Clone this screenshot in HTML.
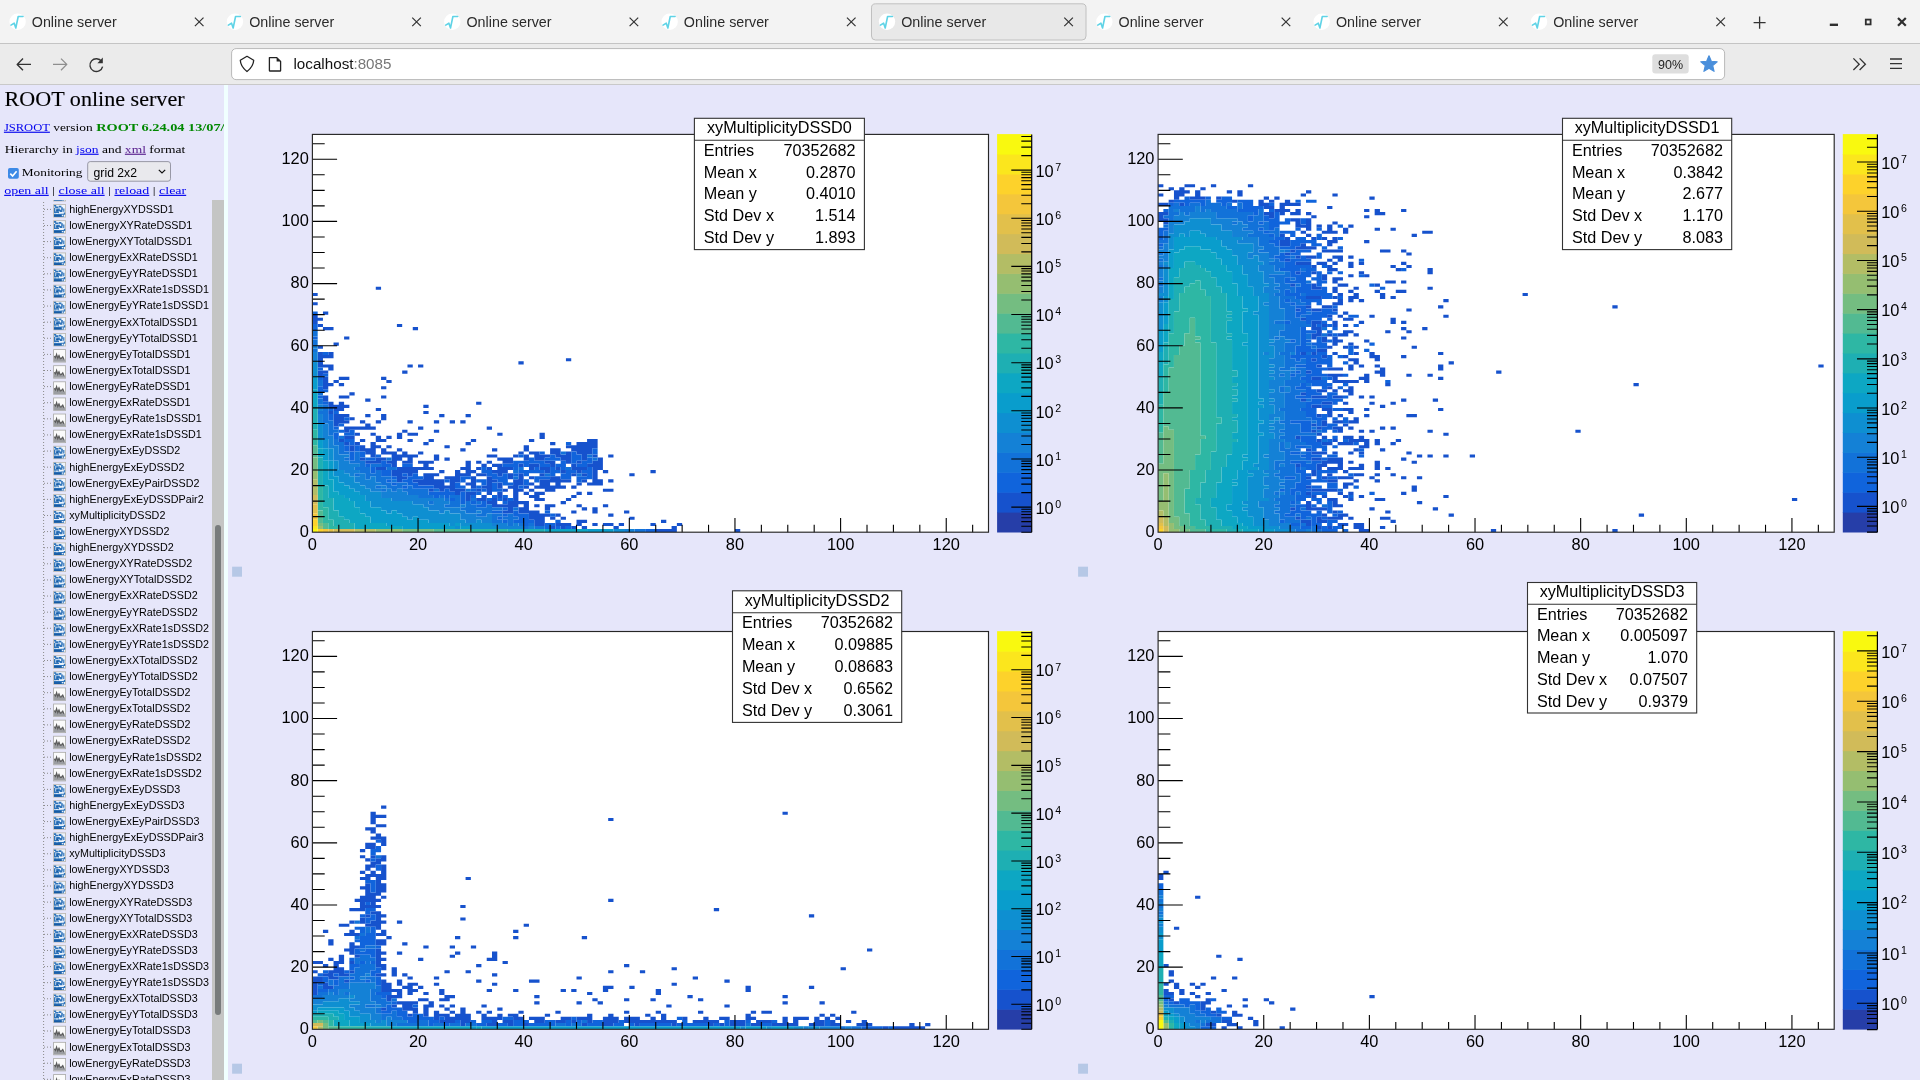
<!DOCTYPE html><html><head><meta charset="utf-8"><title>Online server</title><style>html,body{margin:0;padding:0;overflow:hidden;background:#e6e6fa}svg{display:block;will-change:transform}</style></head><body>
<svg width="1920" height="1080" viewBox="0 0 1920 1080">
<defs></defs>
<rect x="0" y="0" width="1920" height="1080" fill="#e6e6fa"/>
<rect x="0" y="0" width="1920" height="43" fill="#f3f3f3"/>
<rect x="0" y="43" width="1920" height="1" fill="#c4c4c4"/>
<rect x="0" y="44" width="1920" height="40.5" fill="#ebebeb"/>
<rect x="0" y="84" width="1920" height="1" fill="#c9c9c9"/>
<rect x="871.5" y="3.8" width="214.5" height="36.2" rx="4" fill="#e8e8e8" stroke="#c0c0c0" stroke-width="1"/>
<circle cx="17.6" cy="21.8" r="8.2" fill="#fff"/><path d="M11 25.1 L14.2 23.2 L15.8 28 L18.2 16.5 L23 16.5" fill="none" stroke="#5fd3e6" stroke-width="1.6" stroke-linejoin="round" stroke-linecap="round"/>
<text x="31.8" y="27" font-family='"Liberation Sans",sans-serif' font-size="14.3" fill="#2b2b2b">Online server</text>
<path d="M194.9 17.6 L203.5 26.2 M203.5 17.6 L194.9 26.2" stroke="#333" stroke-width="1.2" fill="none"/>
<circle cx="234.95" cy="21.8" r="8.2" fill="#fff"/><path d="M228.35 25.1 L231.55 23.2 L233.15 28 L235.55 16.5 L240.35 16.5" fill="none" stroke="#5fd3e6" stroke-width="1.6" stroke-linejoin="round" stroke-linecap="round"/>
<text x="249.15" y="27" font-family='"Liberation Sans",sans-serif' font-size="14.3" fill="#2b2b2b">Online server</text>
<path d="M412.25 17.6 L420.85 26.2 M420.85 17.6 L412.25 26.2" stroke="#333" stroke-width="1.2" fill="none"/>
<circle cx="452.3" cy="21.8" r="8.2" fill="#fff"/><path d="M445.7 25.1 L448.9 23.2 L450.5 28 L452.9 16.5 L457.7 16.5" fill="none" stroke="#5fd3e6" stroke-width="1.6" stroke-linejoin="round" stroke-linecap="round"/>
<text x="466.5" y="27" font-family='"Liberation Sans",sans-serif' font-size="14.3" fill="#2b2b2b">Online server</text>
<path d="M629.6 17.6 L638.2 26.2 M638.2 17.6 L629.6 26.2" stroke="#333" stroke-width="1.2" fill="none"/>
<circle cx="669.65" cy="21.8" r="8.2" fill="#fff"/><path d="M663.05 25.1 L666.25 23.2 L667.85 28 L670.25 16.5 L675.05 16.5" fill="none" stroke="#5fd3e6" stroke-width="1.6" stroke-linejoin="round" stroke-linecap="round"/>
<text x="683.85" y="27" font-family='"Liberation Sans",sans-serif' font-size="14.3" fill="#2b2b2b">Online server</text>
<path d="M846.95 17.6 L855.55 26.2 M855.55 17.6 L846.95 26.2" stroke="#333" stroke-width="1.2" fill="none"/>
<circle cx="887" cy="21.8" r="8.2" fill="#fff"/><path d="M880.4 25.1 L883.6 23.2 L885.2 28 L887.6 16.5 L892.4 16.5" fill="none" stroke="#5fd3e6" stroke-width="1.6" stroke-linejoin="round" stroke-linecap="round"/>
<text x="901.2" y="27" font-family='"Liberation Sans",sans-serif' font-size="14.3" fill="#2b2b2b">Online server</text>
<path d="M1064.3 17.6 L1072.9 26.2 M1072.9 17.6 L1064.3 26.2" stroke="#333" stroke-width="1.2" fill="none"/>
<circle cx="1104.35" cy="21.8" r="8.2" fill="#fff"/><path d="M1097.75 25.1 L1100.95 23.2 L1102.55 28 L1104.95 16.5 L1109.75 16.5" fill="none" stroke="#5fd3e6" stroke-width="1.6" stroke-linejoin="round" stroke-linecap="round"/>
<text x="1118.55" y="27" font-family='"Liberation Sans",sans-serif' font-size="14.3" fill="#2b2b2b">Online server</text>
<path d="M1281.65 17.6 L1290.25 26.2 M1290.25 17.6 L1281.65 26.2" stroke="#333" stroke-width="1.2" fill="none"/>
<circle cx="1321.7" cy="21.8" r="8.2" fill="#fff"/><path d="M1315.1 25.1 L1318.3 23.2 L1319.9 28 L1322.3 16.5 L1327.1 16.5" fill="none" stroke="#5fd3e6" stroke-width="1.6" stroke-linejoin="round" stroke-linecap="round"/>
<text x="1335.9" y="27" font-family='"Liberation Sans",sans-serif' font-size="14.3" fill="#2b2b2b">Online server</text>
<path d="M1499 17.6 L1507.6 26.2 M1507.6 17.6 L1499 26.2" stroke="#333" stroke-width="1.2" fill="none"/>
<circle cx="1539.05" cy="21.8" r="8.2" fill="#fff"/><path d="M1532.45 25.1 L1535.65 23.2 L1537.25 28 L1539.65 16.5 L1544.45 16.5" fill="none" stroke="#5fd3e6" stroke-width="1.6" stroke-linejoin="round" stroke-linecap="round"/>
<text x="1553.25" y="27" font-family='"Liberation Sans",sans-serif' font-size="14.3" fill="#2b2b2b">Online server</text>
<path d="M1716.35 17.6 L1724.95 26.2 M1724.95 17.6 L1716.35 26.2" stroke="#333" stroke-width="1.2" fill="none"/>
<path d="M1759.6 16.6 V28.8 M1753.6 22.6 H1765.6" stroke="#333" stroke-width="1.3" fill="none"/>
<rect x="1829.8" y="23.6" width="8.2" height="2.4" fill="#2e2e2e"/>
<rect x="1865.8" y="19.6" width="4.8" height="4.8" fill="none" stroke="#2e2e2e" stroke-width="1.8"/>
<path d="M1898 18 L1905.8 25.8 M1905.8 18 L1898 25.8" stroke="#2e2e2e" stroke-width="2.2" fill="none"/>
<path d="M17.2 64.4 H31 M23 58.6 L17.2 64.4 L23 70.2" stroke="#333" stroke-width="1.4" fill="none" stroke-linejoin="round"/>
<path d="M53 64.4 H66.8 M61 58.6 L66.8 64.4 L61 70.2" stroke="#8e8e8e" stroke-width="1.3" fill="none" stroke-linejoin="round"/>
<path d="M101.6 61.4 A6.4 6.4 0 1 0 102.6 66.6" stroke="#333" stroke-width="1.4" fill="none"/>
<path d="M102.8 57.6 L102.8 63.2 L97.4 63.2 Z" fill="#333"/>
<rect x="231.6" y="48.6" width="1493" height="31" rx="4.5" fill="#fff" stroke="#b9b9b9" stroke-width="1"/>
<path d="M247 56.3 L253.7 60.3 C253.5 65 250.8 68.6 247 71.6 C243.2 68.6 240.5 65 240.3 60.3 Z" fill="none" stroke="#222" stroke-width="1.3" stroke-linejoin="round"/>
<path d="M269.4 57.6 H276.8 L280.6 61.4 V70.4 Q280.6 71 280 71 H270 Q269.4 71 269.4 70.4 Z" fill="none" stroke="#222" stroke-width="1.3" stroke-linejoin="round"/>
<path d="M276.6 57.8 V61.6 H280.4 Z" fill="#222"/>
<text x="293.5" y="69" font-family='"Liberation Sans",sans-serif' font-size="15.2" fill="#111">localhost<tspan fill="#777">:8085</tspan></text>
<rect x="1652.3" y="54.3" width="36.4" height="19.2" rx="3" fill="#dedede"/>
<text x="1670.5" y="68.8" text-anchor="middle" font-family='"Liberation Sans",sans-serif' font-size="12.5" fill="#222">90%</text>
<polygon points="1709,55.8 1711.29,61.24 1717.18,61.74 1712.71,65.61 1714.05,71.36 1709,68.3 1703.95,71.36 1705.29,65.61 1700.82,61.74 1706.71,61.24" fill="#4a8fdb" stroke="#4a8fdb" stroke-width="1.2" stroke-linejoin="round"/>
<path d="M1853.4 58.4 L1859.2 64.2 L1853.4 70 M1859.6 58.4 L1865.4 64.2 L1859.6 70" stroke="#333" stroke-width="1.3" fill="none"/>
<path d="M1890 59 H1902 M1890 63.7 H1902 M1890 68.4 H1902" stroke="#333" stroke-width="1.3" fill="none"/>
<rect x="0" y="85" width="224" height="995" fill="#e6e6fa"/>
<rect x="224" y="85" width="4" height="995" fill="#f0ffff"/>
<text x="4.6" y="106.3" font-family='"Liberation Serif",serif' font-size="21.7" fill="#000" stroke="#000" stroke-width="0.12" textLength="180" lengthAdjust="spacingAndGlyphs">ROOT online server</text>
<clipPath id="lclip"><rect x="0" y="85" width="224" height="995"/></clipPath>
<g clip-path="url(#lclip)">
<text x="3.9" y="130.7" font-family='"Liberation Serif",serif' font-size="11.3" fill="#0000ee" text-decoration="underline" textLength="46" lengthAdjust="spacingAndGlyphs">JSROOT</text>
<text x="53.2" y="130.7" font-family='"Liberation Serif",serif' font-size="11.3" fill="#000" textLength="39.5" lengthAdjust="spacingAndGlyphs">version</text>
<text x="96.2" y="130.7" font-family='"Liberation Serif",serif' font-size="11.3" font-weight="bold" fill="#008800" textLength="157" lengthAdjust="spacingAndGlyphs">ROOT 6.24.04 13/07/2021</text>
</g>
<text x="4.8" y="152.7" font-family='"Liberation Serif",serif' font-size="11.3" fill="#000" textLength="180.5" lengthAdjust="spacingAndGlyphs">Hierarchy in <tspan fill="#0000ee" text-decoration="underline">json</tspan> and <tspan fill="#551a8b" text-decoration="underline">xml</tspan> format</text>
<rect x="8" y="168" width="10.8" height="10.8" rx="1.8" fill="#3d8ae6"/>
<path d="M10.3 173.6 L12.6 176 L16.6 171.2" stroke="#fff" stroke-width="1.6" fill="none"/>
<text x="21.8" y="175.8" font-family='"Liberation Serif",serif' font-size="11.3" fill="#000" textLength="60.6" lengthAdjust="spacingAndGlyphs">Monitoring</text>
<rect x="87.7" y="161.6" width="82.8" height="19.6" rx="2.5" fill="#e9e9ed" stroke="#8f8f9d" stroke-width="0.9"/>
<text x="93.6" y="177" font-family='"Liberation Sans",sans-serif' font-size="12.2" fill="#000">grid 2x2</text>
<path d="M158.8 169.8 L162 173 L165.2 169.8" stroke="#111" stroke-width="1.2" fill="none"/>
<text x="4.2" y="193.8" font-family='"Liberation Serif",serif' font-size="11.3" fill="#000" textLength="182" lengthAdjust="spacingAndGlyphs"><tspan fill="#0000ee" text-decoration="underline">open all</tspan> | <tspan fill="#0000ee" text-decoration="underline">close all</tspan> | <tspan fill="#0000ee" text-decoration="underline">reload</tspan> | <tspan fill="#0000ee" text-decoration="underline">clear</tspan></text>
<clipPath id="tclip"><rect x="0" y="200" width="212" height="880"/></clipPath>
<g clip-path="url(#tclip)">
<path d="M43.6 196 V1080" stroke="#8a8a8a" stroke-width="1" stroke-dasharray="1 2" fill="none"/>
<path d="M44 193.29 H53" stroke="#8a8a8a" stroke-width="1" stroke-dasharray="1 2" fill="none"/>
<g transform="translate(53.2 188.09)"><rect x="0" y="0" width="12.8" height="13.3" fill="#b8b5ad"/><rect x="0.8" y="0.8" width="11.2" height="11.7" fill="#eef4fb"/><path d="M0.8 0.8h2.2v1.6h-2.2z M2 2.2h3.2v1.6h-3.2z M5.6 1.6h2.6v1.8h-2.6z M8 3h1.6v3h-1.6z M0.8 3.6h1.4v4h-1.4z M3 4.4h3.6v2.6h-3.6z M6.6 5.6h2.6v2.2h-2.6z M10 4.2h1.2v3.4h-1.2z M0.8 7.4h5v1.4h-5z M0.8 9.6h10v2.9h-10z M10.6 8.4h1.4v2.2h-1.4z" fill="#2f74bb"/><path d="M0.8 10.8h7.8v1.7h-7.8z M3 6h2v1.4h-2z" fill="#175aa3"/><path d="M3 8.8h1.6v0.9h-1.6z M6 8.6h1.4v1h-1.4z M8.6 10.6h1.6v1.2h-1.6z" fill="#e9f1fa"/></g>
<text x="69.2" y="196.69" font-family='"Liberation Sans",sans-serif' font-size="10.75" fill="#000">lowEnergyXYDSSD1</text>
<path d="M44 209.4 H53" stroke="#8a8a8a" stroke-width="1" stroke-dasharray="1 2" fill="none"/>
<g transform="translate(53.2 204.2)"><rect x="0" y="0" width="12.8" height="13.3" fill="#b8b5ad"/><rect x="0.8" y="0.8" width="11.2" height="11.7" fill="#eef4fb"/><path d="M0.8 0.8h2.2v1.6h-2.2z M2 2.2h3.2v1.6h-3.2z M5.6 1.6h2.6v1.8h-2.6z M8 3h1.6v3h-1.6z M0.8 3.6h1.4v4h-1.4z M3 4.4h3.6v2.6h-3.6z M6.6 5.6h2.6v2.2h-2.6z M10 4.2h1.2v3.4h-1.2z M0.8 7.4h5v1.4h-5z M0.8 9.6h10v2.9h-10z M10.6 8.4h1.4v2.2h-1.4z" fill="#2f74bb"/><path d="M0.8 10.8h7.8v1.7h-7.8z M3 6h2v1.4h-2z" fill="#175aa3"/><path d="M3 8.8h1.6v0.9h-1.6z M6 8.6h1.4v1h-1.4z M8.6 10.6h1.6v1.2h-1.6z" fill="#e9f1fa"/></g>
<text x="69.2" y="212.8" font-family='"Liberation Sans",sans-serif' font-size="10.75" fill="#000">highEnergyXYDSSD1</text>
<path d="M44 225.51 H53" stroke="#8a8a8a" stroke-width="1" stroke-dasharray="1 2" fill="none"/>
<g transform="translate(53.2 220.31)"><rect x="0" y="0" width="12.8" height="13.3" fill="#b8b5ad"/><rect x="0.8" y="0.8" width="11.2" height="11.7" fill="#eef4fb"/><path d="M0.8 0.8h2.2v1.6h-2.2z M2 2.2h3.2v1.6h-3.2z M5.6 1.6h2.6v1.8h-2.6z M8 3h1.6v3h-1.6z M0.8 3.6h1.4v4h-1.4z M3 4.4h3.6v2.6h-3.6z M6.6 5.6h2.6v2.2h-2.6z M10 4.2h1.2v3.4h-1.2z M0.8 7.4h5v1.4h-5z M0.8 9.6h10v2.9h-10z M10.6 8.4h1.4v2.2h-1.4z" fill="#2f74bb"/><path d="M0.8 10.8h7.8v1.7h-7.8z M3 6h2v1.4h-2z" fill="#175aa3"/><path d="M3 8.8h1.6v0.9h-1.6z M6 8.6h1.4v1h-1.4z M8.6 10.6h1.6v1.2h-1.6z" fill="#e9f1fa"/></g>
<text x="69.2" y="228.91" font-family='"Liberation Sans",sans-serif' font-size="10.75" fill="#000">lowEnergyXYRateDSSD1</text>
<path d="M44 241.62 H53" stroke="#8a8a8a" stroke-width="1" stroke-dasharray="1 2" fill="none"/>
<g transform="translate(53.2 236.42)"><rect x="0" y="0" width="12.8" height="13.3" fill="#b8b5ad"/><rect x="0.8" y="0.8" width="11.2" height="11.7" fill="#eef4fb"/><path d="M0.8 0.8h2.2v1.6h-2.2z M2 2.2h3.2v1.6h-3.2z M5.6 1.6h2.6v1.8h-2.6z M8 3h1.6v3h-1.6z M0.8 3.6h1.4v4h-1.4z M3 4.4h3.6v2.6h-3.6z M6.6 5.6h2.6v2.2h-2.6z M10 4.2h1.2v3.4h-1.2z M0.8 7.4h5v1.4h-5z M0.8 9.6h10v2.9h-10z M10.6 8.4h1.4v2.2h-1.4z" fill="#2f74bb"/><path d="M0.8 10.8h7.8v1.7h-7.8z M3 6h2v1.4h-2z" fill="#175aa3"/><path d="M3 8.8h1.6v0.9h-1.6z M6 8.6h1.4v1h-1.4z M8.6 10.6h1.6v1.2h-1.6z" fill="#e9f1fa"/></g>
<text x="69.2" y="245.02" font-family='"Liberation Sans",sans-serif' font-size="10.75" fill="#000">lowEnergyXYTotalDSSD1</text>
<path d="M44 257.73 H53" stroke="#8a8a8a" stroke-width="1" stroke-dasharray="1 2" fill="none"/>
<g transform="translate(53.2 252.53)"><rect x="0" y="0" width="12.8" height="13.3" fill="#b8b5ad"/><rect x="0.8" y="0.8" width="11.2" height="11.7" fill="#eef4fb"/><path d="M0.8 0.8h2.2v1.6h-2.2z M2 2.2h3.2v1.6h-3.2z M5.6 1.6h2.6v1.8h-2.6z M8 3h1.6v3h-1.6z M0.8 3.6h1.4v4h-1.4z M3 4.4h3.6v2.6h-3.6z M6.6 5.6h2.6v2.2h-2.6z M10 4.2h1.2v3.4h-1.2z M0.8 7.4h5v1.4h-5z M0.8 9.6h10v2.9h-10z M10.6 8.4h1.4v2.2h-1.4z" fill="#2f74bb"/><path d="M0.8 10.8h7.8v1.7h-7.8z M3 6h2v1.4h-2z" fill="#175aa3"/><path d="M3 8.8h1.6v0.9h-1.6z M6 8.6h1.4v1h-1.4z M8.6 10.6h1.6v1.2h-1.6z" fill="#e9f1fa"/></g>
<text x="69.2" y="261.13" font-family='"Liberation Sans",sans-serif' font-size="10.75" fill="#000">lowEnergyExXRateDSSD1</text>
<path d="M44 273.84 H53" stroke="#8a8a8a" stroke-width="1" stroke-dasharray="1 2" fill="none"/>
<g transform="translate(53.2 268.64)"><rect x="0" y="0" width="12.8" height="13.3" fill="#b8b5ad"/><rect x="0.8" y="0.8" width="11.2" height="11.7" fill="#eef4fb"/><path d="M0.8 0.8h2.2v1.6h-2.2z M2 2.2h3.2v1.6h-3.2z M5.6 1.6h2.6v1.8h-2.6z M8 3h1.6v3h-1.6z M0.8 3.6h1.4v4h-1.4z M3 4.4h3.6v2.6h-3.6z M6.6 5.6h2.6v2.2h-2.6z M10 4.2h1.2v3.4h-1.2z M0.8 7.4h5v1.4h-5z M0.8 9.6h10v2.9h-10z M10.6 8.4h1.4v2.2h-1.4z" fill="#2f74bb"/><path d="M0.8 10.8h7.8v1.7h-7.8z M3 6h2v1.4h-2z" fill="#175aa3"/><path d="M3 8.8h1.6v0.9h-1.6z M6 8.6h1.4v1h-1.4z M8.6 10.6h1.6v1.2h-1.6z" fill="#e9f1fa"/></g>
<text x="69.2" y="277.24" font-family='"Liberation Sans",sans-serif' font-size="10.75" fill="#000">lowEnergyEyYRateDSSD1</text>
<path d="M44 289.95 H53" stroke="#8a8a8a" stroke-width="1" stroke-dasharray="1 2" fill="none"/>
<g transform="translate(53.2 284.75)"><rect x="0" y="0" width="12.8" height="13.3" fill="#b8b5ad"/><rect x="0.8" y="0.8" width="11.2" height="11.7" fill="#eef4fb"/><path d="M0.8 0.8h2.2v1.6h-2.2z M2 2.2h3.2v1.6h-3.2z M5.6 1.6h2.6v1.8h-2.6z M8 3h1.6v3h-1.6z M0.8 3.6h1.4v4h-1.4z M3 4.4h3.6v2.6h-3.6z M6.6 5.6h2.6v2.2h-2.6z M10 4.2h1.2v3.4h-1.2z M0.8 7.4h5v1.4h-5z M0.8 9.6h10v2.9h-10z M10.6 8.4h1.4v2.2h-1.4z" fill="#2f74bb"/><path d="M0.8 10.8h7.8v1.7h-7.8z M3 6h2v1.4h-2z" fill="#175aa3"/><path d="M3 8.8h1.6v0.9h-1.6z M6 8.6h1.4v1h-1.4z M8.6 10.6h1.6v1.2h-1.6z" fill="#e9f1fa"/></g>
<text x="69.2" y="293.35" font-family='"Liberation Sans",sans-serif' font-size="10.75" fill="#000">lowEnergyExXRate1sDSSD1</text>
<path d="M44 306.06 H53" stroke="#8a8a8a" stroke-width="1" stroke-dasharray="1 2" fill="none"/>
<g transform="translate(53.2 300.86)"><rect x="0" y="0" width="12.8" height="13.3" fill="#b8b5ad"/><rect x="0.8" y="0.8" width="11.2" height="11.7" fill="#eef4fb"/><path d="M0.8 0.8h2.2v1.6h-2.2z M2 2.2h3.2v1.6h-3.2z M5.6 1.6h2.6v1.8h-2.6z M8 3h1.6v3h-1.6z M0.8 3.6h1.4v4h-1.4z M3 4.4h3.6v2.6h-3.6z M6.6 5.6h2.6v2.2h-2.6z M10 4.2h1.2v3.4h-1.2z M0.8 7.4h5v1.4h-5z M0.8 9.6h10v2.9h-10z M10.6 8.4h1.4v2.2h-1.4z" fill="#2f74bb"/><path d="M0.8 10.8h7.8v1.7h-7.8z M3 6h2v1.4h-2z" fill="#175aa3"/><path d="M3 8.8h1.6v0.9h-1.6z M6 8.6h1.4v1h-1.4z M8.6 10.6h1.6v1.2h-1.6z" fill="#e9f1fa"/></g>
<text x="69.2" y="309.46" font-family='"Liberation Sans",sans-serif' font-size="10.75" fill="#000">lowEnergyEyYRate1sDSSD1</text>
<path d="M44 322.17 H53" stroke="#8a8a8a" stroke-width="1" stroke-dasharray="1 2" fill="none"/>
<g transform="translate(53.2 316.97)"><rect x="0" y="0" width="12.8" height="13.3" fill="#b8b5ad"/><rect x="0.8" y="0.8" width="11.2" height="11.7" fill="#eef4fb"/><path d="M0.8 0.8h2.2v1.6h-2.2z M2 2.2h3.2v1.6h-3.2z M5.6 1.6h2.6v1.8h-2.6z M8 3h1.6v3h-1.6z M0.8 3.6h1.4v4h-1.4z M3 4.4h3.6v2.6h-3.6z M6.6 5.6h2.6v2.2h-2.6z M10 4.2h1.2v3.4h-1.2z M0.8 7.4h5v1.4h-5z M0.8 9.6h10v2.9h-10z M10.6 8.4h1.4v2.2h-1.4z" fill="#2f74bb"/><path d="M0.8 10.8h7.8v1.7h-7.8z M3 6h2v1.4h-2z" fill="#175aa3"/><path d="M3 8.8h1.6v0.9h-1.6z M6 8.6h1.4v1h-1.4z M8.6 10.6h1.6v1.2h-1.6z" fill="#e9f1fa"/></g>
<text x="69.2" y="325.57" font-family='"Liberation Sans",sans-serif' font-size="10.75" fill="#000">lowEnergyExXTotalDSSD1</text>
<path d="M44 338.28 H53" stroke="#8a8a8a" stroke-width="1" stroke-dasharray="1 2" fill="none"/>
<g transform="translate(53.2 333.08)"><rect x="0" y="0" width="12.8" height="13.3" fill="#b8b5ad"/><rect x="0.8" y="0.8" width="11.2" height="11.7" fill="#eef4fb"/><path d="M0.8 0.8h2.2v1.6h-2.2z M2 2.2h3.2v1.6h-3.2z M5.6 1.6h2.6v1.8h-2.6z M8 3h1.6v3h-1.6z M0.8 3.6h1.4v4h-1.4z M3 4.4h3.6v2.6h-3.6z M6.6 5.6h2.6v2.2h-2.6z M10 4.2h1.2v3.4h-1.2z M0.8 7.4h5v1.4h-5z M0.8 9.6h10v2.9h-10z M10.6 8.4h1.4v2.2h-1.4z" fill="#2f74bb"/><path d="M0.8 10.8h7.8v1.7h-7.8z M3 6h2v1.4h-2z" fill="#175aa3"/><path d="M3 8.8h1.6v0.9h-1.6z M6 8.6h1.4v1h-1.4z M8.6 10.6h1.6v1.2h-1.6z" fill="#e9f1fa"/></g>
<text x="69.2" y="341.68" font-family='"Liberation Sans",sans-serif' font-size="10.75" fill="#000">lowEnergyEyYTotalDSSD1</text>
<path d="M44 354.39 H53" stroke="#8a8a8a" stroke-width="1" stroke-dasharray="1 2" fill="none"/>
<g transform="translate(53.2 349.19)"><rect x="0" y="0" width="12.8" height="13.3" fill="#a9a9a6"/><rect x="0.8" y="0.8" width="11.2" height="11.7" fill="#fbfbfb"/><path d="M0.8 12.5V6.6L2 7.4L3.2 4.4L4.6 7.8L5.8 5.6L7 8.4L8.2 8L9.4 6.8L10.6 9.6L12 10.8V12.5Z" fill="#9c9ea2"/><path d="M1.2 7L2.4 8.6L3.4 5L4.6 9.2L5.8 6.4L7 9.6L8.4 9.2L9.6 7.6L10.8 10.4" stroke="#5a5a5a" stroke-width="1.1" fill="none"/></g>
<text x="69.2" y="357.79" font-family='"Liberation Sans",sans-serif' font-size="10.75" fill="#000">lowEnergyEyTotalDSSD1</text>
<path d="M44 370.5 H53" stroke="#8a8a8a" stroke-width="1" stroke-dasharray="1 2" fill="none"/>
<g transform="translate(53.2 365.3)"><rect x="0" y="0" width="12.8" height="13.3" fill="#a9a9a6"/><rect x="0.8" y="0.8" width="11.2" height="11.7" fill="#fbfbfb"/><path d="M0.8 12.5V6.6L2 7.4L3.2 4.4L4.6 7.8L5.8 5.6L7 8.4L8.2 8L9.4 6.8L10.6 9.6L12 10.8V12.5Z" fill="#9c9ea2"/><path d="M1.2 7L2.4 8.6L3.4 5L4.6 9.2L5.8 6.4L7 9.6L8.4 9.2L9.6 7.6L10.8 10.4" stroke="#5a5a5a" stroke-width="1.1" fill="none"/></g>
<text x="69.2" y="373.9" font-family='"Liberation Sans",sans-serif' font-size="10.75" fill="#000">lowEnergyExTotalDSSD1</text>
<path d="M44 386.61 H53" stroke="#8a8a8a" stroke-width="1" stroke-dasharray="1 2" fill="none"/>
<g transform="translate(53.2 381.41)"><rect x="0" y="0" width="12.8" height="13.3" fill="#a9a9a6"/><rect x="0.8" y="0.8" width="11.2" height="11.7" fill="#fbfbfb"/><path d="M0.8 12.5V6.6L2 7.4L3.2 4.4L4.6 7.8L5.8 5.6L7 8.4L8.2 8L9.4 6.8L10.6 9.6L12 10.8V12.5Z" fill="#9c9ea2"/><path d="M1.2 7L2.4 8.6L3.4 5L4.6 9.2L5.8 6.4L7 9.6L8.4 9.2L9.6 7.6L10.8 10.4" stroke="#5a5a5a" stroke-width="1.1" fill="none"/></g>
<text x="69.2" y="390.01" font-family='"Liberation Sans",sans-serif' font-size="10.75" fill="#000">lowEnergyEyRateDSSD1</text>
<path d="M44 402.72 H53" stroke="#8a8a8a" stroke-width="1" stroke-dasharray="1 2" fill="none"/>
<g transform="translate(53.2 397.52)"><rect x="0" y="0" width="12.8" height="13.3" fill="#a9a9a6"/><rect x="0.8" y="0.8" width="11.2" height="11.7" fill="#fbfbfb"/><path d="M0.8 12.5V6.6L2 7.4L3.2 4.4L4.6 7.8L5.8 5.6L7 8.4L8.2 8L9.4 6.8L10.6 9.6L12 10.8V12.5Z" fill="#9c9ea2"/><path d="M1.2 7L2.4 8.6L3.4 5L4.6 9.2L5.8 6.4L7 9.6L8.4 9.2L9.6 7.6L10.8 10.4" stroke="#5a5a5a" stroke-width="1.1" fill="none"/></g>
<text x="69.2" y="406.12" font-family='"Liberation Sans",sans-serif' font-size="10.75" fill="#000">lowEnergyExRateDSSD1</text>
<path d="M44 418.83 H53" stroke="#8a8a8a" stroke-width="1" stroke-dasharray="1 2" fill="none"/>
<g transform="translate(53.2 413.63)"><rect x="0" y="0" width="12.8" height="13.3" fill="#a9a9a6"/><rect x="0.8" y="0.8" width="11.2" height="11.7" fill="#fbfbfb"/><path d="M0.8 12.5V6.6L2 7.4L3.2 4.4L4.6 7.8L5.8 5.6L7 8.4L8.2 8L9.4 6.8L10.6 9.6L12 10.8V12.5Z" fill="#9c9ea2"/><path d="M1.2 7L2.4 8.6L3.4 5L4.6 9.2L5.8 6.4L7 9.6L8.4 9.2L9.6 7.6L10.8 10.4" stroke="#5a5a5a" stroke-width="1.1" fill="none"/></g>
<text x="69.2" y="422.23" font-family='"Liberation Sans",sans-serif' font-size="10.75" fill="#000">lowEnergyEyRate1sDSSD1</text>
<path d="M44 434.94 H53" stroke="#8a8a8a" stroke-width="1" stroke-dasharray="1 2" fill="none"/>
<g transform="translate(53.2 429.74)"><rect x="0" y="0" width="12.8" height="13.3" fill="#a9a9a6"/><rect x="0.8" y="0.8" width="11.2" height="11.7" fill="#fbfbfb"/><path d="M0.8 12.5V6.6L2 7.4L3.2 4.4L4.6 7.8L5.8 5.6L7 8.4L8.2 8L9.4 6.8L10.6 9.6L12 10.8V12.5Z" fill="#9c9ea2"/><path d="M1.2 7L2.4 8.6L3.4 5L4.6 9.2L5.8 6.4L7 9.6L8.4 9.2L9.6 7.6L10.8 10.4" stroke="#5a5a5a" stroke-width="1.1" fill="none"/></g>
<text x="69.2" y="438.34" font-family='"Liberation Sans",sans-serif' font-size="10.75" fill="#000">lowEnergyExRate1sDSSD1</text>
<path d="M44 451.05 H53" stroke="#8a8a8a" stroke-width="1" stroke-dasharray="1 2" fill="none"/>
<g transform="translate(53.2 445.85)"><rect x="0" y="0" width="12.8" height="13.3" fill="#b8b5ad"/><rect x="0.8" y="0.8" width="11.2" height="11.7" fill="#eef4fb"/><path d="M0.8 0.8h2.2v1.6h-2.2z M2 2.2h3.2v1.6h-3.2z M5.6 1.6h2.6v1.8h-2.6z M8 3h1.6v3h-1.6z M0.8 3.6h1.4v4h-1.4z M3 4.4h3.6v2.6h-3.6z M6.6 5.6h2.6v2.2h-2.6z M10 4.2h1.2v3.4h-1.2z M0.8 7.4h5v1.4h-5z M0.8 9.6h10v2.9h-10z M10.6 8.4h1.4v2.2h-1.4z" fill="#2f74bb"/><path d="M0.8 10.8h7.8v1.7h-7.8z M3 6h2v1.4h-2z" fill="#175aa3"/><path d="M3 8.8h1.6v0.9h-1.6z M6 8.6h1.4v1h-1.4z M8.6 10.6h1.6v1.2h-1.6z" fill="#e9f1fa"/></g>
<text x="69.2" y="454.45" font-family='"Liberation Sans",sans-serif' font-size="10.75" fill="#000">lowEnergyExEyDSSD2</text>
<path d="M44 467.16 H53" stroke="#8a8a8a" stroke-width="1" stroke-dasharray="1 2" fill="none"/>
<g transform="translate(53.2 461.96)"><rect x="0" y="0" width="12.8" height="13.3" fill="#b8b5ad"/><rect x="0.8" y="0.8" width="11.2" height="11.7" fill="#eef4fb"/><path d="M0.8 0.8h2.2v1.6h-2.2z M2 2.2h3.2v1.6h-3.2z M5.6 1.6h2.6v1.8h-2.6z M8 3h1.6v3h-1.6z M0.8 3.6h1.4v4h-1.4z M3 4.4h3.6v2.6h-3.6z M6.6 5.6h2.6v2.2h-2.6z M10 4.2h1.2v3.4h-1.2z M0.8 7.4h5v1.4h-5z M0.8 9.6h10v2.9h-10z M10.6 8.4h1.4v2.2h-1.4z" fill="#2f74bb"/><path d="M0.8 10.8h7.8v1.7h-7.8z M3 6h2v1.4h-2z" fill="#175aa3"/><path d="M3 8.8h1.6v0.9h-1.6z M6 8.6h1.4v1h-1.4z M8.6 10.6h1.6v1.2h-1.6z" fill="#e9f1fa"/></g>
<text x="69.2" y="470.56" font-family='"Liberation Sans",sans-serif' font-size="10.75" fill="#000">highEnergyExEyDSSD2</text>
<path d="M44 483.27 H53" stroke="#8a8a8a" stroke-width="1" stroke-dasharray="1 2" fill="none"/>
<g transform="translate(53.2 478.07)"><rect x="0" y="0" width="12.8" height="13.3" fill="#b8b5ad"/><rect x="0.8" y="0.8" width="11.2" height="11.7" fill="#eef4fb"/><path d="M0.8 0.8h2.2v1.6h-2.2z M2 2.2h3.2v1.6h-3.2z M5.6 1.6h2.6v1.8h-2.6z M8 3h1.6v3h-1.6z M0.8 3.6h1.4v4h-1.4z M3 4.4h3.6v2.6h-3.6z M6.6 5.6h2.6v2.2h-2.6z M10 4.2h1.2v3.4h-1.2z M0.8 7.4h5v1.4h-5z M0.8 9.6h10v2.9h-10z M10.6 8.4h1.4v2.2h-1.4z" fill="#2f74bb"/><path d="M0.8 10.8h7.8v1.7h-7.8z M3 6h2v1.4h-2z" fill="#175aa3"/><path d="M3 8.8h1.6v0.9h-1.6z M6 8.6h1.4v1h-1.4z M8.6 10.6h1.6v1.2h-1.6z" fill="#e9f1fa"/></g>
<text x="69.2" y="486.67" font-family='"Liberation Sans",sans-serif' font-size="10.75" fill="#000">lowEnergyExEyPairDSSD2</text>
<path d="M44 499.38 H53" stroke="#8a8a8a" stroke-width="1" stroke-dasharray="1 2" fill="none"/>
<g transform="translate(53.2 494.18)"><rect x="0" y="0" width="12.8" height="13.3" fill="#b8b5ad"/><rect x="0.8" y="0.8" width="11.2" height="11.7" fill="#eef4fb"/><path d="M0.8 0.8h2.2v1.6h-2.2z M2 2.2h3.2v1.6h-3.2z M5.6 1.6h2.6v1.8h-2.6z M8 3h1.6v3h-1.6z M0.8 3.6h1.4v4h-1.4z M3 4.4h3.6v2.6h-3.6z M6.6 5.6h2.6v2.2h-2.6z M10 4.2h1.2v3.4h-1.2z M0.8 7.4h5v1.4h-5z M0.8 9.6h10v2.9h-10z M10.6 8.4h1.4v2.2h-1.4z" fill="#2f74bb"/><path d="M0.8 10.8h7.8v1.7h-7.8z M3 6h2v1.4h-2z" fill="#175aa3"/><path d="M3 8.8h1.6v0.9h-1.6z M6 8.6h1.4v1h-1.4z M8.6 10.6h1.6v1.2h-1.6z" fill="#e9f1fa"/></g>
<text x="69.2" y="502.78" font-family='"Liberation Sans",sans-serif' font-size="10.75" fill="#000">highEnergyExEyDSSDPair2</text>
<path d="M44 515.49 H53" stroke="#8a8a8a" stroke-width="1" stroke-dasharray="1 2" fill="none"/>
<g transform="translate(53.2 510.29)"><rect x="0" y="0" width="12.8" height="13.3" fill="#b8b5ad"/><rect x="0.8" y="0.8" width="11.2" height="11.7" fill="#eef4fb"/><path d="M0.8 0.8h2.2v1.6h-2.2z M2 2.2h3.2v1.6h-3.2z M5.6 1.6h2.6v1.8h-2.6z M8 3h1.6v3h-1.6z M0.8 3.6h1.4v4h-1.4z M3 4.4h3.6v2.6h-3.6z M6.6 5.6h2.6v2.2h-2.6z M10 4.2h1.2v3.4h-1.2z M0.8 7.4h5v1.4h-5z M0.8 9.6h10v2.9h-10z M10.6 8.4h1.4v2.2h-1.4z" fill="#2f74bb"/><path d="M0.8 10.8h7.8v1.7h-7.8z M3 6h2v1.4h-2z" fill="#175aa3"/><path d="M3 8.8h1.6v0.9h-1.6z M6 8.6h1.4v1h-1.4z M8.6 10.6h1.6v1.2h-1.6z" fill="#e9f1fa"/></g>
<text x="69.2" y="518.89" font-family='"Liberation Sans",sans-serif' font-size="10.75" fill="#000">xyMultiplicityDSSD2</text>
<path d="M44 531.6 H53" stroke="#8a8a8a" stroke-width="1" stroke-dasharray="1 2" fill="none"/>
<g transform="translate(53.2 526.4)"><rect x="0" y="0" width="12.8" height="13.3" fill="#b8b5ad"/><rect x="0.8" y="0.8" width="11.2" height="11.7" fill="#eef4fb"/><path d="M0.8 0.8h2.2v1.6h-2.2z M2 2.2h3.2v1.6h-3.2z M5.6 1.6h2.6v1.8h-2.6z M8 3h1.6v3h-1.6z M0.8 3.6h1.4v4h-1.4z M3 4.4h3.6v2.6h-3.6z M6.6 5.6h2.6v2.2h-2.6z M10 4.2h1.2v3.4h-1.2z M0.8 7.4h5v1.4h-5z M0.8 9.6h10v2.9h-10z M10.6 8.4h1.4v2.2h-1.4z" fill="#2f74bb"/><path d="M0.8 10.8h7.8v1.7h-7.8z M3 6h2v1.4h-2z" fill="#175aa3"/><path d="M3 8.8h1.6v0.9h-1.6z M6 8.6h1.4v1h-1.4z M8.6 10.6h1.6v1.2h-1.6z" fill="#e9f1fa"/></g>
<text x="69.2" y="535" font-family='"Liberation Sans",sans-serif' font-size="10.75" fill="#000">lowEnergyXYDSSD2</text>
<path d="M44 547.71 H53" stroke="#8a8a8a" stroke-width="1" stroke-dasharray="1 2" fill="none"/>
<g transform="translate(53.2 542.51)"><rect x="0" y="0" width="12.8" height="13.3" fill="#b8b5ad"/><rect x="0.8" y="0.8" width="11.2" height="11.7" fill="#eef4fb"/><path d="M0.8 0.8h2.2v1.6h-2.2z M2 2.2h3.2v1.6h-3.2z M5.6 1.6h2.6v1.8h-2.6z M8 3h1.6v3h-1.6z M0.8 3.6h1.4v4h-1.4z M3 4.4h3.6v2.6h-3.6z M6.6 5.6h2.6v2.2h-2.6z M10 4.2h1.2v3.4h-1.2z M0.8 7.4h5v1.4h-5z M0.8 9.6h10v2.9h-10z M10.6 8.4h1.4v2.2h-1.4z" fill="#2f74bb"/><path d="M0.8 10.8h7.8v1.7h-7.8z M3 6h2v1.4h-2z" fill="#175aa3"/><path d="M3 8.8h1.6v0.9h-1.6z M6 8.6h1.4v1h-1.4z M8.6 10.6h1.6v1.2h-1.6z" fill="#e9f1fa"/></g>
<text x="69.2" y="551.11" font-family='"Liberation Sans",sans-serif' font-size="10.75" fill="#000">highEnergyXYDSSD2</text>
<path d="M44 563.82 H53" stroke="#8a8a8a" stroke-width="1" stroke-dasharray="1 2" fill="none"/>
<g transform="translate(53.2 558.62)"><rect x="0" y="0" width="12.8" height="13.3" fill="#b8b5ad"/><rect x="0.8" y="0.8" width="11.2" height="11.7" fill="#eef4fb"/><path d="M0.8 0.8h2.2v1.6h-2.2z M2 2.2h3.2v1.6h-3.2z M5.6 1.6h2.6v1.8h-2.6z M8 3h1.6v3h-1.6z M0.8 3.6h1.4v4h-1.4z M3 4.4h3.6v2.6h-3.6z M6.6 5.6h2.6v2.2h-2.6z M10 4.2h1.2v3.4h-1.2z M0.8 7.4h5v1.4h-5z M0.8 9.6h10v2.9h-10z M10.6 8.4h1.4v2.2h-1.4z" fill="#2f74bb"/><path d="M0.8 10.8h7.8v1.7h-7.8z M3 6h2v1.4h-2z" fill="#175aa3"/><path d="M3 8.8h1.6v0.9h-1.6z M6 8.6h1.4v1h-1.4z M8.6 10.6h1.6v1.2h-1.6z" fill="#e9f1fa"/></g>
<text x="69.2" y="567.22" font-family='"Liberation Sans",sans-serif' font-size="10.75" fill="#000">lowEnergyXYRateDSSD2</text>
<path d="M44 579.93 H53" stroke="#8a8a8a" stroke-width="1" stroke-dasharray="1 2" fill="none"/>
<g transform="translate(53.2 574.73)"><rect x="0" y="0" width="12.8" height="13.3" fill="#b8b5ad"/><rect x="0.8" y="0.8" width="11.2" height="11.7" fill="#eef4fb"/><path d="M0.8 0.8h2.2v1.6h-2.2z M2 2.2h3.2v1.6h-3.2z M5.6 1.6h2.6v1.8h-2.6z M8 3h1.6v3h-1.6z M0.8 3.6h1.4v4h-1.4z M3 4.4h3.6v2.6h-3.6z M6.6 5.6h2.6v2.2h-2.6z M10 4.2h1.2v3.4h-1.2z M0.8 7.4h5v1.4h-5z M0.8 9.6h10v2.9h-10z M10.6 8.4h1.4v2.2h-1.4z" fill="#2f74bb"/><path d="M0.8 10.8h7.8v1.7h-7.8z M3 6h2v1.4h-2z" fill="#175aa3"/><path d="M3 8.8h1.6v0.9h-1.6z M6 8.6h1.4v1h-1.4z M8.6 10.6h1.6v1.2h-1.6z" fill="#e9f1fa"/></g>
<text x="69.2" y="583.33" font-family='"Liberation Sans",sans-serif' font-size="10.75" fill="#000">lowEnergyXYTotalDSSD2</text>
<path d="M44 596.04 H53" stroke="#8a8a8a" stroke-width="1" stroke-dasharray="1 2" fill="none"/>
<g transform="translate(53.2 590.84)"><rect x="0" y="0" width="12.8" height="13.3" fill="#b8b5ad"/><rect x="0.8" y="0.8" width="11.2" height="11.7" fill="#eef4fb"/><path d="M0.8 0.8h2.2v1.6h-2.2z M2 2.2h3.2v1.6h-3.2z M5.6 1.6h2.6v1.8h-2.6z M8 3h1.6v3h-1.6z M0.8 3.6h1.4v4h-1.4z M3 4.4h3.6v2.6h-3.6z M6.6 5.6h2.6v2.2h-2.6z M10 4.2h1.2v3.4h-1.2z M0.8 7.4h5v1.4h-5z M0.8 9.6h10v2.9h-10z M10.6 8.4h1.4v2.2h-1.4z" fill="#2f74bb"/><path d="M0.8 10.8h7.8v1.7h-7.8z M3 6h2v1.4h-2z" fill="#175aa3"/><path d="M3 8.8h1.6v0.9h-1.6z M6 8.6h1.4v1h-1.4z M8.6 10.6h1.6v1.2h-1.6z" fill="#e9f1fa"/></g>
<text x="69.2" y="599.44" font-family='"Liberation Sans",sans-serif' font-size="10.75" fill="#000">lowEnergyExXRateDSSD2</text>
<path d="M44 612.15 H53" stroke="#8a8a8a" stroke-width="1" stroke-dasharray="1 2" fill="none"/>
<g transform="translate(53.2 606.95)"><rect x="0" y="0" width="12.8" height="13.3" fill="#b8b5ad"/><rect x="0.8" y="0.8" width="11.2" height="11.7" fill="#eef4fb"/><path d="M0.8 0.8h2.2v1.6h-2.2z M2 2.2h3.2v1.6h-3.2z M5.6 1.6h2.6v1.8h-2.6z M8 3h1.6v3h-1.6z M0.8 3.6h1.4v4h-1.4z M3 4.4h3.6v2.6h-3.6z M6.6 5.6h2.6v2.2h-2.6z M10 4.2h1.2v3.4h-1.2z M0.8 7.4h5v1.4h-5z M0.8 9.6h10v2.9h-10z M10.6 8.4h1.4v2.2h-1.4z" fill="#2f74bb"/><path d="M0.8 10.8h7.8v1.7h-7.8z M3 6h2v1.4h-2z" fill="#175aa3"/><path d="M3 8.8h1.6v0.9h-1.6z M6 8.6h1.4v1h-1.4z M8.6 10.6h1.6v1.2h-1.6z" fill="#e9f1fa"/></g>
<text x="69.2" y="615.55" font-family='"Liberation Sans",sans-serif' font-size="10.75" fill="#000">lowEnergyEyYRateDSSD2</text>
<path d="M44 628.26 H53" stroke="#8a8a8a" stroke-width="1" stroke-dasharray="1 2" fill="none"/>
<g transform="translate(53.2 623.06)"><rect x="0" y="0" width="12.8" height="13.3" fill="#b8b5ad"/><rect x="0.8" y="0.8" width="11.2" height="11.7" fill="#eef4fb"/><path d="M0.8 0.8h2.2v1.6h-2.2z M2 2.2h3.2v1.6h-3.2z M5.6 1.6h2.6v1.8h-2.6z M8 3h1.6v3h-1.6z M0.8 3.6h1.4v4h-1.4z M3 4.4h3.6v2.6h-3.6z M6.6 5.6h2.6v2.2h-2.6z M10 4.2h1.2v3.4h-1.2z M0.8 7.4h5v1.4h-5z M0.8 9.6h10v2.9h-10z M10.6 8.4h1.4v2.2h-1.4z" fill="#2f74bb"/><path d="M0.8 10.8h7.8v1.7h-7.8z M3 6h2v1.4h-2z" fill="#175aa3"/><path d="M3 8.8h1.6v0.9h-1.6z M6 8.6h1.4v1h-1.4z M8.6 10.6h1.6v1.2h-1.6z" fill="#e9f1fa"/></g>
<text x="69.2" y="631.66" font-family='"Liberation Sans",sans-serif' font-size="10.75" fill="#000">lowEnergyExXRate1sDSSD2</text>
<path d="M44 644.37 H53" stroke="#8a8a8a" stroke-width="1" stroke-dasharray="1 2" fill="none"/>
<g transform="translate(53.2 639.17)"><rect x="0" y="0" width="12.8" height="13.3" fill="#b8b5ad"/><rect x="0.8" y="0.8" width="11.2" height="11.7" fill="#eef4fb"/><path d="M0.8 0.8h2.2v1.6h-2.2z M2 2.2h3.2v1.6h-3.2z M5.6 1.6h2.6v1.8h-2.6z M8 3h1.6v3h-1.6z M0.8 3.6h1.4v4h-1.4z M3 4.4h3.6v2.6h-3.6z M6.6 5.6h2.6v2.2h-2.6z M10 4.2h1.2v3.4h-1.2z M0.8 7.4h5v1.4h-5z M0.8 9.6h10v2.9h-10z M10.6 8.4h1.4v2.2h-1.4z" fill="#2f74bb"/><path d="M0.8 10.8h7.8v1.7h-7.8z M3 6h2v1.4h-2z" fill="#175aa3"/><path d="M3 8.8h1.6v0.9h-1.6z M6 8.6h1.4v1h-1.4z M8.6 10.6h1.6v1.2h-1.6z" fill="#e9f1fa"/></g>
<text x="69.2" y="647.77" font-family='"Liberation Sans",sans-serif' font-size="10.75" fill="#000">lowEnergyEyYRate1sDSSD2</text>
<path d="M44 660.48 H53" stroke="#8a8a8a" stroke-width="1" stroke-dasharray="1 2" fill="none"/>
<g transform="translate(53.2 655.28)"><rect x="0" y="0" width="12.8" height="13.3" fill="#b8b5ad"/><rect x="0.8" y="0.8" width="11.2" height="11.7" fill="#eef4fb"/><path d="M0.8 0.8h2.2v1.6h-2.2z M2 2.2h3.2v1.6h-3.2z M5.6 1.6h2.6v1.8h-2.6z M8 3h1.6v3h-1.6z M0.8 3.6h1.4v4h-1.4z M3 4.4h3.6v2.6h-3.6z M6.6 5.6h2.6v2.2h-2.6z M10 4.2h1.2v3.4h-1.2z M0.8 7.4h5v1.4h-5z M0.8 9.6h10v2.9h-10z M10.6 8.4h1.4v2.2h-1.4z" fill="#2f74bb"/><path d="M0.8 10.8h7.8v1.7h-7.8z M3 6h2v1.4h-2z" fill="#175aa3"/><path d="M3 8.8h1.6v0.9h-1.6z M6 8.6h1.4v1h-1.4z M8.6 10.6h1.6v1.2h-1.6z" fill="#e9f1fa"/></g>
<text x="69.2" y="663.88" font-family='"Liberation Sans",sans-serif' font-size="10.75" fill="#000">lowEnergyExXTotalDSSD2</text>
<path d="M44 676.59 H53" stroke="#8a8a8a" stroke-width="1" stroke-dasharray="1 2" fill="none"/>
<g transform="translate(53.2 671.39)"><rect x="0" y="0" width="12.8" height="13.3" fill="#b8b5ad"/><rect x="0.8" y="0.8" width="11.2" height="11.7" fill="#eef4fb"/><path d="M0.8 0.8h2.2v1.6h-2.2z M2 2.2h3.2v1.6h-3.2z M5.6 1.6h2.6v1.8h-2.6z M8 3h1.6v3h-1.6z M0.8 3.6h1.4v4h-1.4z M3 4.4h3.6v2.6h-3.6z M6.6 5.6h2.6v2.2h-2.6z M10 4.2h1.2v3.4h-1.2z M0.8 7.4h5v1.4h-5z M0.8 9.6h10v2.9h-10z M10.6 8.4h1.4v2.2h-1.4z" fill="#2f74bb"/><path d="M0.8 10.8h7.8v1.7h-7.8z M3 6h2v1.4h-2z" fill="#175aa3"/><path d="M3 8.8h1.6v0.9h-1.6z M6 8.6h1.4v1h-1.4z M8.6 10.6h1.6v1.2h-1.6z" fill="#e9f1fa"/></g>
<text x="69.2" y="679.99" font-family='"Liberation Sans",sans-serif' font-size="10.75" fill="#000">lowEnergyEyYTotalDSSD2</text>
<path d="M44 692.7 H53" stroke="#8a8a8a" stroke-width="1" stroke-dasharray="1 2" fill="none"/>
<g transform="translate(53.2 687.5)"><rect x="0" y="0" width="12.8" height="13.3" fill="#a9a9a6"/><rect x="0.8" y="0.8" width="11.2" height="11.7" fill="#fbfbfb"/><path d="M0.8 12.5V6.6L2 7.4L3.2 4.4L4.6 7.8L5.8 5.6L7 8.4L8.2 8L9.4 6.8L10.6 9.6L12 10.8V12.5Z" fill="#9c9ea2"/><path d="M1.2 7L2.4 8.6L3.4 5L4.6 9.2L5.8 6.4L7 9.6L8.4 9.2L9.6 7.6L10.8 10.4" stroke="#5a5a5a" stroke-width="1.1" fill="none"/></g>
<text x="69.2" y="696.1" font-family='"Liberation Sans",sans-serif' font-size="10.75" fill="#000">lowEnergyEyTotalDSSD2</text>
<path d="M44 708.81 H53" stroke="#8a8a8a" stroke-width="1" stroke-dasharray="1 2" fill="none"/>
<g transform="translate(53.2 703.61)"><rect x="0" y="0" width="12.8" height="13.3" fill="#a9a9a6"/><rect x="0.8" y="0.8" width="11.2" height="11.7" fill="#fbfbfb"/><path d="M0.8 12.5V6.6L2 7.4L3.2 4.4L4.6 7.8L5.8 5.6L7 8.4L8.2 8L9.4 6.8L10.6 9.6L12 10.8V12.5Z" fill="#9c9ea2"/><path d="M1.2 7L2.4 8.6L3.4 5L4.6 9.2L5.8 6.4L7 9.6L8.4 9.2L9.6 7.6L10.8 10.4" stroke="#5a5a5a" stroke-width="1.1" fill="none"/></g>
<text x="69.2" y="712.21" font-family='"Liberation Sans",sans-serif' font-size="10.75" fill="#000">lowEnergyExTotalDSSD2</text>
<path d="M44 724.92 H53" stroke="#8a8a8a" stroke-width="1" stroke-dasharray="1 2" fill="none"/>
<g transform="translate(53.2 719.72)"><rect x="0" y="0" width="12.8" height="13.3" fill="#a9a9a6"/><rect x="0.8" y="0.8" width="11.2" height="11.7" fill="#fbfbfb"/><path d="M0.8 12.5V6.6L2 7.4L3.2 4.4L4.6 7.8L5.8 5.6L7 8.4L8.2 8L9.4 6.8L10.6 9.6L12 10.8V12.5Z" fill="#9c9ea2"/><path d="M1.2 7L2.4 8.6L3.4 5L4.6 9.2L5.8 6.4L7 9.6L8.4 9.2L9.6 7.6L10.8 10.4" stroke="#5a5a5a" stroke-width="1.1" fill="none"/></g>
<text x="69.2" y="728.32" font-family='"Liberation Sans",sans-serif' font-size="10.75" fill="#000">lowEnergyEyRateDSSD2</text>
<path d="M44 741.03 H53" stroke="#8a8a8a" stroke-width="1" stroke-dasharray="1 2" fill="none"/>
<g transform="translate(53.2 735.83)"><rect x="0" y="0" width="12.8" height="13.3" fill="#a9a9a6"/><rect x="0.8" y="0.8" width="11.2" height="11.7" fill="#fbfbfb"/><path d="M0.8 12.5V6.6L2 7.4L3.2 4.4L4.6 7.8L5.8 5.6L7 8.4L8.2 8L9.4 6.8L10.6 9.6L12 10.8V12.5Z" fill="#9c9ea2"/><path d="M1.2 7L2.4 8.6L3.4 5L4.6 9.2L5.8 6.4L7 9.6L8.4 9.2L9.6 7.6L10.8 10.4" stroke="#5a5a5a" stroke-width="1.1" fill="none"/></g>
<text x="69.2" y="744.43" font-family='"Liberation Sans",sans-serif' font-size="10.75" fill="#000">lowEnergyExRateDSSD2</text>
<path d="M44 757.14 H53" stroke="#8a8a8a" stroke-width="1" stroke-dasharray="1 2" fill="none"/>
<g transform="translate(53.2 751.94)"><rect x="0" y="0" width="12.8" height="13.3" fill="#a9a9a6"/><rect x="0.8" y="0.8" width="11.2" height="11.7" fill="#fbfbfb"/><path d="M0.8 12.5V6.6L2 7.4L3.2 4.4L4.6 7.8L5.8 5.6L7 8.4L8.2 8L9.4 6.8L10.6 9.6L12 10.8V12.5Z" fill="#9c9ea2"/><path d="M1.2 7L2.4 8.6L3.4 5L4.6 9.2L5.8 6.4L7 9.6L8.4 9.2L9.6 7.6L10.8 10.4" stroke="#5a5a5a" stroke-width="1.1" fill="none"/></g>
<text x="69.2" y="760.54" font-family='"Liberation Sans",sans-serif' font-size="10.75" fill="#000">lowEnergyEyRate1sDSSD2</text>
<path d="M44 773.25 H53" stroke="#8a8a8a" stroke-width="1" stroke-dasharray="1 2" fill="none"/>
<g transform="translate(53.2 768.05)"><rect x="0" y="0" width="12.8" height="13.3" fill="#a9a9a6"/><rect x="0.8" y="0.8" width="11.2" height="11.7" fill="#fbfbfb"/><path d="M0.8 12.5V6.6L2 7.4L3.2 4.4L4.6 7.8L5.8 5.6L7 8.4L8.2 8L9.4 6.8L10.6 9.6L12 10.8V12.5Z" fill="#9c9ea2"/><path d="M1.2 7L2.4 8.6L3.4 5L4.6 9.2L5.8 6.4L7 9.6L8.4 9.2L9.6 7.6L10.8 10.4" stroke="#5a5a5a" stroke-width="1.1" fill="none"/></g>
<text x="69.2" y="776.65" font-family='"Liberation Sans",sans-serif' font-size="10.75" fill="#000">lowEnergyExRate1sDSSD2</text>
<path d="M44 789.36 H53" stroke="#8a8a8a" stroke-width="1" stroke-dasharray="1 2" fill="none"/>
<g transform="translate(53.2 784.16)"><rect x="0" y="0" width="12.8" height="13.3" fill="#b8b5ad"/><rect x="0.8" y="0.8" width="11.2" height="11.7" fill="#eef4fb"/><path d="M0.8 0.8h2.2v1.6h-2.2z M2 2.2h3.2v1.6h-3.2z M5.6 1.6h2.6v1.8h-2.6z M8 3h1.6v3h-1.6z M0.8 3.6h1.4v4h-1.4z M3 4.4h3.6v2.6h-3.6z M6.6 5.6h2.6v2.2h-2.6z M10 4.2h1.2v3.4h-1.2z M0.8 7.4h5v1.4h-5z M0.8 9.6h10v2.9h-10z M10.6 8.4h1.4v2.2h-1.4z" fill="#2f74bb"/><path d="M0.8 10.8h7.8v1.7h-7.8z M3 6h2v1.4h-2z" fill="#175aa3"/><path d="M3 8.8h1.6v0.9h-1.6z M6 8.6h1.4v1h-1.4z M8.6 10.6h1.6v1.2h-1.6z" fill="#e9f1fa"/></g>
<text x="69.2" y="792.76" font-family='"Liberation Sans",sans-serif' font-size="10.75" fill="#000">lowEnergyExEyDSSD3</text>
<path d="M44 805.47 H53" stroke="#8a8a8a" stroke-width="1" stroke-dasharray="1 2" fill="none"/>
<g transform="translate(53.2 800.27)"><rect x="0" y="0" width="12.8" height="13.3" fill="#b8b5ad"/><rect x="0.8" y="0.8" width="11.2" height="11.7" fill="#eef4fb"/><path d="M0.8 0.8h2.2v1.6h-2.2z M2 2.2h3.2v1.6h-3.2z M5.6 1.6h2.6v1.8h-2.6z M8 3h1.6v3h-1.6z M0.8 3.6h1.4v4h-1.4z M3 4.4h3.6v2.6h-3.6z M6.6 5.6h2.6v2.2h-2.6z M10 4.2h1.2v3.4h-1.2z M0.8 7.4h5v1.4h-5z M0.8 9.6h10v2.9h-10z M10.6 8.4h1.4v2.2h-1.4z" fill="#2f74bb"/><path d="M0.8 10.8h7.8v1.7h-7.8z M3 6h2v1.4h-2z" fill="#175aa3"/><path d="M3 8.8h1.6v0.9h-1.6z M6 8.6h1.4v1h-1.4z M8.6 10.6h1.6v1.2h-1.6z" fill="#e9f1fa"/></g>
<text x="69.2" y="808.87" font-family='"Liberation Sans",sans-serif' font-size="10.75" fill="#000">highEnergyExEyDSSD3</text>
<path d="M44 821.58 H53" stroke="#8a8a8a" stroke-width="1" stroke-dasharray="1 2" fill="none"/>
<g transform="translate(53.2 816.38)"><rect x="0" y="0" width="12.8" height="13.3" fill="#b8b5ad"/><rect x="0.8" y="0.8" width="11.2" height="11.7" fill="#eef4fb"/><path d="M0.8 0.8h2.2v1.6h-2.2z M2 2.2h3.2v1.6h-3.2z M5.6 1.6h2.6v1.8h-2.6z M8 3h1.6v3h-1.6z M0.8 3.6h1.4v4h-1.4z M3 4.4h3.6v2.6h-3.6z M6.6 5.6h2.6v2.2h-2.6z M10 4.2h1.2v3.4h-1.2z M0.8 7.4h5v1.4h-5z M0.8 9.6h10v2.9h-10z M10.6 8.4h1.4v2.2h-1.4z" fill="#2f74bb"/><path d="M0.8 10.8h7.8v1.7h-7.8z M3 6h2v1.4h-2z" fill="#175aa3"/><path d="M3 8.8h1.6v0.9h-1.6z M6 8.6h1.4v1h-1.4z M8.6 10.6h1.6v1.2h-1.6z" fill="#e9f1fa"/></g>
<text x="69.2" y="824.98" font-family='"Liberation Sans",sans-serif' font-size="10.75" fill="#000">lowEnergyExEyPairDSSD3</text>
<path d="M44 837.69 H53" stroke="#8a8a8a" stroke-width="1" stroke-dasharray="1 2" fill="none"/>
<g transform="translate(53.2 832.49)"><rect x="0" y="0" width="12.8" height="13.3" fill="#b8b5ad"/><rect x="0.8" y="0.8" width="11.2" height="11.7" fill="#eef4fb"/><path d="M0.8 0.8h2.2v1.6h-2.2z M2 2.2h3.2v1.6h-3.2z M5.6 1.6h2.6v1.8h-2.6z M8 3h1.6v3h-1.6z M0.8 3.6h1.4v4h-1.4z M3 4.4h3.6v2.6h-3.6z M6.6 5.6h2.6v2.2h-2.6z M10 4.2h1.2v3.4h-1.2z M0.8 7.4h5v1.4h-5z M0.8 9.6h10v2.9h-10z M10.6 8.4h1.4v2.2h-1.4z" fill="#2f74bb"/><path d="M0.8 10.8h7.8v1.7h-7.8z M3 6h2v1.4h-2z" fill="#175aa3"/><path d="M3 8.8h1.6v0.9h-1.6z M6 8.6h1.4v1h-1.4z M8.6 10.6h1.6v1.2h-1.6z" fill="#e9f1fa"/></g>
<text x="69.2" y="841.09" font-family='"Liberation Sans",sans-serif' font-size="10.75" fill="#000">highEnergyExEyDSSDPair3</text>
<path d="M44 853.8 H53" stroke="#8a8a8a" stroke-width="1" stroke-dasharray="1 2" fill="none"/>
<g transform="translate(53.2 848.6)"><rect x="0" y="0" width="12.8" height="13.3" fill="#b8b5ad"/><rect x="0.8" y="0.8" width="11.2" height="11.7" fill="#eef4fb"/><path d="M0.8 0.8h2.2v1.6h-2.2z M2 2.2h3.2v1.6h-3.2z M5.6 1.6h2.6v1.8h-2.6z M8 3h1.6v3h-1.6z M0.8 3.6h1.4v4h-1.4z M3 4.4h3.6v2.6h-3.6z M6.6 5.6h2.6v2.2h-2.6z M10 4.2h1.2v3.4h-1.2z M0.8 7.4h5v1.4h-5z M0.8 9.6h10v2.9h-10z M10.6 8.4h1.4v2.2h-1.4z" fill="#2f74bb"/><path d="M0.8 10.8h7.8v1.7h-7.8z M3 6h2v1.4h-2z" fill="#175aa3"/><path d="M3 8.8h1.6v0.9h-1.6z M6 8.6h1.4v1h-1.4z M8.6 10.6h1.6v1.2h-1.6z" fill="#e9f1fa"/></g>
<text x="69.2" y="857.2" font-family='"Liberation Sans",sans-serif' font-size="10.75" fill="#000">xyMultiplicityDSSD3</text>
<path d="M44 869.91 H53" stroke="#8a8a8a" stroke-width="1" stroke-dasharray="1 2" fill="none"/>
<g transform="translate(53.2 864.71)"><rect x="0" y="0" width="12.8" height="13.3" fill="#b8b5ad"/><rect x="0.8" y="0.8" width="11.2" height="11.7" fill="#eef4fb"/><path d="M0.8 0.8h2.2v1.6h-2.2z M2 2.2h3.2v1.6h-3.2z M5.6 1.6h2.6v1.8h-2.6z M8 3h1.6v3h-1.6z M0.8 3.6h1.4v4h-1.4z M3 4.4h3.6v2.6h-3.6z M6.6 5.6h2.6v2.2h-2.6z M10 4.2h1.2v3.4h-1.2z M0.8 7.4h5v1.4h-5z M0.8 9.6h10v2.9h-10z M10.6 8.4h1.4v2.2h-1.4z" fill="#2f74bb"/><path d="M0.8 10.8h7.8v1.7h-7.8z M3 6h2v1.4h-2z" fill="#175aa3"/><path d="M3 8.8h1.6v0.9h-1.6z M6 8.6h1.4v1h-1.4z M8.6 10.6h1.6v1.2h-1.6z" fill="#e9f1fa"/></g>
<text x="69.2" y="873.31" font-family='"Liberation Sans",sans-serif' font-size="10.75" fill="#000">lowEnergyXYDSSD3</text>
<path d="M44 886.02 H53" stroke="#8a8a8a" stroke-width="1" stroke-dasharray="1 2" fill="none"/>
<g transform="translate(53.2 880.82)"><rect x="0" y="0" width="12.8" height="13.3" fill="#b8b5ad"/><rect x="0.8" y="0.8" width="11.2" height="11.7" fill="#eef4fb"/><path d="M0.8 0.8h2.2v1.6h-2.2z M2 2.2h3.2v1.6h-3.2z M5.6 1.6h2.6v1.8h-2.6z M8 3h1.6v3h-1.6z M0.8 3.6h1.4v4h-1.4z M3 4.4h3.6v2.6h-3.6z M6.6 5.6h2.6v2.2h-2.6z M10 4.2h1.2v3.4h-1.2z M0.8 7.4h5v1.4h-5z M0.8 9.6h10v2.9h-10z M10.6 8.4h1.4v2.2h-1.4z" fill="#2f74bb"/><path d="M0.8 10.8h7.8v1.7h-7.8z M3 6h2v1.4h-2z" fill="#175aa3"/><path d="M3 8.8h1.6v0.9h-1.6z M6 8.6h1.4v1h-1.4z M8.6 10.6h1.6v1.2h-1.6z" fill="#e9f1fa"/></g>
<text x="69.2" y="889.42" font-family='"Liberation Sans",sans-serif' font-size="10.75" fill="#000">highEnergyXYDSSD3</text>
<path d="M44 902.13 H53" stroke="#8a8a8a" stroke-width="1" stroke-dasharray="1 2" fill="none"/>
<g transform="translate(53.2 896.93)"><rect x="0" y="0" width="12.8" height="13.3" fill="#b8b5ad"/><rect x="0.8" y="0.8" width="11.2" height="11.7" fill="#eef4fb"/><path d="M0.8 0.8h2.2v1.6h-2.2z M2 2.2h3.2v1.6h-3.2z M5.6 1.6h2.6v1.8h-2.6z M8 3h1.6v3h-1.6z M0.8 3.6h1.4v4h-1.4z M3 4.4h3.6v2.6h-3.6z M6.6 5.6h2.6v2.2h-2.6z M10 4.2h1.2v3.4h-1.2z M0.8 7.4h5v1.4h-5z M0.8 9.6h10v2.9h-10z M10.6 8.4h1.4v2.2h-1.4z" fill="#2f74bb"/><path d="M0.8 10.8h7.8v1.7h-7.8z M3 6h2v1.4h-2z" fill="#175aa3"/><path d="M3 8.8h1.6v0.9h-1.6z M6 8.6h1.4v1h-1.4z M8.6 10.6h1.6v1.2h-1.6z" fill="#e9f1fa"/></g>
<text x="69.2" y="905.53" font-family='"Liberation Sans",sans-serif' font-size="10.75" fill="#000">lowEnergyXYRateDSSD3</text>
<path d="M44 918.24 H53" stroke="#8a8a8a" stroke-width="1" stroke-dasharray="1 2" fill="none"/>
<g transform="translate(53.2 913.04)"><rect x="0" y="0" width="12.8" height="13.3" fill="#b8b5ad"/><rect x="0.8" y="0.8" width="11.2" height="11.7" fill="#eef4fb"/><path d="M0.8 0.8h2.2v1.6h-2.2z M2 2.2h3.2v1.6h-3.2z M5.6 1.6h2.6v1.8h-2.6z M8 3h1.6v3h-1.6z M0.8 3.6h1.4v4h-1.4z M3 4.4h3.6v2.6h-3.6z M6.6 5.6h2.6v2.2h-2.6z M10 4.2h1.2v3.4h-1.2z M0.8 7.4h5v1.4h-5z M0.8 9.6h10v2.9h-10z M10.6 8.4h1.4v2.2h-1.4z" fill="#2f74bb"/><path d="M0.8 10.8h7.8v1.7h-7.8z M3 6h2v1.4h-2z" fill="#175aa3"/><path d="M3 8.8h1.6v0.9h-1.6z M6 8.6h1.4v1h-1.4z M8.6 10.6h1.6v1.2h-1.6z" fill="#e9f1fa"/></g>
<text x="69.2" y="921.64" font-family='"Liberation Sans",sans-serif' font-size="10.75" fill="#000">lowEnergyXYTotalDSSD3</text>
<path d="M44 934.35 H53" stroke="#8a8a8a" stroke-width="1" stroke-dasharray="1 2" fill="none"/>
<g transform="translate(53.2 929.15)"><rect x="0" y="0" width="12.8" height="13.3" fill="#b8b5ad"/><rect x="0.8" y="0.8" width="11.2" height="11.7" fill="#eef4fb"/><path d="M0.8 0.8h2.2v1.6h-2.2z M2 2.2h3.2v1.6h-3.2z M5.6 1.6h2.6v1.8h-2.6z M8 3h1.6v3h-1.6z M0.8 3.6h1.4v4h-1.4z M3 4.4h3.6v2.6h-3.6z M6.6 5.6h2.6v2.2h-2.6z M10 4.2h1.2v3.4h-1.2z M0.8 7.4h5v1.4h-5z M0.8 9.6h10v2.9h-10z M10.6 8.4h1.4v2.2h-1.4z" fill="#2f74bb"/><path d="M0.8 10.8h7.8v1.7h-7.8z M3 6h2v1.4h-2z" fill="#175aa3"/><path d="M3 8.8h1.6v0.9h-1.6z M6 8.6h1.4v1h-1.4z M8.6 10.6h1.6v1.2h-1.6z" fill="#e9f1fa"/></g>
<text x="69.2" y="937.75" font-family='"Liberation Sans",sans-serif' font-size="10.75" fill="#000">lowEnergyExXRateDSSD3</text>
<path d="M44 950.46 H53" stroke="#8a8a8a" stroke-width="1" stroke-dasharray="1 2" fill="none"/>
<g transform="translate(53.2 945.26)"><rect x="0" y="0" width="12.8" height="13.3" fill="#b8b5ad"/><rect x="0.8" y="0.8" width="11.2" height="11.7" fill="#eef4fb"/><path d="M0.8 0.8h2.2v1.6h-2.2z M2 2.2h3.2v1.6h-3.2z M5.6 1.6h2.6v1.8h-2.6z M8 3h1.6v3h-1.6z M0.8 3.6h1.4v4h-1.4z M3 4.4h3.6v2.6h-3.6z M6.6 5.6h2.6v2.2h-2.6z M10 4.2h1.2v3.4h-1.2z M0.8 7.4h5v1.4h-5z M0.8 9.6h10v2.9h-10z M10.6 8.4h1.4v2.2h-1.4z" fill="#2f74bb"/><path d="M0.8 10.8h7.8v1.7h-7.8z M3 6h2v1.4h-2z" fill="#175aa3"/><path d="M3 8.8h1.6v0.9h-1.6z M6 8.6h1.4v1h-1.4z M8.6 10.6h1.6v1.2h-1.6z" fill="#e9f1fa"/></g>
<text x="69.2" y="953.86" font-family='"Liberation Sans",sans-serif' font-size="10.75" fill="#000">lowEnergyEyYRateDSSD3</text>
<path d="M44 966.57 H53" stroke="#8a8a8a" stroke-width="1" stroke-dasharray="1 2" fill="none"/>
<g transform="translate(53.2 961.37)"><rect x="0" y="0" width="12.8" height="13.3" fill="#b8b5ad"/><rect x="0.8" y="0.8" width="11.2" height="11.7" fill="#eef4fb"/><path d="M0.8 0.8h2.2v1.6h-2.2z M2 2.2h3.2v1.6h-3.2z M5.6 1.6h2.6v1.8h-2.6z M8 3h1.6v3h-1.6z M0.8 3.6h1.4v4h-1.4z M3 4.4h3.6v2.6h-3.6z M6.6 5.6h2.6v2.2h-2.6z M10 4.2h1.2v3.4h-1.2z M0.8 7.4h5v1.4h-5z M0.8 9.6h10v2.9h-10z M10.6 8.4h1.4v2.2h-1.4z" fill="#2f74bb"/><path d="M0.8 10.8h7.8v1.7h-7.8z M3 6h2v1.4h-2z" fill="#175aa3"/><path d="M3 8.8h1.6v0.9h-1.6z M6 8.6h1.4v1h-1.4z M8.6 10.6h1.6v1.2h-1.6z" fill="#e9f1fa"/></g>
<text x="69.2" y="969.97" font-family='"Liberation Sans",sans-serif' font-size="10.75" fill="#000">lowEnergyExXRate1sDSSD3</text>
<path d="M44 982.68 H53" stroke="#8a8a8a" stroke-width="1" stroke-dasharray="1 2" fill="none"/>
<g transform="translate(53.2 977.48)"><rect x="0" y="0" width="12.8" height="13.3" fill="#b8b5ad"/><rect x="0.8" y="0.8" width="11.2" height="11.7" fill="#eef4fb"/><path d="M0.8 0.8h2.2v1.6h-2.2z M2 2.2h3.2v1.6h-3.2z M5.6 1.6h2.6v1.8h-2.6z M8 3h1.6v3h-1.6z M0.8 3.6h1.4v4h-1.4z M3 4.4h3.6v2.6h-3.6z M6.6 5.6h2.6v2.2h-2.6z M10 4.2h1.2v3.4h-1.2z M0.8 7.4h5v1.4h-5z M0.8 9.6h10v2.9h-10z M10.6 8.4h1.4v2.2h-1.4z" fill="#2f74bb"/><path d="M0.8 10.8h7.8v1.7h-7.8z M3 6h2v1.4h-2z" fill="#175aa3"/><path d="M3 8.8h1.6v0.9h-1.6z M6 8.6h1.4v1h-1.4z M8.6 10.6h1.6v1.2h-1.6z" fill="#e9f1fa"/></g>
<text x="69.2" y="986.08" font-family='"Liberation Sans",sans-serif' font-size="10.75" fill="#000">lowEnergyEyYRate1sDSSD3</text>
<path d="M44 998.79 H53" stroke="#8a8a8a" stroke-width="1" stroke-dasharray="1 2" fill="none"/>
<g transform="translate(53.2 993.59)"><rect x="0" y="0" width="12.8" height="13.3" fill="#b8b5ad"/><rect x="0.8" y="0.8" width="11.2" height="11.7" fill="#eef4fb"/><path d="M0.8 0.8h2.2v1.6h-2.2z M2 2.2h3.2v1.6h-3.2z M5.6 1.6h2.6v1.8h-2.6z M8 3h1.6v3h-1.6z M0.8 3.6h1.4v4h-1.4z M3 4.4h3.6v2.6h-3.6z M6.6 5.6h2.6v2.2h-2.6z M10 4.2h1.2v3.4h-1.2z M0.8 7.4h5v1.4h-5z M0.8 9.6h10v2.9h-10z M10.6 8.4h1.4v2.2h-1.4z" fill="#2f74bb"/><path d="M0.8 10.8h7.8v1.7h-7.8z M3 6h2v1.4h-2z" fill="#175aa3"/><path d="M3 8.8h1.6v0.9h-1.6z M6 8.6h1.4v1h-1.4z M8.6 10.6h1.6v1.2h-1.6z" fill="#e9f1fa"/></g>
<text x="69.2" y="1002.19" font-family='"Liberation Sans",sans-serif' font-size="10.75" fill="#000">lowEnergyExXTotalDSSD3</text>
<path d="M44 1014.9 H53" stroke="#8a8a8a" stroke-width="1" stroke-dasharray="1 2" fill="none"/>
<g transform="translate(53.2 1009.7)"><rect x="0" y="0" width="12.8" height="13.3" fill="#b8b5ad"/><rect x="0.8" y="0.8" width="11.2" height="11.7" fill="#eef4fb"/><path d="M0.8 0.8h2.2v1.6h-2.2z M2 2.2h3.2v1.6h-3.2z M5.6 1.6h2.6v1.8h-2.6z M8 3h1.6v3h-1.6z M0.8 3.6h1.4v4h-1.4z M3 4.4h3.6v2.6h-3.6z M6.6 5.6h2.6v2.2h-2.6z M10 4.2h1.2v3.4h-1.2z M0.8 7.4h5v1.4h-5z M0.8 9.6h10v2.9h-10z M10.6 8.4h1.4v2.2h-1.4z" fill="#2f74bb"/><path d="M0.8 10.8h7.8v1.7h-7.8z M3 6h2v1.4h-2z" fill="#175aa3"/><path d="M3 8.8h1.6v0.9h-1.6z M6 8.6h1.4v1h-1.4z M8.6 10.6h1.6v1.2h-1.6z" fill="#e9f1fa"/></g>
<text x="69.2" y="1018.3" font-family='"Liberation Sans",sans-serif' font-size="10.75" fill="#000">lowEnergyEyYTotalDSSD3</text>
<path d="M44 1031.01 H53" stroke="#8a8a8a" stroke-width="1" stroke-dasharray="1 2" fill="none"/>
<g transform="translate(53.2 1025.81)"><rect x="0" y="0" width="12.8" height="13.3" fill="#a9a9a6"/><rect x="0.8" y="0.8" width="11.2" height="11.7" fill="#fbfbfb"/><path d="M0.8 12.5V6.6L2 7.4L3.2 4.4L4.6 7.8L5.8 5.6L7 8.4L8.2 8L9.4 6.8L10.6 9.6L12 10.8V12.5Z" fill="#9c9ea2"/><path d="M1.2 7L2.4 8.6L3.4 5L4.6 9.2L5.8 6.4L7 9.6L8.4 9.2L9.6 7.6L10.8 10.4" stroke="#5a5a5a" stroke-width="1.1" fill="none"/></g>
<text x="69.2" y="1034.41" font-family='"Liberation Sans",sans-serif' font-size="10.75" fill="#000">lowEnergyEyTotalDSSD3</text>
<path d="M44 1047.12 H53" stroke="#8a8a8a" stroke-width="1" stroke-dasharray="1 2" fill="none"/>
<g transform="translate(53.2 1041.92)"><rect x="0" y="0" width="12.8" height="13.3" fill="#a9a9a6"/><rect x="0.8" y="0.8" width="11.2" height="11.7" fill="#fbfbfb"/><path d="M0.8 12.5V6.6L2 7.4L3.2 4.4L4.6 7.8L5.8 5.6L7 8.4L8.2 8L9.4 6.8L10.6 9.6L12 10.8V12.5Z" fill="#9c9ea2"/><path d="M1.2 7L2.4 8.6L3.4 5L4.6 9.2L5.8 6.4L7 9.6L8.4 9.2L9.6 7.6L10.8 10.4" stroke="#5a5a5a" stroke-width="1.1" fill="none"/></g>
<text x="69.2" y="1050.52" font-family='"Liberation Sans",sans-serif' font-size="10.75" fill="#000">lowEnergyExTotalDSSD3</text>
<path d="M44 1063.23 H53" stroke="#8a8a8a" stroke-width="1" stroke-dasharray="1 2" fill="none"/>
<g transform="translate(53.2 1058.03)"><rect x="0" y="0" width="12.8" height="13.3" fill="#a9a9a6"/><rect x="0.8" y="0.8" width="11.2" height="11.7" fill="#fbfbfb"/><path d="M0.8 12.5V6.6L2 7.4L3.2 4.4L4.6 7.8L5.8 5.6L7 8.4L8.2 8L9.4 6.8L10.6 9.6L12 10.8V12.5Z" fill="#9c9ea2"/><path d="M1.2 7L2.4 8.6L3.4 5L4.6 9.2L5.8 6.4L7 9.6L8.4 9.2L9.6 7.6L10.8 10.4" stroke="#5a5a5a" stroke-width="1.1" fill="none"/></g>
<text x="69.2" y="1066.63" font-family='"Liberation Sans",sans-serif' font-size="10.75" fill="#000">lowEnergyEyRateDSSD3</text>
<path d="M44 1079.34 H53" stroke="#8a8a8a" stroke-width="1" stroke-dasharray="1 2" fill="none"/>
<g transform="translate(53.2 1074.14)"><rect x="0" y="0" width="12.8" height="13.3" fill="#a9a9a6"/><rect x="0.8" y="0.8" width="11.2" height="11.7" fill="#fbfbfb"/><path d="M0.8 12.5V6.6L2 7.4L3.2 4.4L4.6 7.8L5.8 5.6L7 8.4L8.2 8L9.4 6.8L10.6 9.6L12 10.8V12.5Z" fill="#9c9ea2"/><path d="M1.2 7L2.4 8.6L3.4 5L4.6 9.2L5.8 6.4L7 9.6L8.4 9.2L9.6 7.6L10.8 10.4" stroke="#5a5a5a" stroke-width="1.1" fill="none"/></g>
<text x="69.2" y="1082.74" font-family='"Liberation Sans",sans-serif' font-size="10.75" fill="#000">lowEnergyExRateDSSD3</text>
<path d="M44 1095.45 H53" stroke="#8a8a8a" stroke-width="1" stroke-dasharray="1 2" fill="none"/>
<g transform="translate(53.2 1090.25)"><rect x="0" y="0" width="12.8" height="13.3" fill="#a9a9a6"/><rect x="0.8" y="0.8" width="11.2" height="11.7" fill="#fbfbfb"/><path d="M0.8 12.5V6.6L2 7.4L3.2 4.4L4.6 7.8L5.8 5.6L7 8.4L8.2 8L9.4 6.8L10.6 9.6L12 10.8V12.5Z" fill="#9c9ea2"/><path d="M1.2 7L2.4 8.6L3.4 5L4.6 9.2L5.8 6.4L7 9.6L8.4 9.2L9.6 7.6L10.8 10.4" stroke="#5a5a5a" stroke-width="1.1" fill="none"/></g>
<text x="69.2" y="1098.85" font-family='"Liberation Sans",sans-serif' font-size="10.75" fill="#000">lowEnergyEyRate1sDSSD3</text>
</g>
<rect x="212" y="200" width="12" height="880" fill="#c4c5c4"/>
<rect x="215" y="525" width="6" height="490" rx="3" fill="#787c7c"/>
<rect x="312.4" y="134.4" width="676.1" height="397.8" fill="#fff"/>
<clipPath id="hc1"><rect x="312.4" y="134.4" width="676.1" height="397.8"/></clipPath><g clip-path="url(#hc1)"><path fill="#1652cd" d="M655.73 529.09H676.86V532.2H655.73ZM734.96 529.09H740.24V532.2H734.96ZM550.09 525.98H555.37V529.09H550.09ZM560.66 525.98H565.94V529.09H560.66ZM571.22 525.98H576.5V529.09H571.22ZM581.78 525.98H587.07V529.09H581.78ZM613.48 525.98H618.76V529.09H613.48ZM671.58 525.98H676.86V529.09H671.58ZM534.25 522.88H544.81V525.98H534.25ZM555.37 522.88H571.22V525.98H555.37ZM576.5 522.88H581.78V525.98H576.5ZM592.35 522.88H597.63V525.98H592.35ZM602.91 522.88H613.48V525.98H602.91ZM618.76 522.88H624.04V525.98H618.76ZM650.45 522.88H655.73V525.98H650.45ZM676.86 522.88H682.14V525.98H676.86ZM534.25 519.77H544.81V522.88H534.25ZM576.5 519.77H587.07V522.88H576.5ZM661.01 519.77H666.3V522.88H661.01ZM528.96 516.66H544.81V519.77H528.96ZM550.09 516.66H555.37V519.77H550.09ZM560.66 516.66H565.94V519.77H560.66ZM629.32 516.66H634.6V519.77H629.32ZM528.96 513.55H550.09V516.66H528.96ZM555.37 513.55H560.66V516.66H555.37ZM608.19 513.55H613.48V516.66H608.19ZM502.55 510.45H513.12V513.55H502.55ZM518.4 510.45H539.53V513.55H518.4ZM571.22 510.45H576.5V513.55H571.22ZM592.35 510.45H597.63V513.55H592.35ZM624.04 510.45H629.32V513.55H624.04ZM507.84 507.34H513.12V510.45H507.84ZM518.4 507.34H528.96V510.45H518.4ZM544.81 507.34H550.09V510.45H544.81ZM581.78 507.34H587.07V510.45H581.78ZM592.35 507.34H597.63V510.45H592.35ZM491.99 504.23H518.4V507.34H491.99ZM523.68 504.23H528.96V507.34H523.68ZM534.25 504.23H539.53V507.34H534.25ZM544.81 504.23H555.37V507.34H544.81ZM576.5 504.23H581.78V507.34H576.5ZM602.91 504.23H608.19V507.34H602.91ZM486.71 501.12H497.27V504.23H486.71ZM507.84 501.12H528.96V504.23H507.84ZM560.66 501.12H565.94V504.23H560.66ZM465.58 498.01H470.86V501.12H465.58ZM476.14 498.01H486.71V501.12H476.14ZM491.99 498.01H497.27V501.12H491.99ZM502.55 498.01H507.84V501.12H502.55ZM513.12 498.01H518.4V501.12H513.12ZM534.25 498.01H544.81V501.12H534.25ZM565.94 498.01H571.22V501.12H565.94ZM465.58 494.91H470.86V498.01H465.58ZM481.42 494.91H486.71V498.01H481.42ZM497.27 494.91H502.55V498.01H497.27ZM513.12 494.91H518.4V498.01H513.12ZM528.96 494.91H539.53V498.01H528.96ZM571.22 494.91H576.5V498.01H571.22ZM455.01 491.8H460.3V494.91H455.01ZM465.58 491.8H476.14V494.91H465.58ZM486.71 491.8H491.99V494.91H486.71ZM497.27 491.8H502.55V494.91H497.27ZM513.12 491.8H518.4V494.91H513.12ZM523.68 491.8H528.96V494.91H523.68ZM534.25 491.8H544.81V494.91H534.25ZM576.5 491.8H581.78V494.91H576.5ZM587.07 491.8H592.35V494.91H587.07ZM428.6 488.69H433.89V491.8H428.6ZM439.17 488.69H444.45V491.8H439.17ZM449.73 488.69H465.58V491.8H449.73ZM476.14 488.69H481.42V491.8H476.14ZM486.71 488.69H491.99V491.8H486.71ZM502.55 488.69H507.84V491.8H502.55ZM513.12 488.69H523.68V491.8H513.12ZM528.96 488.69H534.25V491.8H528.96ZM544.81 488.69H555.37V491.8H544.81ZM602.91 488.69H613.48V491.8H602.91ZM433.89 485.58H455.01V488.69H433.89ZM470.86 485.58H476.14V488.69H470.86ZM481.42 485.58H491.99V488.69H481.42ZM497.27 485.58H502.55V488.69H497.27ZM507.84 485.58H518.4V488.69H507.84ZM523.68 485.58H528.96V488.69H523.68ZM534.25 485.58H565.94V488.69H534.25ZM571.22 485.58H576.5V488.69H571.22ZM418.04 482.48H444.45V485.58H418.04ZM449.73 482.48H455.01V485.58H449.73ZM465.58 482.48H476.14V485.58H465.58ZM486.71 482.48H491.99V485.58H486.71ZM497.27 482.48H502.55V485.58H497.27ZM513.12 482.48H523.68V485.58H513.12ZM528.96 482.48H534.25V485.58H528.96ZM539.53 482.48H550.09V485.58H539.53ZM555.37 482.48H560.66V485.58H555.37ZM576.5 482.48H581.78V485.58H576.5ZM587.07 482.48H602.91V485.58H587.07ZM396.91 479.37H402.19V482.48H396.91ZM412.76 479.37H444.45V482.48H412.76ZM449.73 479.37H460.3V482.48H449.73ZM470.86 479.37H476.14V482.48H470.86ZM486.71 479.37H497.27V482.48H486.71ZM513.12 479.37H523.68V482.48H513.12ZM539.53 479.37H571.22V482.48H539.53ZM581.78 479.37H587.07V482.48H581.78ZM592.35 479.37H602.91V482.48H592.35ZM608.19 479.37H613.48V482.48H608.19ZM396.91 476.26H407.48V479.37H396.91ZM423.32 476.26H433.89V479.37H423.32ZM444.45 476.26H460.3V479.37H444.45ZM470.86 476.26H476.14V479.37H470.86ZM486.71 476.26H491.99V479.37H486.71ZM507.84 476.26H513.12V479.37H507.84ZM518.4 476.26H523.68V479.37H518.4ZM528.96 476.26H534.25V479.37H528.96ZM550.09 476.26H560.66V479.37H550.09ZM592.35 476.26H597.63V479.37H592.35ZM391.63 473.15H402.19V476.26H391.63ZM407.48 473.15H412.76V476.26H407.48ZM423.32 473.15H439.17V476.26H423.32ZM455.01 473.15H470.86V476.26H455.01ZM476.14 473.15H486.71V476.26H476.14ZM497.27 473.15H502.55V476.26H497.27ZM507.84 473.15H513.12V476.26H507.84ZM518.4 473.15H523.68V476.26H518.4ZM539.53 473.15H544.81V476.26H539.53ZM571.22 473.15H576.5V476.26H571.22ZM581.78 473.15H587.07V476.26H581.78ZM592.35 473.15H597.63V476.26H592.35ZM629.32 473.15H634.6V476.26H629.32ZM391.63 470.04H418.04V473.15H391.63ZM439.17 470.04H444.45V473.15H439.17ZM455.01 470.04H460.3V473.15H455.01ZM465.58 470.04H476.14V473.15H465.58ZM491.99 470.04H507.84V473.15H491.99ZM544.81 470.04H550.09V473.15H544.81ZM560.66 470.04H565.94V473.15H560.66ZM576.5 470.04H581.78V473.15H576.5ZM592.35 470.04H597.63V473.15H592.35ZM602.91 470.04H608.19V473.15H602.91ZM650.45 470.04H655.73V473.15H650.45ZM375.78 466.94H386.35V470.04H375.78ZM396.91 466.94H433.89V470.04H396.91ZM460.3 466.94H470.86V470.04H460.3ZM476.14 466.94H481.42V470.04H476.14ZM486.71 466.94H491.99V470.04H486.71ZM497.27 466.94H513.12V470.04H497.27ZM528.96 466.94H534.25V470.04H528.96ZM539.53 466.94H550.09V470.04H539.53ZM555.37 466.94H560.66V470.04H555.37ZM571.22 466.94H587.07V470.04H571.22ZM592.35 466.94H602.91V470.04H592.35ZM391.63 463.83H396.91V466.94H391.63ZM423.32 463.83H428.6V466.94H423.32ZM465.58 463.83H470.86V466.94H465.58ZM481.42 463.83H486.71V466.94H481.42ZM491.99 463.83H502.55V466.94H491.99ZM518.4 463.83H523.68V466.94H518.4ZM528.96 463.83H539.53V466.94H528.96ZM550.09 463.83H555.37V466.94H550.09ZM571.22 463.83H576.5V466.94H571.22ZM587.07 463.83H602.91V466.94H587.07ZM365.22 460.72H381.07V463.83H365.22ZM386.35 460.72H396.91V463.83H386.35ZM402.19 460.72H412.76V463.83H402.19ZM418.04 460.72H433.89V463.83H418.04ZM465.58 460.72H470.86V463.83H465.58ZM476.14 460.72H481.42V463.83H476.14ZM486.71 460.72H491.99V463.83H486.71ZM502.55 460.72H513.12V463.83H502.55ZM544.81 460.72H555.37V463.83H544.81ZM565.94 460.72H571.22V463.83H565.94ZM576.5 460.72H581.78V463.83H576.5ZM592.35 460.72H602.91V463.83H592.35ZM359.94 457.61H365.22V460.72H359.94ZM375.78 457.61H386.35V460.72H375.78ZM391.63 457.61H402.19V460.72H391.63ZM407.48 457.61H412.76V460.72H407.48ZM433.89 457.61H439.17V460.72H433.89ZM444.45 457.61H449.73V460.72H444.45ZM497.27 457.61H513.12V460.72H497.27ZM523.68 457.61H528.96V460.72H523.68ZM534.25 457.61H544.81V460.72H534.25ZM560.66 457.61H571.22V460.72H560.66ZM581.78 457.61H587.07V460.72H581.78ZM597.63 457.61H602.91V460.72H597.63ZM370.5 454.5H375.78V457.61H370.5ZM391.63 454.5H418.04V457.61H391.63ZM433.89 454.5H439.17V457.61H433.89ZM486.71 454.5H497.27V457.61H486.71ZM513.12 454.5H518.4V457.61H513.12ZM523.68 454.5H528.96V457.61H523.68ZM534.25 454.5H550.09V457.61H534.25ZM555.37 454.5H571.22V457.61H555.37ZM581.78 454.5H587.07V457.61H581.78ZM592.35 454.5H597.63V457.61H592.35ZM608.19 454.5H613.48V457.61H608.19ZM365.22 451.4H375.78V454.5H365.22ZM381.07 451.4H396.91V454.5H381.07ZM402.19 451.4H407.48V454.5H402.19ZM418.04 451.4H423.32V454.5H418.04ZM518.4 451.4H523.68V454.5H518.4ZM528.96 451.4H539.53V454.5H528.96ZM550.09 451.4H560.66V454.5H550.09ZM565.94 451.4H571.22V454.5H565.94ZM576.5 451.4H592.35V454.5H576.5ZM349.37 448.29H354.66V451.4H349.37ZM359.94 448.29H375.78V451.4H359.94ZM381.07 448.29H386.35V451.4H381.07ZM396.91 448.29H402.19V451.4H396.91ZM460.3 448.29H465.58V451.4H460.3ZM491.99 448.29H497.27V451.4H491.99ZM523.68 448.29H528.96V451.4H523.68ZM550.09 448.29H560.66V451.4H550.09ZM571.22 448.29H592.35V451.4H571.22ZM349.37 445.18H354.66V448.29H349.37ZM359.94 445.18H365.22V448.29H359.94ZM370.5 445.18H381.07V448.29H370.5ZM386.35 445.18H391.63V448.29H386.35ZM444.45 445.18H449.73V448.29H444.45ZM523.68 445.18H528.96V448.29H523.68ZM565.94 445.18H597.63V448.29H565.94ZM344.09 442.07H349.37V445.18H344.09ZM354.66 442.07H359.94V445.18H354.66ZM370.5 442.07H375.78V445.18H370.5ZM423.32 442.07H428.6V445.18H423.32ZM465.58 442.07H470.86V445.18H465.58ZM550.09 442.07H555.37V445.18H550.09ZM576.5 442.07H597.63V445.18H576.5ZM338.81 438.97H344.09V442.07H338.81ZM359.94 438.97H365.22V442.07H359.94ZM375.78 438.97H386.35V442.07H375.78ZM407.48 438.97H412.76V442.07H407.48ZM428.6 438.97H433.89V442.07H428.6ZM470.86 438.97H476.14V442.07H470.86ZM528.96 438.97H534.25V442.07H528.96ZM587.07 438.97H597.63V442.07H587.07ZM344.09 435.86H354.66V438.97H344.09ZM375.78 435.86H381.07V438.97H375.78ZM386.35 435.86H391.63V438.97H386.35ZM396.91 435.86H402.19V438.97H396.91ZM539.53 435.86H544.81V438.97H539.53ZM354.66 432.75H359.94V435.86H354.66ZM370.5 432.75H375.78V435.86H370.5ZM396.91 432.75H402.19V435.86H396.91ZM407.48 432.75H418.04V435.86H407.48ZM497.27 432.75H502.55V435.86H497.27ZM539.53 432.75H544.81V435.86H539.53ZM344.09 429.64H349.37V432.75H344.09ZM402.19 429.64H407.48V432.75H402.19ZM433.89 429.64H439.17V432.75H433.89ZM344.09 426.53H375.78V429.64H344.09ZM418.04 426.53H423.32V429.64H418.04ZM486.71 426.53H491.99V429.64H486.71ZM333.53 423.43H338.81V426.53H333.53ZM365.22 423.43H370.5V426.53H365.22ZM333.53 420.32H349.37V423.43H333.53ZM359.94 420.32H365.22V423.43H359.94ZM375.78 420.32H381.07V423.43H375.78ZM407.48 420.32H412.76V423.43H407.48ZM433.89 420.32H439.17V423.43H433.89ZM449.73 420.32H455.01V423.43H449.73ZM460.3 420.32H465.58V423.43H460.3ZM333.53 417.21H344.09V420.32H333.53ZM349.37 417.21H354.66V420.32H349.37ZM381.07 417.21H386.35V420.32H381.07ZM333.53 414.1H349.37V417.21H333.53ZM365.22 414.1H370.5V417.21H365.22ZM381.07 414.1H386.35V417.21H381.07ZM439.17 414.1H444.45V417.21H439.17ZM465.58 414.1H470.86V417.21H465.58ZM328.25 411H333.53V414.1H328.25ZM423.32 411H428.6V414.1H423.32ZM333.53 407.89H344.09V411H333.53ZM375.78 407.89H381.07V411H375.78ZM328.25 404.78H349.37V407.89H328.25ZM423.32 404.78H428.6V407.89H423.32ZM328.25 401.67H333.53V404.78H328.25ZM338.81 401.67H344.09V404.78H338.81ZM476.14 401.67H481.42V404.78H476.14ZM322.96 398.56H328.25V401.67H322.96ZM365.22 398.56H370.5V401.67H365.22ZM322.96 395.46H328.25V398.56H322.96ZM338.81 395.46H349.37V398.56H338.81ZM381.07 395.46H386.35V398.56H381.07ZM349.37 392.35H354.66V395.46H349.37ZM322.96 386.13H328.25V389.24H322.96ZM381.07 386.13H386.35V389.24H381.07ZM322.96 383.02H333.53V386.13H322.96ZM338.81 383.02H344.09V386.13H338.81ZM322.96 379.92H328.25V383.03H322.96ZM333.53 379.92H338.81V383.03H333.53ZM386.35 379.92H391.63V383.03H386.35ZM322.96 376.81H328.25V379.92H322.96ZM338.81 376.81H349.37V379.92H338.81ZM381.07 376.81H386.35V379.92H381.07ZM317.68 373.7H322.96V376.81H317.68ZM317.68 370.59H328.25V373.7H317.68ZM402.19 370.59H407.48V373.7H402.19ZM328.25 367.49H333.53V370.59H328.25ZM317.68 364.38H333.53V367.49H317.68ZM407.48 364.38H412.76V367.49H407.48ZM418.04 364.38H423.32V367.49H418.04ZM317.68 361.27H322.96V364.38H317.68ZM518.4 361.27H523.68V364.38H518.4ZM317.68 358.16H322.96V361.27H317.68ZM565.94 358.16H571.22V361.27H565.94ZM317.68 355.05H333.53V358.16H317.68ZM317.68 351.95H322.96V355.05H317.68ZM328.25 351.95H333.53V355.05H328.25ZM317.68 345.73H322.96V348.84H317.68ZM333.53 342.62H338.81V345.73H333.53ZM344.09 336.41H349.37V339.52H344.09ZM322.96 327.08H333.53V330.19H322.96ZM412.76 327.08H418.04V330.19H412.76ZM317.68 323.98H322.96V327.08H317.68ZM396.91 323.98H402.19V327.08H396.91ZM312.4 320.87H317.68V323.98H312.4ZM312.4 317.76H322.96V320.87H312.4ZM312.4 314.65H317.68V317.76H312.4ZM322.96 311.55H328.25V314.65H322.96ZM312.4 292.9H317.68V296.01H312.4ZM375.78 286.68H381.07V289.79H375.78ZM312.4 302.22H317.68V305.33H312.4Z"/><path fill="#1064dc" d="M645.17 529.09H655.73V532.2H645.17ZM544.81 525.98H550.09V529.09H544.81ZM555.37 525.98H560.66V529.09H555.37ZM565.94 525.98H571.22V529.09H565.94ZM523.68 522.88H528.96V525.98H523.68ZM544.81 522.88H555.37V525.98H544.81ZM502.55 519.77H507.84V522.88H502.55ZM513.12 519.77H534.25V522.88H513.12ZM555.37 519.77H560.66V522.88H555.37ZM497.27 516.66H502.55V519.77H497.27ZM518.4 516.66H528.96V519.77H518.4ZM502.55 513.55H507.84V516.66H502.55ZM513.12 513.55H528.96V516.66H513.12ZM550.09 513.55H555.37V516.66H550.09ZM491.99 510.45H502.55V513.55H491.99ZM513.12 510.45H518.4V513.55H513.12ZM544.81 510.45H550.09V513.55H544.81ZM502.55 507.34H507.84V510.45H502.55ZM476.14 504.23H486.71V507.34H476.14ZM460.3 501.12H465.58V504.23H460.3ZM470.86 501.12H476.14V504.23H470.86ZM481.42 501.12H486.71V504.23H481.42ZM502.55 501.12H507.84V504.23H502.55ZM449.73 498.01H455.01V501.12H449.73ZM460.3 498.01H465.58V501.12H460.3ZM486.71 498.01H491.99V501.12H486.71ZM497.27 498.01H502.55V501.12H497.27ZM507.84 498.01H513.12V501.12H507.84ZM433.89 494.91H439.17V498.01H433.89ZM444.45 494.91H449.73V498.01H444.45ZM460.3 494.91H465.58V498.01H460.3ZM470.86 494.91H476.14V498.01H470.86ZM491.99 494.91H497.27V498.01H491.99ZM502.55 494.91H507.84V498.01H502.55ZM428.6 491.8H455.01V494.91H428.6ZM460.3 491.8H465.58V494.91H460.3ZM476.14 491.8H481.42V494.91H476.14ZM444.45 488.69H449.73V491.8H444.45ZM470.86 488.69H476.14V491.8H470.86ZM481.42 488.69H486.71V491.8H481.42ZM491.99 488.69H502.55V491.8H491.99ZM402.19 485.58H407.48V488.69H402.19ZM412.76 485.58H433.89V488.69H412.76ZM455.01 485.58H465.58V488.69H455.01ZM476.14 485.58H481.42V488.69H476.14ZM491.99 485.58H497.27V488.69H491.99ZM518.4 485.58H523.68V488.69H518.4ZM391.63 482.48H396.91V485.58H391.63ZM407.48 482.48H418.04V485.58H407.48ZM455.01 482.48H460.3V485.58H455.01ZM481.42 482.48H486.71V485.58H481.42ZM491.99 482.48H497.27V485.58H491.99ZM502.55 482.48H513.12V485.58H502.55ZM523.68 482.48H528.96V485.58H523.68ZM386.35 479.37H391.63V482.48H386.35ZM402.19 479.37H412.76V482.48H402.19ZM444.45 479.37H449.73V482.48H444.45ZM460.3 479.37H465.58V482.48H460.3ZM476.14 479.37H486.71V482.48H476.14ZM497.27 479.37H507.84V482.48H497.27ZM523.68 479.37H528.96V482.48H523.68ZM534.25 479.37H539.53V482.48H534.25ZM576.5 479.37H581.78V482.48H576.5ZM391.63 476.26H396.91V479.37H391.63ZM407.48 476.26H423.32V479.37H407.48ZM460.3 476.26H470.86V479.37H460.3ZM491.99 476.26H507.84V479.37H491.99ZM534.25 476.26H550.09V479.37H534.25ZM560.66 476.26H571.22V479.37H560.66ZM576.5 476.26H592.35V479.37H576.5ZM381.07 473.15H391.63V476.26H381.07ZM402.19 473.15H407.48V476.26H402.19ZM412.76 473.15H418.04V476.26H412.76ZM486.71 473.15H497.27V476.26H486.71ZM502.55 473.15H507.84V476.26H502.55ZM513.12 473.15H518.4V476.26H513.12ZM523.68 473.15H528.96V476.26H523.68ZM550.09 473.15H555.37V476.26H550.09ZM560.66 473.15H571.22V476.26H560.66ZM587.07 473.15H592.35V476.26H587.07ZM370.5 470.04H375.78V473.15H370.5ZM381.07 470.04H391.63V473.15H381.07ZM481.42 470.04H491.99V473.15H481.42ZM518.4 470.04H544.81V473.15H518.4ZM550.09 470.04H560.66V473.15H550.09ZM565.94 470.04H576.5V473.15H565.94ZM581.78 470.04H592.35V473.15H581.78ZM370.5 466.94H375.78V470.04H370.5ZM481.42 466.94H486.71V470.04H481.42ZM513.12 466.94H518.4V470.04H513.12ZM534.25 466.94H539.53V470.04H534.25ZM550.09 466.94H555.37V470.04H550.09ZM560.66 466.94H565.94V470.04H560.66ZM587.07 466.94H592.35V470.04H587.07ZM365.22 463.83H370.5V466.94H365.22ZM381.07 463.83H391.63V466.94H381.07ZM402.19 463.83H412.76V466.94H402.19ZM502.55 463.83H518.4V466.94H502.55ZM523.68 463.83H528.96V466.94H523.68ZM539.53 463.83H550.09V466.94H539.53ZM555.37 463.83H565.94V466.94H555.37ZM576.5 463.83H587.07V466.94H576.5ZM381.07 460.72H386.35V463.83H381.07ZM513.12 460.72H544.81V463.83H513.12ZM560.66 460.72H565.94V463.83H560.66ZM571.22 460.72H576.5V463.83H571.22ZM581.78 460.72H592.35V463.83H581.78ZM349.37 457.61H354.66V460.72H349.37ZM365.22 457.61H375.78V460.72H365.22ZM528.96 457.61H534.25V460.72H528.96ZM544.81 457.61H560.66V460.72H544.81ZM571.22 457.61H581.78V460.72H571.22ZM587.07 457.61H592.35V460.72H587.07ZM349.37 454.5H354.66V457.61H349.37ZM359.94 454.5H365.22V457.61H359.94ZM375.78 454.5H381.07V457.61H375.78ZM518.4 454.5H523.68V457.61H518.4ZM550.09 454.5H555.37V457.61H550.09ZM571.22 454.5H581.78V457.61H571.22ZM349.37 451.4H354.66V454.5H349.37ZM359.94 451.4H365.22V454.5H359.94ZM539.53 451.4H544.81V454.5H539.53ZM571.22 451.4H576.5V454.5H571.22ZM592.35 451.4H597.63V454.5H592.35ZM344.09 448.29H349.37V451.4H344.09ZM354.66 448.29H359.94V451.4H354.66ZM592.35 448.29H597.63V451.4H592.35ZM344.09 445.18H349.37V448.29H344.09ZM354.66 445.18H359.94V448.29H354.66ZM349.37 442.07H354.66V445.18H349.37ZM565.94 442.07H571.22V445.18H565.94ZM344.09 438.97H354.66V442.07H344.09ZM333.53 435.86H338.81V438.97H333.53ZM333.53 432.75H338.81V435.86H333.53ZM344.09 432.75H354.66V435.86H344.09ZM338.81 429.64H344.09V432.75H338.81ZM349.37 429.64H354.66V432.75H349.37ZM333.53 426.53H338.81V429.64H333.53ZM338.81 423.43H344.09V426.53H338.81ZM328.25 417.21H333.53V420.32H328.25ZM344.09 417.21H349.37V420.32H344.09ZM328.25 414.1H333.53V417.21H328.25ZM333.53 411H338.81V414.1H333.53ZM328.25 407.89H333.53V411H328.25ZM322.96 401.67H328.25V404.78H322.96ZM317.68 395.46H322.96V398.56H317.68ZM317.68 389.24H328.25V392.35H317.68ZM317.68 386.13H322.96V389.24H317.68ZM317.68 376.81H322.96V379.92H317.68ZM322.96 373.7H328.25V376.81H322.96ZM317.68 367.49H322.96V370.59H317.68ZM322.96 351.95H328.25V355.05H322.96ZM312.4 336.41H317.68V339.52H312.4ZM312.4 327.08H317.68V330.19H312.4ZM312.4 323.98H317.68V327.08H312.4ZM312.4 311.55H317.68V314.65H312.4Z"/><path fill="#1272d9" d="M634.6 529.09H645.17V532.2H634.6ZM523.68 525.98H528.96V529.09H523.68ZM534.25 525.98H544.81V529.09H534.25ZM507.84 522.88H513.12V525.98H507.84ZM518.4 522.88H523.68V525.98H518.4ZM528.96 522.88H534.25V525.98H528.96ZM491.99 519.77H502.55V522.88H491.99ZM507.84 519.77H513.12V522.88H507.84ZM491.99 516.66H497.27V519.77H491.99ZM502.55 516.66H518.4V519.77H502.55ZM476.14 513.55H486.71V516.66H476.14ZM491.99 513.55H502.55V516.66H491.99ZM507.84 513.55H513.12V516.66H507.84ZM465.58 510.45H476.14V513.55H465.58ZM481.42 510.45H491.99V513.55H481.42ZM460.3 507.34H502.55V510.45H460.3ZM513.12 507.34H518.4V510.45H513.12ZM444.45 504.23H460.3V507.34H444.45ZM465.58 504.23H476.14V507.34H465.58ZM486.71 504.23H491.99V507.34H486.71ZM428.6 501.12H433.89V504.23H428.6ZM449.73 501.12H460.3V504.23H449.73ZM465.58 501.12H470.86V504.23H465.58ZM476.14 501.12H481.42V504.23H476.14ZM444.45 498.01H449.73V501.12H444.45ZM455.01 498.01H460.3V501.12H455.01ZM470.86 498.01H476.14V501.12H470.86ZM418.04 494.91H433.89V498.01H418.04ZM439.17 494.91H444.45V498.01H439.17ZM449.73 494.91H460.3V498.01H449.73ZM407.48 491.8H428.6V494.91H407.48ZM381.07 488.69H386.35V491.8H381.07ZM391.63 488.69H396.91V491.8H391.63ZM402.19 488.69H428.6V491.8H402.19ZM433.89 488.69H439.17V491.8H433.89ZM465.58 488.69H470.86V491.8H465.58ZM375.78 485.58H381.07V488.69H375.78ZM386.35 485.58H402.19V488.69H386.35ZM407.48 485.58H412.76V488.69H407.48ZM381.07 482.48H391.63V485.58H381.07ZM396.91 482.48H407.48V485.58H396.91ZM375.78 479.37H386.35V482.48H375.78ZM391.63 479.37H396.91V482.48H391.63ZM365.22 476.26H370.5V479.37H365.22ZM375.78 476.26H391.63V479.37H375.78ZM513.12 476.26H518.4V479.37H513.12ZM354.66 473.15H359.94V476.26H354.66ZM365.22 473.15H381.07V476.26H365.22ZM544.81 473.15H550.09V476.26H544.81ZM576.5 473.15H581.78V476.26H576.5ZM359.94 470.04H370.5V473.15H359.94ZM375.78 470.04H381.07V473.15H375.78ZM513.12 470.04H518.4V473.15H513.12ZM354.66 466.94H370.5V470.04H354.66ZM386.35 466.94H396.91V470.04H386.35ZM518.4 466.94H523.68V470.04H518.4ZM565.94 466.94H571.22V470.04H565.94ZM359.94 463.83H365.22V466.94H359.94ZM370.5 463.83H381.07V466.94H370.5ZM349.37 460.72H365.22V463.83H349.37ZM344.09 457.61H349.37V460.72H344.09ZM354.66 457.61H359.94V460.72H354.66ZM386.35 457.61H391.63V460.72H386.35ZM592.35 457.61H597.63V460.72H592.35ZM354.66 454.5H359.94V457.61H354.66ZM587.07 454.5H592.35V457.61H587.07ZM338.81 451.4H349.37V454.5H338.81ZM354.66 451.4H359.94V454.5H354.66ZM560.66 451.4H565.94V454.5H560.66ZM338.81 448.29H344.09V451.4H338.81ZM338.81 445.18H344.09V448.29H338.81ZM333.53 442.07H344.09V445.18H333.53ZM333.53 438.97H338.81V442.07H333.53ZM338.81 435.86H344.09V438.97H338.81ZM328.25 432.75H333.53V435.86H328.25ZM328.25 429.64H338.81V432.75H328.25ZM328.25 426.53H333.53V429.64H328.25ZM328.25 423.43H333.53V426.53H328.25ZM322.96 420.32H333.53V423.43H322.96ZM322.96 417.21H328.25V420.32H322.96ZM322.96 414.1H328.25V417.21H322.96ZM317.68 411H328.25V414.1H317.68ZM322.96 407.89H328.25V411H322.96ZM322.96 404.78H328.25V407.89H322.96ZM317.68 401.67H322.96V404.78H317.68ZM317.68 398.56H322.96V401.67H317.68ZM317.68 392.35H322.96V395.46H317.68ZM317.68 383.02H322.96V386.13H317.68ZM317.68 379.92H322.96V383.03H317.68ZM312.4 348.84H317.68V351.95H312.4ZM312.4 342.62H317.68V345.73H312.4ZM312.4 339.52H317.68V342.62H312.4ZM312.4 333.3H317.68V336.41H312.4ZM312.4 330.19H317.68V333.3H312.4Z"/><path fill="#1481d6" d="M624.04 529.09H634.6V532.2H624.04ZM497.27 525.98H523.68V529.09H497.27ZM528.96 525.98H534.25V529.09H528.96ZM491.99 522.88H507.84V525.98H491.99ZM513.12 522.88H518.4V525.98H513.12ZM465.58 519.77H476.14V522.88H465.58ZM481.42 519.77H491.99V522.88H481.42ZM460.3 516.66H491.99V519.77H460.3ZM460.3 513.55H476.14V516.66H460.3ZM486.71 513.55H491.99V516.66H486.71ZM439.17 510.45H444.45V513.55H439.17ZM449.73 510.45H465.58V513.55H449.73ZM476.14 510.45H481.42V513.55H476.14ZM428.6 507.34H460.3V510.45H428.6ZM423.32 504.23H444.45V507.34H423.32ZM460.3 504.23H465.58V507.34H460.3ZM412.76 501.12H428.6V504.23H412.76ZM433.89 501.12H449.73V504.23H433.89ZM391.63 498.01H444.45V501.12H391.63ZM381.07 494.91H418.04V498.01H381.07ZM381.07 491.8H407.48V494.91H381.07ZM370.5 488.69H381.07V491.8H370.5ZM386.35 488.69H391.63V491.8H386.35ZM396.91 488.69H402.19V491.8H396.91ZM365.22 485.58H375.78V488.69H365.22ZM381.07 485.58H386.35V488.69H381.07ZM359.94 482.48H381.07V485.58H359.94ZM354.66 479.37H375.78V482.48H354.66ZM354.66 476.26H365.22V479.37H354.66ZM370.5 476.26H375.78V479.37H370.5ZM349.37 473.15H354.66V476.26H349.37ZM359.94 473.15H365.22V476.26H359.94ZM344.09 470.04H359.94V473.15H344.09ZM338.81 466.94H354.66V470.04H338.81ZM338.81 463.83H359.94V466.94H338.81ZM338.81 460.72H349.37V463.83H338.81ZM333.53 457.61H344.09V460.72H333.53ZM333.53 454.5H349.37V457.61H333.53ZM333.53 451.4H338.81V454.5H333.53ZM333.53 448.29H338.81V451.4H333.53ZM328.25 445.18H338.81V448.29H328.25ZM328.25 442.07H333.53V445.18H328.25ZM328.25 438.97H333.53V442.07H328.25ZM322.96 435.86H333.53V438.97H322.96ZM322.96 432.75H328.25V435.86H322.96ZM322.96 429.64H328.25V432.75H322.96ZM322.96 426.53H328.25V429.64H322.96ZM322.96 423.43H328.25V426.53H322.96ZM317.68 420.32H322.96V423.43H317.68ZM317.68 417.21H322.96V420.32H317.68ZM317.68 414.1H322.96V417.21H317.68ZM317.68 407.89H322.96V411H317.68ZM317.68 404.78H322.96V407.89H317.68ZM312.4 358.16H317.68V361.27H312.4ZM312.4 355.05H317.68V358.16H312.4ZM312.4 351.95H317.68V355.05H312.4ZM312.4 345.73H317.68V348.84H312.4Z"/><path fill="#0e8fd1" d="M613.48 529.09H624.04V532.2H613.48ZM455.01 525.98H460.3V529.09H455.01ZM470.86 525.98H497.27V529.09H470.86ZM449.73 522.88H455.01V525.98H449.73ZM460.3 522.88H491.99V525.98H460.3ZM428.6 519.77H465.58V522.88H428.6ZM476.14 519.77H481.42V522.88H476.14ZM407.48 516.66H412.76V519.77H407.48ZM418.04 516.66H460.3V519.77H418.04ZM402.19 513.55H460.3V516.66H402.19ZM386.35 510.45H391.63V513.55H386.35ZM396.91 510.45H439.17V513.55H396.91ZM444.45 510.45H449.73V513.55H444.45ZM381.07 507.34H428.6V510.45H381.07ZM370.5 504.23H423.32V507.34H370.5ZM370.5 501.12H412.76V504.23H370.5ZM365.22 498.01H391.63V501.12H365.22ZM365.22 494.91H381.07V498.01H365.22ZM359.94 491.8H381.07V494.91H359.94ZM354.66 488.69H370.5V491.8H354.66ZM349.37 485.58H365.22V488.69H349.37ZM344.09 482.48H359.94V485.58H344.09ZM338.81 479.37H354.66V482.48H338.81ZM338.81 476.26H354.66V479.37H338.81ZM333.53 473.15H349.37V476.26H333.53ZM333.53 470.04H344.09V473.15H333.53ZM333.53 466.94H338.81V470.04H333.53ZM333.53 463.83H338.81V466.94H333.53ZM333.53 460.72H338.81V463.83H333.53ZM328.25 457.61H333.53V460.72H328.25ZM328.25 454.5H333.53V457.61H328.25ZM328.25 451.4H333.53V454.5H328.25ZM328.25 448.29H333.53V451.4H328.25ZM322.96 445.18H328.25V448.29H322.96ZM322.96 442.07H328.25V445.18H322.96ZM322.96 438.97H328.25V442.07H322.96ZM317.68 435.86H322.96V438.97H317.68ZM317.68 432.75H322.96V435.86H317.68ZM317.68 429.64H322.96V432.75H317.68ZM317.68 426.53H322.96V429.64H317.68ZM317.68 423.43H322.96V426.53H317.68ZM312.4 373.7H317.68V376.81H312.4ZM312.4 370.59H317.68V373.7H312.4ZM312.4 367.49H317.68V370.59H312.4ZM312.4 364.38H317.68V367.49H312.4ZM312.4 361.27H317.68V364.38H312.4Z"/><path fill="#099dcc" d="M587.07 529.09H613.48V532.2H587.07ZM402.19 525.98H455.01V529.09H402.19ZM460.3 525.98H470.86V529.09H460.3ZM386.35 522.88H449.73V525.98H386.35ZM455.01 522.88H460.3V525.98H455.01ZM370.5 519.77H428.6V522.88H370.5ZM370.5 516.66H407.48V519.77H370.5ZM412.76 516.66H418.04V519.77H412.76ZM365.22 513.55H402.19V516.66H365.22ZM359.94 510.45H386.35V513.55H359.94ZM391.63 510.45H396.91V513.55H391.63ZM359.94 507.34H381.07V510.45H359.94ZM354.66 504.23H370.5V507.34H354.66ZM354.66 501.12H370.5V504.23H354.66ZM349.37 498.01H365.22V501.12H349.37ZM344.09 494.91H365.22V498.01H344.09ZM338.81 491.8H359.94V494.91H338.81ZM333.53 488.69H354.66V491.8H333.53ZM333.53 485.58H349.37V488.69H333.53ZM333.53 482.48H344.09V485.58H333.53ZM333.53 479.37H338.81V482.48H333.53ZM328.25 476.26H338.81V479.37H328.25ZM328.25 473.15H333.53V476.26H328.25ZM328.25 470.04H333.53V473.15H328.25ZM328.25 466.94H333.53V470.04H328.25ZM328.25 463.83H333.53V466.94H328.25ZM328.25 460.72H333.53V463.83H328.25ZM322.96 457.61H328.25V460.72H322.96ZM322.96 454.5H328.25V457.61H322.96ZM322.96 451.4H328.25V454.5H322.96ZM322.96 448.29H328.25V451.4H322.96ZM317.68 445.18H322.96V448.29H317.68ZM317.68 442.07H322.96V445.18H317.68ZM317.68 438.97H322.96V442.07H317.68ZM312.4 386.13H317.68V389.24H312.4ZM312.4 383.02H317.68V386.13H312.4ZM312.4 379.92H317.68V383.03H312.4ZM312.4 376.81H317.68V379.92H312.4Z"/><path fill="#0da7c3" d="M544.81 529.09H587.07V532.2H544.81ZM354.66 525.98H402.19V529.09H354.66ZM354.66 522.88H386.35V525.98H354.66ZM349.37 519.77H370.5V522.88H349.37ZM344.09 516.66H370.5V519.77H344.09ZM338.81 513.55H365.22V516.66H338.81ZM338.81 510.45H359.94V513.55H338.81ZM333.53 507.34H359.94V510.45H333.53ZM333.53 504.23H354.66V507.34H333.53ZM333.53 501.12H354.66V504.23H333.53ZM333.53 498.01H349.37V501.12H333.53ZM328.25 494.91H344.09V498.01H328.25ZM328.25 491.8H338.81V494.91H328.25ZM328.25 488.69H333.53V491.8H328.25ZM328.25 485.58H333.53V488.69H328.25ZM322.96 482.48H333.53V485.58H322.96ZM322.96 479.37H333.53V482.48H322.96ZM322.96 476.26H328.25V479.37H322.96ZM322.96 473.15H328.25V476.26H322.96ZM322.96 470.04H328.25V473.15H322.96ZM322.96 466.94H328.25V470.04H322.96ZM322.96 463.83H328.25V466.94H322.96ZM322.96 460.72H328.25V463.83H322.96ZM317.68 454.5H322.96V457.61H317.68ZM317.68 451.4H322.96V454.5H317.68ZM317.68 448.29H322.96V451.4H317.68ZM312.4 404.78H317.68V407.89H312.4ZM312.4 401.67H317.68V404.78H312.4ZM312.4 398.56H317.68V401.67H312.4ZM312.4 395.46H317.68V398.56H312.4ZM312.4 392.35H317.68V395.46H312.4ZM312.4 389.24H317.68V392.35H312.4Z"/><path fill="#1eafb3" d="M507.84 529.09H544.81V532.2H507.84ZM338.81 525.98H354.66V529.09H338.81ZM333.53 522.88H354.66V525.98H333.53ZM333.53 519.77H349.37V522.88H333.53ZM328.25 516.66H344.09V519.77H328.25ZM328.25 513.55H338.81V516.66H328.25ZM328.25 510.45H338.81V513.55H328.25ZM328.25 507.34H333.53V510.45H328.25ZM322.96 504.23H333.53V507.34H322.96ZM322.96 501.12H333.53V504.23H322.96ZM322.96 498.01H333.53V501.12H322.96ZM322.96 494.91H328.25V498.01H322.96ZM322.96 491.8H328.25V494.91H322.96ZM322.96 488.69H328.25V491.8H322.96ZM322.96 485.58H328.25V488.69H322.96ZM317.68 482.48H322.96V485.58H317.68ZM317.68 479.37H322.96V482.48H317.68ZM317.68 476.26H322.96V479.37H317.68ZM317.68 473.15H322.96V476.26H317.68ZM317.68 470.04H322.96V473.15H317.68ZM317.68 466.94H322.96V470.04H317.68ZM317.68 463.83H322.96V466.94H317.68ZM317.68 460.72H322.96V463.83H317.68ZM317.68 457.61H322.96V460.72H317.68ZM312.4 426.53H317.68V429.64H312.4ZM312.4 423.43H317.68V426.53H312.4ZM312.4 420.32H317.68V423.43H312.4ZM312.4 417.21H317.68V420.32H312.4ZM312.4 414.1H317.68V417.21H312.4ZM312.4 411H317.68V414.1H312.4ZM312.4 407.89H317.68V411H312.4Z"/><path fill="#2eb7a4" d="M470.86 529.09H507.84V532.2H470.86ZM328.25 525.98H338.81V529.09H328.25ZM328.25 522.88H333.53V525.98H328.25ZM322.96 519.77H333.53V522.88H322.96ZM322.96 516.66H328.25V519.77H322.96ZM322.96 513.55H328.25V516.66H322.96ZM322.96 510.45H328.25V513.55H322.96ZM317.68 507.34H328.25V510.45H317.68ZM317.68 504.23H322.96V507.34H317.68ZM317.68 501.12H322.96V504.23H317.68ZM317.68 498.01H322.96V501.12H317.68ZM317.68 494.91H322.96V498.01H317.68ZM317.68 491.8H322.96V494.91H317.68ZM317.68 488.69H322.96V491.8H317.68ZM317.68 485.58H322.96V488.69H317.68ZM312.4 442.07H317.68V445.18H312.4ZM312.4 438.97H317.68V442.07H312.4ZM312.4 435.86H317.68V438.97H312.4ZM312.4 432.75H317.68V435.86H312.4ZM312.4 429.64H317.68V432.75H312.4Z"/><path fill="#52ba92" d="M433.89 529.09H470.86V532.2H433.89ZM322.96 525.98H328.25V529.09H322.96ZM322.96 522.88H328.25V525.98H322.96ZM317.68 519.77H322.96V522.88H317.68ZM317.68 516.66H322.96V519.77H317.68ZM317.68 513.55H322.96V516.66H317.68ZM317.68 510.45H322.96V513.55H317.68ZM312.4 454.5H317.68V457.61H312.4ZM312.4 451.4H317.68V454.5H312.4ZM312.4 448.29H317.68V451.4H312.4ZM312.4 445.18H317.68V448.29H312.4Z"/><path fill="#74bd81" d="M402.19 529.09H433.89V532.2H402.19ZM317.68 522.88H322.96V525.98H317.68ZM312.4 466.94H317.68V470.04H312.4ZM312.4 463.83H317.68V466.94H312.4ZM312.4 460.72H317.68V463.83H312.4ZM312.4 457.61H317.68V460.72H312.4Z"/><path fill="#95be71" d="M375.78 529.09H402.19V532.2H375.78ZM317.68 525.98H322.96V529.09H317.68ZM312.4 476.26H317.68V479.37H312.4ZM312.4 473.15H317.68V476.26H312.4ZM312.4 470.04H317.68V473.15H312.4Z"/><path fill="#b3bd65" d="M354.66 529.09H375.78V532.2H354.66ZM312.4 491.8H317.68V494.91H312.4ZM312.4 488.69H317.68V491.8H312.4ZM312.4 485.58H317.68V488.69H312.4ZM312.4 482.48H317.68V485.58H312.4ZM312.4 479.37H317.68V482.48H312.4Z"/><path fill="#d1bb59" d="M333.53 529.09H354.66V532.2H333.53ZM312.4 501.12H317.68V504.23H312.4ZM312.4 498.01H317.68V501.12H312.4ZM312.4 494.91H317.68V498.01H312.4Z"/><path fill="#e2c04b" d="M328.25 529.09H333.53V532.2H328.25ZM312.4 510.45H317.68V513.55H312.4ZM312.4 507.34H317.68V510.45H312.4ZM312.4 504.23H317.68V507.34H312.4Z"/><path fill="#f4c63b" d="M322.96 529.09H328.25V532.2H322.96ZM312.4 516.66H317.68V519.77H312.4ZM312.4 513.55H317.68V516.66H312.4Z"/><path fill="#fdd22b" d="M317.68 529.09H322.96V532.2H317.68ZM312.4 522.88H317.68V525.98H312.4ZM312.4 519.77H317.68V522.88H312.4Z"/><path fill="#fbe61d" d="M312.4 525.98H317.68V529.09H312.4Z"/><path fill="#f9f90f" d="M312.4 529.09H317.68V532.2H312.4Z"/></g>
<path d="M338.81 532.2V524.8M365.22 532.2V524.8M391.63 532.2V524.8M418.04 532.2V518M444.45 532.2V524.8M470.86 532.2V524.8M497.27 532.2V524.8M523.68 532.2V518M550.09 532.2V524.8M576.5 532.2V524.8M602.91 532.2V524.8M629.32 532.2V518M655.73 532.2V524.8M682.14 532.2V524.8M708.55 532.2V524.8M734.96 532.2V518M761.37 532.2V524.8M787.78 532.2V524.8M814.19 532.2V524.8M840.6 532.2V518M867.01 532.2V524.8M893.42 532.2V524.8M919.83 532.2V524.8M946.24 532.2V518M972.65 532.2V524.8M312.4 516.66H324.7M312.4 501.12H324.7M312.4 485.58H324.7M312.4 470.04H337.1M312.4 454.5H324.7M312.4 438.97H324.7M312.4 423.43H324.7M312.4 407.89H337.1M312.4 392.35H324.7M312.4 376.81H324.7M312.4 361.27H324.7M312.4 345.73H337.1M312.4 330.19H324.7M312.4 314.65H324.7M312.4 299.11H324.7M312.4 283.58H337.1M312.4 268.04H324.7M312.4 252.5H324.7M312.4 236.96H324.7M312.4 221.42H337.1M312.4 205.88H324.7M312.4 190.34H324.7M312.4 174.8H324.7M312.4 159.26H337.1M312.4 143.72H324.7" stroke="#000" stroke-width="1.1" fill="none"/><rect x="312.4" y="134.4" width="676.1" height="397.8" fill="none" stroke="#262626" stroke-width="1.15"/><text x="312.4" y="549.7" text-anchor="middle" font-family='"Liberation Sans",sans-serif' font-size="16.4">0</text><text x="308.8" y="537.1" text-anchor="end" font-family='"Liberation Sans",sans-serif' font-size="16.4">0</text><text x="418.04" y="549.7" text-anchor="middle" font-family='"Liberation Sans",sans-serif' font-size="16.4">20</text><text x="308.8" y="474.94" text-anchor="end" font-family='"Liberation Sans",sans-serif' font-size="16.4">20</text><text x="523.68" y="549.7" text-anchor="middle" font-family='"Liberation Sans",sans-serif' font-size="16.4">40</text><text x="308.8" y="412.79" text-anchor="end" font-family='"Liberation Sans",sans-serif' font-size="16.4">40</text><text x="629.32" y="549.7" text-anchor="middle" font-family='"Liberation Sans",sans-serif' font-size="16.4">60</text><text x="308.8" y="350.63" text-anchor="end" font-family='"Liberation Sans",sans-serif' font-size="16.4">60</text><text x="734.96" y="549.7" text-anchor="middle" font-family='"Liberation Sans",sans-serif' font-size="16.4">80</text><text x="308.8" y="288.48" text-anchor="end" font-family='"Liberation Sans",sans-serif' font-size="16.4">80</text><text x="840.6" y="549.7" text-anchor="middle" font-family='"Liberation Sans",sans-serif' font-size="16.4">100</text><text x="308.8" y="226.32" text-anchor="end" font-family='"Liberation Sans",sans-serif' font-size="16.4">100</text><text x="946.24" y="549.7" text-anchor="middle" font-family='"Liberation Sans",sans-serif' font-size="16.4">120</text><text x="308.8" y="164.16" text-anchor="end" font-family='"Liberation Sans",sans-serif' font-size="16.4">120</text>
<rect x="997.1" y="512.01" width="34.6" height="20.49" fill="#263ea8"/><rect x="997.1" y="492.12" width="34.6" height="20.49" fill="#1652cd"/><rect x="997.1" y="472.23" width="34.6" height="20.49" fill="#1064dc"/><rect x="997.1" y="452.34" width="34.6" height="20.49" fill="#1272d9"/><rect x="997.1" y="432.45" width="34.6" height="20.49" fill="#1481d6"/><rect x="997.1" y="412.56" width="34.6" height="20.49" fill="#0e8fd1"/><rect x="997.1" y="392.67" width="34.6" height="20.49" fill="#099dcc"/><rect x="997.1" y="372.78" width="34.6" height="20.49" fill="#0da7c3"/><rect x="997.1" y="352.89" width="34.6" height="20.49" fill="#1eafb3"/><rect x="997.1" y="333" width="34.6" height="20.49" fill="#2eb7a4"/><rect x="997.1" y="313.11" width="34.6" height="20.49" fill="#52ba92"/><rect x="997.1" y="293.22" width="34.6" height="20.49" fill="#74bd81"/><rect x="997.1" y="273.33" width="34.6" height="20.49" fill="#95be71"/><rect x="997.1" y="253.44" width="34.6" height="20.49" fill="#b3bd65"/><rect x="997.1" y="233.55" width="34.6" height="20.49" fill="#d1bb59"/><rect x="997.1" y="213.66" width="34.6" height="20.49" fill="#e2c04b"/><rect x="997.1" y="193.77" width="34.6" height="20.49" fill="#f4c63b"/><rect x="997.1" y="173.88" width="34.6" height="20.49" fill="#fdd22b"/><rect x="997.1" y="153.99" width="34.6" height="20.49" fill="#fbe61d"/><rect x="997.1" y="134.1" width="34.6" height="20.49" fill="#f9f90f"/><path d="M1031.7 532.27H1021.3M1031.7 526.26H1021.3M1031.7 521.59H1021.3M1031.7 517.78H1021.3M1031.7 514.56H1021.3M1031.7 511.77H1021.3M1031.7 509.3H1021.3M1031.7 507.1H1011.3M1031.7 492.61H1021.3M1031.7 484.13H1021.3M1031.7 478.12H1021.3M1031.7 473.45H1021.3M1031.7 469.64H1021.3M1031.7 466.42H1021.3M1031.7 463.63H1021.3M1031.7 461.16H1021.3M1031.7 458.96H1011.3M1031.7 444.47H1021.3M1031.7 435.99H1021.3M1031.7 429.98H1021.3M1031.7 425.31H1021.3M1031.7 421.5H1021.3M1031.7 418.28H1021.3M1031.7 415.49H1021.3M1031.7 413.02H1021.3M1031.7 410.82H1011.3M1031.7 396.33H1021.3M1031.7 387.85H1021.3M1031.7 381.84H1021.3M1031.7 377.17H1021.3M1031.7 373.36H1021.3M1031.7 370.14H1021.3M1031.7 367.35H1021.3M1031.7 364.88H1021.3M1031.7 362.68H1011.3M1031.7 348.19H1021.3M1031.7 339.71H1021.3M1031.7 333.7H1021.3M1031.7 329.03H1021.3M1031.7 325.22H1021.3M1031.7 322H1021.3M1031.7 319.21H1021.3M1031.7 316.74H1021.3M1031.7 314.54H1011.3M1031.7 300.05H1021.3M1031.7 291.57H1021.3M1031.7 285.56H1021.3M1031.7 280.89H1021.3M1031.7 277.08H1021.3M1031.7 273.86H1021.3M1031.7 271.07H1021.3M1031.7 268.6H1021.3M1031.7 266.4H1011.3M1031.7 251.91H1021.3M1031.7 243.43H1021.3M1031.7 237.42H1021.3M1031.7 232.75H1021.3M1031.7 228.94H1021.3M1031.7 225.72H1021.3M1031.7 222.93H1021.3M1031.7 220.46H1021.3M1031.7 218.26H1011.3M1031.7 203.77H1021.3M1031.7 195.29H1021.3M1031.7 189.28H1021.3M1031.7 184.61H1021.3M1031.7 180.8H1021.3M1031.7 177.58H1021.3M1031.7 174.79H1021.3M1031.7 172.32H1021.3M1031.7 170.12H1011.3M1031.7 155.63H1021.3M1031.7 147.15H1021.3M1031.7 141.14H1021.3M1031.7 136.47H1021.3" stroke="#000" stroke-width="1.1" fill="none"/><path d="M1031.7 134.4V532.2" stroke="#000" stroke-width="1.2"/><text x="1035.5" y="513.8" font-family='"Liberation Sans",sans-serif' font-size="16.4">10</text><text x="1055.3" y="507.9" font-family='"Liberation Sans",sans-serif' font-size="10.6">0</text><text x="1035.5" y="465.66" font-family='"Liberation Sans",sans-serif' font-size="16.4">10</text><text x="1055.3" y="459.76" font-family='"Liberation Sans",sans-serif' font-size="10.6">1</text><text x="1035.5" y="417.52" font-family='"Liberation Sans",sans-serif' font-size="16.4">10</text><text x="1055.3" y="411.62" font-family='"Liberation Sans",sans-serif' font-size="10.6">2</text><text x="1035.5" y="369.38" font-family='"Liberation Sans",sans-serif' font-size="16.4">10</text><text x="1055.3" y="363.48" font-family='"Liberation Sans",sans-serif' font-size="10.6">3</text><text x="1035.5" y="321.24" font-family='"Liberation Sans",sans-serif' font-size="16.4">10</text><text x="1055.3" y="315.34" font-family='"Liberation Sans",sans-serif' font-size="10.6">4</text><text x="1035.5" y="273.1" font-family='"Liberation Sans",sans-serif' font-size="16.4">10</text><text x="1055.3" y="267.2" font-family='"Liberation Sans",sans-serif' font-size="10.6">5</text><text x="1035.5" y="224.96" font-family='"Liberation Sans",sans-serif' font-size="16.4">10</text><text x="1055.3" y="219.06" font-family='"Liberation Sans",sans-serif' font-size="10.6">6</text><text x="1035.5" y="176.82" font-family='"Liberation Sans",sans-serif' font-size="16.4">10</text><text x="1055.3" y="170.92" font-family='"Liberation Sans",sans-serif' font-size="10.6">7</text>
<rect x="694.4" y="118.3" width="170" height="131.3" fill="#fff" stroke="#333" stroke-width="1.1"/><path d="M694.4 140.18H864.4" stroke="#333" stroke-width="1.1"/><text x="779.4" y="133.04" text-anchor="middle" font-family='"Liberation Sans",sans-serif' font-size="16.2">xyMultiplicityDSSD0</text><text x="703.8" y="155.72" font-family='"Liberation Sans",sans-serif' font-size="16.2">Entries</text><text x="855.6" y="155.72" text-anchor="end" font-family='"Liberation Sans",sans-serif' font-size="16.2">70352682</text><text x="703.8" y="177.61" font-family='"Liberation Sans",sans-serif' font-size="16.2">Mean x</text><text x="855.6" y="177.61" text-anchor="end" font-family='"Liberation Sans",sans-serif' font-size="16.2">0.2870</text><text x="703.8" y="199.49" font-family='"Liberation Sans",sans-serif' font-size="16.2">Mean y</text><text x="855.6" y="199.49" text-anchor="end" font-family='"Liberation Sans",sans-serif' font-size="16.2">0.4010</text><text x="703.8" y="221.38" font-family='"Liberation Sans",sans-serif' font-size="16.2">Std Dev x</text><text x="855.6" y="221.38" text-anchor="end" font-family='"Liberation Sans",sans-serif' font-size="16.2">1.514</text><text x="703.8" y="243.26" font-family='"Liberation Sans",sans-serif' font-size="16.2">Std Dev y</text><text x="855.6" y="243.26" text-anchor="end" font-family='"Liberation Sans",sans-serif' font-size="16.2">1.893</text>
<rect x="232.1" y="566.7" width="9.9" height="10" fill="#b6c8e6"/>
<rect x="1158.1" y="134.4" width="676.1" height="397.8" fill="#fff"/>
<clipPath id="hc2"><rect x="1158.1" y="134.4" width="676.1" height="397.8"/></clipPath><g clip-path="url(#hc2)"><path fill="#1652cd" d="M1358.82 529.09H1369.38V532.2H1358.82ZM1490.87 529.09H1496.15V532.2H1490.87ZM1612.35 529.09H1617.64V532.2H1612.35ZM1316.56 525.98H1321.84V529.09H1316.56ZM1327.12 525.98H1332.41V529.09H1327.12ZM1353.54 525.98H1364.1V529.09H1353.54ZM1379.95 525.98H1385.23V529.09H1379.95ZM1306 522.88H1311.28V525.98H1306ZM1337.69 522.88H1348.25V525.98H1337.69ZM1353.54 522.88H1364.1V525.98H1353.54ZM1300.71 519.77H1311.28V522.88H1300.71ZM1316.56 519.77H1327.12V522.88H1316.56ZM1390.51 519.77H1395.79V522.88H1390.51ZM1295.43 516.66H1300.71V519.77H1295.43ZM1316.56 516.66H1321.84V519.77H1316.56ZM1327.12 516.66H1342.97V519.77H1327.12ZM1348.25 516.66H1353.54V519.77H1348.25ZM1379.95 516.66H1390.51V519.77H1379.95ZM1321.84 513.55H1327.12V516.66H1321.84ZM1337.69 513.55H1348.25V516.66H1337.69ZM1448.61 513.55H1453.89V516.66H1448.61ZM1638.76 513.55H1644.05V516.66H1638.76ZM1332.41 510.45H1337.69V513.55H1332.41ZM1385.23 510.45H1390.51V513.55H1385.23ZM1290.15 507.34H1295.43V510.45H1290.15ZM1306 507.34H1327.12V510.45H1306ZM1369.38 507.34H1374.66V510.45H1369.38ZM1432.77 507.34H1438.05V510.45H1432.77ZM1306 504.23H1311.28V507.34H1306ZM1332.41 504.23H1342.97V507.34H1332.41ZM1306 501.12H1311.28V504.23H1306ZM1332.41 501.12H1337.69V504.23H1332.41ZM1416.92 501.12H1422.2V504.23H1416.92ZM1327.12 498.01H1337.69V501.12H1327.12ZM1348.25 498.01H1353.54V501.12H1348.25ZM1374.66 498.01H1385.23V501.12H1374.66ZM1791.94 498.01H1797.23V501.12H1791.94ZM1311.28 494.91H1316.56V498.01H1311.28ZM1321.84 494.91H1327.12V498.01H1321.84ZM1342.97 494.91H1348.25V498.01H1342.97ZM1358.82 494.91H1364.1V498.01H1358.82ZM1443.33 494.91H1448.61V498.01H1443.33ZM1306 491.8H1311.28V494.91H1306ZM1337.69 491.8H1342.97V494.91H1337.69ZM1348.25 491.8H1353.54V494.91H1348.25ZM1401.07 491.8H1406.36V494.91H1401.07ZM1311.28 488.69H1337.69V491.8H1311.28ZM1411.64 488.69H1416.92V491.8H1411.64ZM1306 485.58H1311.28V488.69H1306ZM1342.97 485.58H1348.25V488.69H1342.97ZM1411.64 485.58H1416.92V488.69H1411.64ZM1342.97 482.48H1353.54V485.58H1342.97ZM1327.12 479.37H1337.69V482.48H1327.12ZM1353.54 479.37H1358.82V482.48H1353.54ZM1374.66 479.37H1379.95V482.48H1374.66ZM1306 476.26H1311.28V479.37H1306ZM1321.84 476.26H1327.12V479.37H1321.84ZM1337.69 476.26H1353.54V479.37H1337.69ZM1369.38 476.26H1374.66V479.37H1369.38ZM1401.07 476.26H1406.36V479.37H1401.07ZM1416.92 476.26H1422.2V479.37H1416.92ZM1311.28 473.15H1316.56V476.26H1311.28ZM1327.12 473.15H1332.41V476.26H1327.12ZM1353.54 473.15H1364.1V476.26H1353.54ZM1374.66 473.15H1379.95V476.26H1374.66ZM1390.51 473.15H1395.79V476.26H1390.51ZM1311.28 470.04H1316.56V473.15H1311.28ZM1342.97 470.04H1348.25V473.15H1342.97ZM1316.56 466.94H1321.84V470.04H1316.56ZM1327.12 466.94H1342.97V470.04H1327.12ZM1348.25 466.94H1364.1V470.04H1348.25ZM1374.66 466.94H1379.95V470.04H1374.66ZM1385.23 466.94H1390.51V470.04H1385.23ZM1295.43 463.83H1300.71V466.94H1295.43ZM1316.56 463.83H1327.12V466.94H1316.56ZM1337.69 463.83H1342.97V466.94H1337.69ZM1358.82 463.83H1364.1V466.94H1358.82ZM1374.66 463.83H1379.95V466.94H1374.66ZM1321.84 460.72H1342.97V463.83H1321.84ZM1348.25 460.72H1353.54V463.83H1348.25ZM1374.66 460.72H1379.95V463.83H1374.66ZM1411.64 460.72H1416.92V463.83H1411.64ZM1311.28 457.61H1321.84V460.72H1311.28ZM1327.12 457.61H1342.97V460.72H1327.12ZM1401.07 457.61H1406.36V460.72H1401.07ZM1416.92 454.5H1422.2V457.61H1416.92ZM1427.48 454.5H1432.77V457.61H1427.48ZM1443.33 454.5H1448.61V457.61H1443.33ZM1469.74 454.5H1475.02V457.61H1469.74ZM1311.28 451.4H1327.12V454.5H1311.28ZM1332.41 451.4H1337.69V454.5H1332.41ZM1348.25 451.4H1353.54V454.5H1348.25ZM1358.82 451.4H1364.1V454.5H1358.82ZM1406.36 451.4H1411.64V454.5H1406.36ZM1306 448.29H1311.28V451.4H1306ZM1353.54 448.29H1358.82V451.4H1353.54ZM1379.95 448.29H1385.23V451.4H1379.95ZM1358.82 445.18H1369.38V448.29H1358.82ZM1321.84 442.07H1332.41V445.18H1321.84ZM1337.69 442.07H1353.54V445.18H1337.69ZM1364.1 442.07H1369.38V445.18H1364.1ZM1374.66 442.07H1379.95V445.18H1374.66ZM1390.51 442.07H1395.79V445.18H1390.51ZM1316.56 438.97H1321.84V442.07H1316.56ZM1332.41 438.97H1337.69V442.07H1332.41ZM1348.25 438.97H1369.38V442.07H1348.25ZM1374.66 438.97H1379.95V442.07H1374.66ZM1395.79 438.97H1401.07V442.07H1395.79ZM1295.43 435.86H1300.71V438.97H1295.43ZM1321.84 435.86H1327.12V438.97H1321.84ZM1342.97 435.86H1353.54V438.97H1342.97ZM1358.82 435.86H1364.1V438.97H1358.82ZM1316.56 432.75H1321.84V435.86H1316.56ZM1443.33 432.75H1448.61V435.86H1443.33ZM1311.28 429.64H1316.56V432.75H1311.28ZM1337.69 429.64H1342.97V432.75H1337.69ZM1358.82 429.64H1364.1V432.75H1358.82ZM1369.38 429.64H1374.66V432.75H1369.38ZM1427.48 429.64H1432.77V432.75H1427.48ZM1575.38 429.64H1580.66V432.75H1575.38ZM1316.56 426.53H1321.84V429.64H1316.56ZM1332.41 426.53H1342.97V429.64H1332.41ZM1348.25 426.53H1353.54V429.64H1348.25ZM1379.95 426.53H1385.23V429.64H1379.95ZM1390.51 426.53H1395.79V429.64H1390.51ZM1311.28 423.43H1316.56V426.53H1311.28ZM1321.84 423.43H1327.12V426.53H1321.84ZM1342.97 423.43H1348.25V426.53H1342.97ZM1321.84 420.32H1327.12V423.43H1321.84ZM1332.41 420.32H1342.97V423.43H1332.41ZM1348.25 420.32H1358.82V423.43H1348.25ZM1353.54 417.21H1358.82V420.32H1353.54ZM1316.56 414.1H1321.84V417.21H1316.56ZM1327.12 414.1H1332.41V417.21H1327.12ZM1337.69 414.1H1342.97V417.21H1337.69ZM1364.1 414.1H1369.38V417.21H1364.1ZM1406.36 414.1H1416.92V417.21H1406.36ZM1327.12 411H1332.41V414.1H1327.12ZM1348.25 411H1353.54V414.1H1348.25ZM1321.84 407.89H1332.41V411H1321.84ZM1342.97 407.89H1353.54V411H1342.97ZM1364.1 407.89H1369.38V411H1364.1ZM1438.05 407.89H1443.33V411H1438.05ZM1311.28 404.78H1321.84V407.89H1311.28ZM1379.95 404.78H1385.23V407.89H1379.95ZM1321.84 401.67H1332.41V404.78H1321.84ZM1342.97 401.67H1348.25V404.78H1342.97ZM1369.38 401.67H1374.66V404.78H1369.38ZM1390.51 401.67H1395.79V404.78H1390.51ZM1300.71 398.56H1306V401.67H1300.71ZM1401.07 398.56H1406.36V401.67H1401.07ZM1432.77 398.56H1438.05V401.67H1432.77ZM1311.28 395.46H1327.12V398.56H1311.28ZM1332.41 395.46H1342.97V398.56H1332.41ZM1358.82 395.46H1364.1V398.56H1358.82ZM1369.38 395.46H1374.66V398.56H1369.38ZM1300.71 392.35H1306V395.46H1300.71ZM1348.25 392.35H1353.54V395.46H1348.25ZM1316.56 389.24H1327.12V392.35H1316.56ZM1332.41 389.24H1337.69V392.35H1332.41ZM1342.97 389.24H1353.54V392.35H1342.97ZM1327.12 386.13H1332.41V389.24H1327.12ZM1348.25 386.13H1353.54V389.24H1348.25ZM1385.23 383.02H1390.51V386.13H1385.23ZM1633.48 383.02H1638.76V386.13H1633.48ZM1332.41 379.92H1358.82V383.03H1332.41ZM1364.1 379.92H1369.38V383.03H1364.1ZM1311.28 376.81H1321.84V379.92H1311.28ZM1332.41 376.81H1337.69V379.92H1332.41ZM1358.82 376.81H1369.38V379.92H1358.82ZM1438.05 376.81H1443.33V379.92H1438.05ZM1327.12 373.7H1342.97V376.81H1327.12ZM1364.1 373.7H1369.38V376.81H1364.1ZM1379.95 373.7H1385.23V376.81H1379.95ZM1406.36 373.7H1411.64V376.81H1406.36ZM1427.48 373.7H1432.77V376.81H1427.48ZM1306 370.59H1311.28V373.7H1306ZM1374.66 370.59H1385.23V373.7H1374.66ZM1496.15 370.59H1501.43V373.7H1496.15ZM1327.12 367.49H1342.97V370.59H1327.12ZM1348.25 367.49H1353.54V370.59H1348.25ZM1379.95 367.49H1385.23V370.59H1379.95ZM1438.05 367.49H1443.33V370.59H1438.05ZM1316.56 364.38H1321.84V367.49H1316.56ZM1348.25 364.38H1353.54V367.49H1348.25ZM1358.82 364.38H1364.1V367.49H1358.82ZM1374.66 364.38H1379.95V367.49H1374.66ZM1438.05 364.38H1443.33V367.49H1438.05ZM1818.35 364.38H1823.64V367.49H1818.35ZM1353.54 361.27H1358.82V364.38H1353.54ZM1448.61 361.27H1453.89V364.38H1448.61ZM1311.28 358.16H1316.56V361.27H1311.28ZM1348.25 358.16H1358.82V361.27H1348.25ZM1374.66 358.16H1379.95V361.27H1374.66ZM1321.84 355.05H1327.12V358.16H1321.84ZM1342.97 355.05H1348.25V358.16H1342.97ZM1369.38 355.05H1379.95V358.16H1369.38ZM1401.07 355.05H1406.36V358.16H1401.07ZM1300.71 351.95H1306V355.05H1300.71ZM1311.28 351.95H1316.56V355.05H1311.28ZM1332.41 351.95H1337.69V355.05H1332.41ZM1353.54 351.95H1358.82V355.05H1353.54ZM1369.38 351.95H1374.66V355.05H1369.38ZM1438.05 351.95H1443.33V355.05H1438.05ZM1316.56 348.84H1327.12V351.95H1316.56ZM1327.12 345.73H1332.41V348.84H1327.12ZM1342.97 345.73H1348.25V348.84H1342.97ZM1353.54 345.73H1358.82V348.84H1353.54ZM1411.64 345.73H1416.92V348.84H1411.64ZM1332.41 342.62H1337.69V345.73H1332.41ZM1348.25 342.62H1353.54V345.73H1348.25ZM1321.84 339.52H1327.12V342.62H1321.84ZM1332.41 339.52H1342.97V342.62H1332.41ZM1364.1 339.52H1369.38V342.62H1364.1ZM1311.28 336.41H1316.56V339.52H1311.28ZM1321.84 336.41H1327.12V339.52H1321.84ZM1332.41 336.41H1337.69V339.52H1332.41ZM1401.07 336.41H1406.36V339.52H1401.07ZM1311.28 333.3H1321.84V336.41H1311.28ZM1327.12 333.3H1332.41V336.41H1327.12ZM1337.69 333.3H1348.25V336.41H1337.69ZM1353.54 333.3H1358.82V336.41H1353.54ZM1316.56 330.19H1321.84V333.3H1316.56ZM1342.97 330.19H1353.54V333.3H1342.97ZM1385.23 330.19H1390.51V333.3H1385.23ZM1406.36 330.19H1411.64V333.3H1406.36ZM1311.28 327.08H1321.84V330.19H1311.28ZM1401.07 327.08H1406.36V330.19H1401.07ZM1422.2 327.08H1427.48V330.19H1422.2ZM1311.28 323.98H1316.56V327.08H1311.28ZM1321.84 323.98H1327.12V327.08H1321.84ZM1332.41 323.98H1337.69V327.08H1332.41ZM1342.97 323.98H1348.25V327.08H1342.97ZM1311.28 320.87H1321.84V323.98H1311.28ZM1332.41 320.87H1337.69V323.98H1332.41ZM1358.82 320.87H1364.1V323.98H1358.82ZM1390.51 320.87H1395.79V323.98H1390.51ZM1401.07 320.87H1406.36V323.98H1401.07ZM1300.71 317.76H1306V320.87H1300.71ZM1342.97 317.76H1353.54V320.87H1342.97ZM1390.51 317.76H1395.79V320.87H1390.51ZM1327.12 314.65H1332.41V317.76H1327.12ZM1337.69 314.65H1342.97V317.76H1337.69ZM1369.38 314.65H1374.66V317.76H1369.38ZM1443.33 314.65H1448.61V317.76H1443.33ZM1342.97 311.55H1348.25V314.65H1342.97ZM1295.43 308.44H1300.71V311.55H1295.43ZM1311.28 308.44H1321.84V311.55H1311.28ZM1332.41 308.44H1337.69V311.55H1332.41ZM1406.36 308.44H1411.64V311.55H1406.36ZM1306 305.33H1311.28V308.44H1306ZM1321.84 305.33H1332.41V308.44H1321.84ZM1438.05 305.33H1443.33V308.44H1438.05ZM1612.35 305.33H1617.64V308.44H1612.35ZM1332.41 302.22H1342.97V305.33H1332.41ZM1337.69 299.11H1342.97V302.22H1337.69ZM1348.25 299.11H1353.54V302.22H1348.25ZM1358.82 299.11H1364.1V302.22H1358.82ZM1443.33 299.11H1448.61V302.22H1443.33ZM1306 296.01H1321.84V299.11H1306ZM1332.41 296.01H1337.69V299.11H1332.41ZM1348.25 296.01H1358.82V299.11H1348.25ZM1379.95 296.01H1385.23V299.11H1379.95ZM1390.51 296.01H1395.79V299.11H1390.51ZM1337.69 292.9H1342.97V296.01H1337.69ZM1353.54 292.9H1358.82V296.01H1353.54ZM1379.95 292.9H1385.23V296.01H1379.95ZM1522.56 292.9H1527.84V296.01H1522.56ZM1332.41 289.79H1337.69V292.9H1332.41ZM1348.25 289.79H1353.54V292.9H1348.25ZM1374.66 289.79H1379.95V292.9H1374.66ZM1395.79 289.79H1406.36V292.9H1395.79ZM1311.28 286.68H1321.84V289.79H1311.28ZM1332.41 286.68H1337.69V289.79H1332.41ZM1353.54 286.68H1358.82V289.79H1353.54ZM1427.48 286.68H1432.77V289.79H1427.48ZM1290.15 283.58H1295.43V286.68H1290.15ZM1311.28 283.58H1316.56V286.68H1311.28ZM1337.69 283.58H1348.25V286.68H1337.69ZM1374.66 283.58H1379.95V286.68H1374.66ZM1332.41 280.47H1337.69V283.58H1332.41ZM1385.23 280.47H1395.79V283.58H1385.23ZM1401.07 280.47H1406.36V283.58H1401.07ZM1321.84 277.36H1327.12V280.47H1321.84ZM1332.41 277.36H1342.97V280.47H1332.41ZM1321.84 274.25H1327.12V277.36H1321.84ZM1348.25 274.25H1353.54V277.36H1348.25ZM1364.1 274.25H1369.38V277.36H1364.1ZM1295.43 271.14H1300.71V274.25H1295.43ZM1311.28 271.14H1316.56V274.25H1311.28ZM1358.82 271.14H1364.1V274.25H1358.82ZM1427.48 271.14H1432.77V274.25H1427.48ZM1327.12 268.04H1337.69V271.14H1327.12ZM1395.79 268.04H1401.07V271.14H1395.79ZM1427.48 268.04H1432.77V271.14H1427.48ZM1311.28 264.93H1316.56V268.04H1311.28ZM1327.12 264.93H1332.41V268.04H1327.12ZM1348.25 264.93H1353.54V268.04H1348.25ZM1390.51 264.93H1395.79V268.04H1390.51ZM1406.36 264.93H1411.64V268.04H1406.36ZM1295.43 261.82H1311.28V264.93H1295.43ZM1316.56 261.82H1327.12V264.93H1316.56ZM1332.41 261.82H1337.69V264.93H1332.41ZM1348.25 261.82H1353.54V264.93H1348.25ZM1358.82 261.82H1364.1V264.93H1358.82ZM1401.07 261.82H1406.36V264.93H1401.07ZM1284.87 258.71H1290.15V261.82H1284.87ZM1327.12 258.71H1332.41V261.82H1327.12ZM1337.69 258.71H1342.97V261.82H1337.69ZM1295.43 255.6H1300.71V258.71H1295.43ZM1306 255.6H1316.56V258.71H1306ZM1332.41 255.6H1342.97V258.71H1332.41ZM1348.25 255.6H1353.54V258.71H1348.25ZM1284.87 252.5H1290.15V255.6H1284.87ZM1406.36 252.5H1411.64V255.6H1406.36ZM1290.15 249.39H1295.43V252.5H1290.15ZM1321.84 249.39H1342.97V252.5H1321.84ZM1379.95 249.39H1390.51V252.5H1379.95ZM1401.07 249.39H1406.36V252.5H1401.07ZM1295.43 246.28H1316.56V249.39H1295.43ZM1279.59 243.17H1290.15V246.28H1279.59ZM1300.71 243.17H1306V246.28H1300.71ZM1327.12 243.17H1332.41V246.28H1327.12ZM1279.59 240.07H1290.15V243.17H1279.59ZM1327.12 240.07H1337.69V243.17H1327.12ZM1364.1 240.07H1369.38V243.17H1364.1ZM1284.87 236.96H1290.15V240.07H1284.87ZM1311.28 236.96H1316.56V240.07H1311.28ZM1321.84 236.96H1327.12V240.07H1321.84ZM1332.41 236.96H1337.69V240.07H1332.41ZM1279.59 233.85H1284.87V236.96H1279.59ZM1306 233.85H1311.28V236.96H1306ZM1411.64 233.85H1416.92V236.96H1411.64ZM1300.71 230.74H1306V233.85H1300.71ZM1321.84 230.74H1337.69V233.85H1321.84ZM1342.97 230.74H1348.25V233.85H1342.97ZM1422.2 230.74H1432.77V233.85H1422.2ZM1306 227.63H1311.28V230.74H1306ZM1327.12 227.63H1332.41V230.74H1327.12ZM1342.97 227.63H1348.25V230.74H1342.97ZM1374.66 227.63H1379.95V230.74H1374.66ZM1390.51 227.63H1395.79V230.74H1390.51ZM1295.43 224.53H1311.28V227.63H1295.43ZM1316.56 224.53H1321.84V227.63H1316.56ZM1327.12 224.53H1332.41V227.63H1327.12ZM1348.25 224.53H1353.54V227.63H1348.25ZM1163.38 221.42H1168.66V224.53H1163.38ZM1295.43 221.42H1300.71V224.53H1295.43ZM1306 221.42H1311.28V224.53H1306ZM1332.41 221.42H1337.69V224.53H1332.41ZM1158.1 218.31H1168.66V221.42H1158.1ZM1290.15 218.31H1300.71V221.42H1290.15ZM1306 218.31H1311.28V221.42H1306ZM1158.1 215.2H1163.38V218.31H1158.1ZM1269.02 215.2H1274.3V218.31H1269.02ZM1311.28 215.2H1316.56V218.31H1311.28ZM1364.1 215.2H1369.38V218.31H1364.1ZM1158.1 212.1H1168.66V215.2H1158.1ZM1263.74 212.1H1274.3V215.2H1263.74ZM1279.59 212.1H1284.87V215.2H1279.59ZM1290.15 212.1H1300.71V215.2H1290.15ZM1306 212.1H1311.28V215.2H1306ZM1374.66 212.1H1385.23V215.2H1374.66ZM1274.3 208.99H1290.15V212.1H1274.3ZM1295.43 208.99H1300.71V212.1H1295.43ZM1364.1 208.99H1369.38V212.1H1364.1ZM1374.66 208.99H1379.95V212.1H1374.66ZM1401.07 208.99H1406.36V212.1H1401.07ZM1263.74 205.88H1274.3V208.99H1263.74ZM1279.59 205.88H1284.87V208.99H1279.59ZM1327.12 205.88H1332.41V208.99H1327.12ZM1158.1 202.77H1168.66V205.88H1158.1ZM1179.23 202.77H1184.51V205.88H1179.23ZM1258.46 202.77H1269.02V205.88H1258.46ZM1279.59 202.77H1300.71V205.88H1279.59ZM1168.66 199.66H1173.95V202.77H1168.66ZM1232.05 199.66H1237.33V202.77H1232.05ZM1258.46 199.66H1263.74V202.77H1258.46ZM1269.02 199.66H1274.3V202.77H1269.02ZM1284.87 199.66H1290.15V202.77H1284.87ZM1173.95 196.56H1179.23V199.66H1173.95ZM1189.79 196.56H1205.64V199.66H1189.79ZM1216.2 196.56H1221.48V199.66H1216.2ZM1263.74 196.56H1269.02V199.66H1263.74ZM1274.3 196.56H1279.59V199.66H1274.3ZM1369.38 196.56H1374.66V199.66H1369.38ZM1158.1 193.45H1163.38V196.56H1158.1ZM1173.95 193.45H1184.51V196.56H1173.95ZM1195.07 193.45H1200.36V196.56H1195.07ZM1237.33 193.45H1242.61V196.56H1237.33ZM1300.71 193.45H1306V196.56H1300.71ZM1332.41 193.45H1337.69V196.56H1332.41ZM1173.95 190.34H1189.79V193.45H1173.95ZM1195.07 190.34H1200.36V193.45H1195.07ZM1226.77 190.34H1232.05V193.45H1226.77ZM1237.33 190.34H1242.61V193.45H1237.33ZM1306 190.34H1311.28V193.45H1306ZM1168.66 187.23H1173.95V190.34H1168.66ZM1179.23 187.23H1184.51V190.34H1179.23ZM1200.36 187.23H1205.64V190.34H1200.36ZM1158.1 184.13H1163.38V187.23H1158.1ZM1184.51 184.13H1195.07V187.23H1184.51ZM1210.92 184.13H1216.2V187.23H1210.92ZM1247.89 184.13H1253.18V187.23H1247.89Z"/><path fill="#1064dc" d="M1321.84 529.09H1337.69V532.2H1321.84ZM1342.97 529.09H1348.25V532.2H1342.97ZM1300.71 525.98H1311.28V529.09H1300.71ZM1321.84 525.98H1327.12V529.09H1321.84ZM1332.41 525.98H1342.97V529.09H1332.41ZM1290.15 522.88H1300.71V525.98H1290.15ZM1311.28 522.88H1321.84V525.98H1311.28ZM1327.12 522.88H1332.41V525.98H1327.12ZM1279.59 519.77H1284.87V522.88H1279.59ZM1311.28 519.77H1316.56V522.88H1311.28ZM1327.12 519.77H1337.69V522.88H1327.12ZM1300.71 516.66H1306V519.77H1300.71ZM1311.28 516.66H1316.56V519.77H1311.28ZM1321.84 516.66H1327.12V519.77H1321.84ZM1284.87 513.55H1295.43V516.66H1284.87ZM1300.71 513.55H1321.84V516.66H1300.71ZM1332.41 513.55H1337.69V516.66H1332.41ZM1290.15 510.45H1311.28V513.55H1290.15ZM1316.56 510.45H1321.84V513.55H1316.56ZM1327.12 510.45H1332.41V513.55H1327.12ZM1337.69 510.45H1342.97V513.55H1337.69ZM1295.43 507.34H1300.71V510.45H1295.43ZM1327.12 507.34H1332.41V510.45H1327.12ZM1295.43 504.23H1306V507.34H1295.43ZM1311.28 504.23H1316.56V507.34H1311.28ZM1327.12 504.23H1332.41V507.34H1327.12ZM1290.15 501.12H1295.43V504.23H1290.15ZM1316.56 501.12H1321.84V504.23H1316.56ZM1327.12 501.12H1332.41V504.23H1327.12ZM1295.43 498.01H1306V501.12H1295.43ZM1311.28 498.01H1321.84V501.12H1311.28ZM1295.43 494.91H1311.28V498.01H1295.43ZM1348.25 494.91H1353.54V498.01H1348.25ZM1290.15 491.8H1295.43V494.91H1290.15ZM1300.71 491.8H1306V494.91H1300.71ZM1311.28 491.8H1327.12V494.91H1311.28ZM1369.38 491.8H1374.66V494.91H1369.38ZM1279.59 488.69H1284.87V491.8H1279.59ZM1290.15 488.69H1311.28V491.8H1290.15ZM1337.69 488.69H1342.97V491.8H1337.69ZM1295.43 485.58H1306V488.69H1295.43ZM1311.28 485.58H1321.84V488.69H1311.28ZM1327.12 485.58H1337.69V488.69H1327.12ZM1353.54 485.58H1358.82V488.69H1353.54ZM1295.43 482.48H1311.28V485.58H1295.43ZM1327.12 482.48H1337.69V485.58H1327.12ZM1300.71 479.37H1327.12V482.48H1300.71ZM1284.87 476.26H1295.43V479.37H1284.87ZM1300.71 476.26H1306V479.37H1300.71ZM1316.56 476.26H1321.84V479.37H1316.56ZM1327.12 476.26H1337.69V479.37H1327.12ZM1300.71 473.15H1311.28V476.26H1300.71ZM1316.56 473.15H1321.84V476.26H1316.56ZM1348.25 473.15H1353.54V476.26H1348.25ZM1295.43 470.04H1306V473.15H1295.43ZM1316.56 470.04H1337.69V473.15H1316.56ZM1295.43 466.94H1300.71V470.04H1295.43ZM1306 466.94H1316.56V470.04H1306ZM1300.71 463.83H1316.56V466.94H1300.71ZM1290.15 460.72H1306V463.83H1290.15ZM1311.28 460.72H1321.84V463.83H1311.28ZM1306 457.61H1311.28V460.72H1306ZM1321.84 457.61H1327.12V460.72H1321.84ZM1300.71 454.5H1321.84V457.61H1300.71ZM1327.12 454.5H1337.69V457.61H1327.12ZM1358.82 454.5H1364.1V457.61H1358.82ZM1290.15 451.4H1300.71V454.5H1290.15ZM1306 451.4H1311.28V454.5H1306ZM1311.28 448.29H1316.56V451.4H1311.28ZM1321.84 448.29H1327.12V451.4H1321.84ZM1358.82 448.29H1364.1V451.4H1358.82ZM1295.43 445.18H1306V448.29H1295.43ZM1311.28 445.18H1327.12V448.29H1311.28ZM1332.41 445.18H1337.69V448.29H1332.41ZM1306 442.07H1321.84V445.18H1306ZM1353.54 442.07H1358.82V445.18H1353.54ZM1300.71 438.97H1316.56V442.07H1300.71ZM1327.12 438.97H1332.41V442.07H1327.12ZM1342.97 438.97H1348.25V442.07H1342.97ZM1300.71 435.86H1316.56V438.97H1300.71ZM1332.41 435.86H1337.69V438.97H1332.41ZM1300.71 429.64H1311.28V432.75H1300.71ZM1321.84 429.64H1327.12V432.75H1321.84ZM1332.41 429.64H1337.69V432.75H1332.41ZM1300.71 426.53H1311.28V429.64H1300.71ZM1321.84 426.53H1332.41V429.64H1321.84ZM1300.71 423.43H1311.28V426.53H1300.71ZM1316.56 423.43H1321.84V426.53H1316.56ZM1327.12 423.43H1337.69V426.53H1327.12ZM1290.15 420.32H1311.28V423.43H1290.15ZM1316.56 420.32H1321.84V423.43H1316.56ZM1342.97 420.32H1348.25V423.43H1342.97ZM1311.28 417.21H1327.12V420.32H1311.28ZM1332.41 417.21H1337.69V420.32H1332.41ZM1342.97 417.21H1348.25V420.32H1342.97ZM1306 414.1H1316.56V417.21H1306ZM1321.84 414.1H1327.12V417.21H1321.84ZM1306 411H1316.56V414.1H1306ZM1300.71 407.89H1316.56V411H1300.71ZM1332.41 407.89H1342.97V411H1332.41ZM1306 404.78H1311.28V407.89H1306ZM1321.84 404.78H1332.41V407.89H1321.84ZM1306 401.67H1321.84V404.78H1306ZM1332.41 401.67H1337.69V404.78H1332.41ZM1311.28 398.56H1342.97V401.67H1311.28ZM1295.43 395.46H1311.28V398.56H1295.43ZM1327.12 395.46H1332.41V398.56H1327.12ZM1342.97 395.46H1348.25V398.56H1342.97ZM1306 392.35H1321.84V395.46H1306ZM1327.12 392.35H1337.69V395.46H1327.12ZM1306 389.24H1316.56V392.35H1306ZM1295.43 386.13H1311.28V389.24H1295.43ZM1321.84 386.13H1327.12V389.24H1321.84ZM1337.69 386.13H1342.97V389.24H1337.69ZM1300.71 383.02H1306V386.13H1300.71ZM1311.28 383.02H1332.41V386.13H1311.28ZM1342.97 383.02H1348.25V386.13H1342.97ZM1306 379.92H1327.12V383.03H1306ZM1385.23 379.92H1390.51V383.03H1385.23ZM1300.71 376.81H1311.28V379.92H1300.71ZM1327.12 376.81H1332.41V379.92H1327.12ZM1290.15 373.7H1295.43V376.81H1290.15ZM1306 373.7H1327.12V376.81H1306ZM1342.97 373.7H1348.25V376.81H1342.97ZM1295.43 370.59H1300.71V373.7H1295.43ZM1311.28 370.59H1321.84V373.7H1311.28ZM1306 367.49H1327.12V370.59H1306ZM1295.43 364.38H1316.56V367.49H1295.43ZM1327.12 364.38H1332.41V367.49H1327.12ZM1306 361.27H1332.41V364.38H1306ZM1342.97 361.27H1348.25V364.38H1342.97ZM1295.43 358.16H1300.71V361.27H1295.43ZM1306 358.16H1311.28V361.27H1306ZM1316.56 358.16H1332.41V361.27H1316.56ZM1290.15 355.05H1321.84V358.16H1290.15ZM1327.12 355.05H1332.41V358.16H1327.12ZM1337.69 355.05H1342.97V358.16H1337.69ZM1295.43 351.95H1300.71V355.05H1295.43ZM1316.56 351.95H1327.12V355.05H1316.56ZM1348.25 351.95H1353.54V355.05H1348.25ZM1295.43 348.84H1316.56V351.95H1295.43ZM1348.25 348.84H1353.54V351.95H1348.25ZM1364.1 348.84H1369.38V351.95H1364.1ZM1295.43 345.73H1311.28V348.84H1295.43ZM1316.56 345.73H1327.12V348.84H1316.56ZM1348.25 345.73H1353.54V348.84H1348.25ZM1300.71 342.62H1306V345.73H1300.71ZM1311.28 342.62H1327.12V345.73H1311.28ZM1369.38 342.62H1374.66V345.73H1369.38ZM1290.15 339.52H1295.43V342.62H1290.15ZM1300.71 339.52H1311.28V342.62H1300.71ZM1316.56 339.52H1321.84V342.62H1316.56ZM1327.12 339.52H1332.41V342.62H1327.12ZM1300.71 336.41H1306V339.52H1300.71ZM1316.56 336.41H1321.84V339.52H1316.56ZM1300.71 333.3H1306V336.41H1300.71ZM1332.41 333.3H1337.69V336.41H1332.41ZM1300.71 330.19H1316.56V333.3H1300.71ZM1327.12 330.19H1332.41V333.3H1327.12ZM1300.71 327.08H1306V330.19H1300.71ZM1332.41 327.08H1337.69V330.19H1332.41ZM1316.56 323.98H1321.84V327.08H1316.56ZM1327.12 323.98H1332.41V327.08H1327.12ZM1353.54 323.98H1358.82V327.08H1353.54ZM1284.87 320.87H1290.15V323.98H1284.87ZM1306 320.87H1311.28V323.98H1306ZM1321.84 320.87H1327.12V323.98H1321.84ZM1306 317.76H1321.84V320.87H1306ZM1327.12 317.76H1332.41V320.87H1327.12ZM1295.43 314.65H1300.71V317.76H1295.43ZM1306 314.65H1327.12V317.76H1306ZM1348.25 314.65H1358.82V317.76H1348.25ZM1295.43 311.55H1306V314.65H1295.43ZM1311.28 311.55H1337.69V314.65H1311.28ZM1300.71 308.44H1311.28V311.55H1300.71ZM1321.84 308.44H1332.41V311.55H1321.84ZM1295.43 305.33H1306V308.44H1295.43ZM1332.41 305.33H1337.69V308.44H1332.41ZM1290.15 302.22H1295.43V305.33H1290.15ZM1306 302.22H1311.28V305.33H1306ZM1316.56 302.22H1321.84V305.33H1316.56ZM1284.87 299.11H1290.15V302.22H1284.87ZM1300.71 299.11H1321.84V302.22H1300.71ZM1295.43 296.01H1306V299.11H1295.43ZM1321.84 296.01H1332.41V299.11H1321.84ZM1337.69 296.01H1342.97V299.11H1337.69ZM1284.87 292.9H1300.71V296.01H1284.87ZM1306 292.9H1332.41V296.01H1306ZM1284.87 289.79H1290.15V292.9H1284.87ZM1295.43 289.79H1327.12V292.9H1295.43ZM1295.43 286.68H1311.28V289.79H1295.43ZM1321.84 286.68H1327.12V289.79H1321.84ZM1379.95 286.68H1385.23V289.79H1379.95ZM1300.71 283.58H1311.28V286.68H1300.71ZM1316.56 283.58H1321.84V286.68H1316.56ZM1369.38 283.58H1374.66V286.68H1369.38ZM1284.87 280.47H1306V283.58H1284.87ZM1316.56 280.47H1327.12V283.58H1316.56ZM1284.87 277.36H1290.15V280.47H1284.87ZM1295.43 277.36H1306V280.47H1295.43ZM1311.28 277.36H1321.84V280.47H1311.28ZM1290.15 274.25H1311.28V277.36H1290.15ZM1316.56 274.25H1321.84V277.36H1316.56ZM1358.82 274.25H1364.1V277.36H1358.82ZM1290.15 271.14H1295.43V274.25H1290.15ZM1300.71 271.14H1311.28V274.25H1300.71ZM1316.56 271.14H1321.84V274.25H1316.56ZM1327.12 271.14H1332.41V274.25H1327.12ZM1337.69 271.14H1342.97V274.25H1337.69ZM1279.59 268.04H1300.71V271.14H1279.59ZM1306 268.04H1316.56V271.14H1306ZM1401.07 268.04H1406.36V271.14H1401.07ZM1284.87 264.93H1311.28V268.04H1284.87ZM1321.84 264.93H1327.12V268.04H1321.84ZM1284.87 261.82H1295.43V264.93H1284.87ZM1279.59 258.71H1284.87V261.82H1279.59ZM1290.15 258.71H1311.28V261.82H1290.15ZM1358.82 258.71H1364.1V261.82H1358.82ZM1274.3 255.6H1290.15V258.71H1274.3ZM1300.71 255.6H1306V258.71H1300.71ZM1316.56 255.6H1321.84V258.71H1316.56ZM1279.59 252.5H1284.87V255.6H1279.59ZM1290.15 252.5H1300.71V255.6H1290.15ZM1316.56 252.5H1321.84V255.6H1316.56ZM1295.43 249.39H1311.28V252.5H1295.43ZM1279.59 246.28H1295.43V249.39H1279.59ZM1321.84 246.28H1327.12V249.39H1321.84ZM1337.69 246.28H1342.97V249.39H1337.69ZM1158.1 243.17H1163.38V246.28H1158.1ZM1274.3 243.17H1279.59V246.28H1274.3ZM1290.15 243.17H1300.71V246.28H1290.15ZM1311.28 243.17H1321.84V246.28H1311.28ZM1269.02 240.07H1279.59V243.17H1269.02ZM1290.15 240.07H1316.56V243.17H1290.15ZM1158.1 236.96H1163.38V240.07H1158.1ZM1274.3 236.96H1284.87V240.07H1274.3ZM1295.43 236.96H1306V240.07H1295.43ZM1316.56 236.96H1321.84V240.07H1316.56ZM1337.69 236.96H1342.97V240.07H1337.69ZM1158.1 233.85H1163.38V236.96H1158.1ZM1269.02 233.85H1274.3V236.96H1269.02ZM1290.15 233.85H1295.43V236.96H1290.15ZM1316.56 233.85H1321.84V236.96H1316.56ZM1158.1 230.74H1163.38V233.85H1158.1ZM1263.74 230.74H1269.02V233.85H1263.74ZM1279.59 230.74H1295.43V233.85H1279.59ZM1158.1 227.63H1168.66V230.74H1158.1ZM1258.46 227.63H1263.74V230.74H1258.46ZM1269.02 227.63H1274.3V230.74H1269.02ZM1295.43 227.63H1300.71V230.74H1295.43ZM1316.56 227.63H1321.84V230.74H1316.56ZM1269.02 224.53H1279.59V227.63H1269.02ZM1337.69 224.53H1342.97V227.63H1337.69ZM1258.46 221.42H1263.74V224.53H1258.46ZM1269.02 221.42H1290.15V224.53H1269.02ZM1300.71 221.42H1306V224.53H1300.71ZM1247.89 218.31H1253.18V221.42H1247.89ZM1263.74 218.31H1279.59V221.42H1263.74ZM1284.87 218.31H1290.15V221.42H1284.87ZM1300.71 218.31H1306V221.42H1300.71ZM1247.89 215.2H1253.18V218.31H1247.89ZM1263.74 215.2H1269.02V218.31H1263.74ZM1274.3 215.2H1279.59V218.31H1274.3ZM1253.18 212.1H1258.46V215.2H1253.18ZM1274.3 212.1H1279.59V215.2H1274.3ZM1163.38 208.99H1168.66V212.1H1163.38ZM1237.33 208.99H1258.46V212.1H1237.33ZM1269.02 208.99H1274.3V212.1H1269.02ZM1226.77 205.88H1237.33V208.99H1226.77ZM1242.61 205.88H1263.74V208.99H1242.61ZM1168.66 202.77H1173.95V205.88H1168.66ZM1184.51 202.77H1189.79V205.88H1184.51ZM1200.36 202.77H1205.64V205.88H1200.36ZM1221.48 202.77H1226.77V205.88H1221.48ZM1242.61 202.77H1253.18V205.88H1242.61ZM1269.02 202.77H1274.3V205.88H1269.02ZM1173.95 199.66H1205.64V202.77H1173.95ZM1216.2 199.66H1232.05V202.77H1216.2ZM1237.33 199.66H1253.18V202.77H1237.33ZM1295.43 199.66H1300.71V202.77H1295.43ZM1306 199.66H1316.56V202.77H1306ZM1184.51 196.56H1189.79V199.66H1184.51ZM1205.64 196.56H1210.92V199.66H1205.64ZM1221.48 196.56H1232.05V199.66H1221.48Z"/><path fill="#1272d9" d="M1295.43 529.09H1306V532.2H1295.43ZM1311.28 529.09H1321.84V532.2H1311.28ZM1290.15 525.98H1300.71V529.09H1290.15ZM1311.28 525.98H1316.56V529.09H1311.28ZM1300.71 522.88H1306V525.98H1300.71ZM1284.87 519.77H1300.71V522.88H1284.87ZM1279.59 516.66H1295.43V519.77H1279.59ZM1306 516.66H1311.28V519.77H1306ZM1279.59 513.55H1284.87V516.66H1279.59ZM1295.43 513.55H1300.71V516.66H1295.43ZM1274.3 510.45H1290.15V513.55H1274.3ZM1279.59 507.34H1290.15V510.45H1279.59ZM1300.71 507.34H1306V510.45H1300.71ZM1274.3 504.23H1295.43V507.34H1274.3ZM1321.84 504.23H1327.12V507.34H1321.84ZM1279.59 501.12H1290.15V504.23H1279.59ZM1295.43 501.12H1300.71V504.23H1295.43ZM1274.3 498.01H1295.43V501.12H1274.3ZM1279.59 494.91H1295.43V498.01H1279.59ZM1274.3 491.8H1279.59V494.91H1274.3ZM1284.87 491.8H1290.15V494.91H1284.87ZM1295.43 491.8H1300.71V494.91H1295.43ZM1284.87 488.69H1290.15V491.8H1284.87ZM1284.87 485.58H1295.43V488.69H1284.87ZM1279.59 482.48H1295.43V485.58H1279.59ZM1284.87 479.37H1300.71V482.48H1284.87ZM1279.59 476.26H1284.87V479.37H1279.59ZM1295.43 476.26H1300.71V479.37H1295.43ZM1274.3 473.15H1300.71V476.26H1274.3ZM1279.59 470.04H1295.43V473.15H1279.59ZM1274.3 466.94H1295.43V470.04H1274.3ZM1300.71 466.94H1306V470.04H1300.71ZM1274.3 463.83H1279.59V466.94H1274.3ZM1284.87 463.83H1295.43V466.94H1284.87ZM1274.3 460.72H1290.15V463.83H1274.3ZM1306 460.72H1311.28V463.83H1306ZM1284.87 457.61H1306V460.72H1284.87ZM1284.87 454.5H1300.71V457.61H1284.87ZM1284.87 451.4H1290.15V454.5H1284.87ZM1300.71 451.4H1306V454.5H1300.71ZM1279.59 448.29H1300.71V451.4H1279.59ZM1279.59 445.18H1284.87V448.29H1279.59ZM1290.15 445.18H1295.43V448.29H1290.15ZM1306 445.18H1311.28V448.29H1306ZM1279.59 442.07H1284.87V445.18H1279.59ZM1290.15 442.07H1306V445.18H1290.15ZM1284.87 438.97H1300.71V442.07H1284.87ZM1321.84 438.97H1327.12V442.07H1321.84ZM1279.59 435.86H1295.43V438.97H1279.59ZM1284.87 432.75H1316.56V435.86H1284.87ZM1279.59 429.64H1300.71V432.75H1279.59ZM1316.56 429.64H1321.84V432.75H1316.56ZM1284.87 426.53H1300.71V429.64H1284.87ZM1311.28 426.53H1316.56V429.64H1311.28ZM1284.87 423.43H1300.71V426.53H1284.87ZM1279.59 420.32H1290.15V423.43H1279.59ZM1311.28 420.32H1316.56V423.43H1311.28ZM1284.87 417.21H1311.28V420.32H1284.87ZM1284.87 414.1H1306V417.21H1284.87ZM1284.87 411H1306V414.1H1284.87ZM1279.59 407.89H1300.71V411H1279.59ZM1284.87 404.78H1306V407.89H1284.87ZM1284.87 401.67H1306V404.78H1284.87ZM1284.87 398.56H1300.71V401.67H1284.87ZM1306 398.56H1311.28V401.67H1306ZM1284.87 395.46H1295.43V398.56H1284.87ZM1284.87 392.35H1300.71V395.46H1284.87ZM1279.59 389.24H1284.87V392.35H1279.59ZM1290.15 389.24H1306V392.35H1290.15ZM1279.59 386.13H1284.87V389.24H1279.59ZM1290.15 386.13H1295.43V389.24H1290.15ZM1284.87 383.02H1300.71V386.13H1284.87ZM1306 383.02H1311.28V386.13H1306ZM1284.87 379.92H1306V383.03H1284.87ZM1290.15 376.81H1300.71V379.92H1290.15ZM1321.84 376.81H1327.12V379.92H1321.84ZM1279.59 373.7H1284.87V376.81H1279.59ZM1295.43 373.7H1306V376.81H1295.43ZM1290.15 370.59H1295.43V373.7H1290.15ZM1300.71 370.59H1306V373.7H1300.71ZM1279.59 367.49H1290.15V370.59H1279.59ZM1295.43 367.49H1306V370.59H1295.43ZM1284.87 364.38H1295.43V367.49H1284.87ZM1284.87 361.27H1306V364.38H1284.87ZM1284.87 358.16H1295.43V361.27H1284.87ZM1300.71 358.16H1306V361.27H1300.71ZM1284.87 355.05H1290.15V358.16H1284.87ZM1279.59 351.95H1290.15V355.05H1279.59ZM1306 351.95H1311.28V355.05H1306ZM1284.87 348.84H1295.43V351.95H1284.87ZM1284.87 345.73H1295.43V348.84H1284.87ZM1311.28 345.73H1316.56V348.84H1311.28ZM1284.87 342.62H1300.71V345.73H1284.87ZM1306 342.62H1311.28V345.73H1306ZM1295.43 339.52H1300.71V342.62H1295.43ZM1274.3 336.41H1279.59V339.52H1274.3ZM1284.87 336.41H1300.71V339.52H1284.87ZM1306 336.41H1311.28V339.52H1306ZM1279.59 333.3H1300.71V336.41H1279.59ZM1306 333.3H1311.28V336.41H1306ZM1321.84 333.3H1327.12V336.41H1321.84ZM1279.59 330.19H1300.71V333.3H1279.59ZM1284.87 327.08H1300.71V330.19H1284.87ZM1321.84 327.08H1327.12V330.19H1321.84ZM1284.87 323.98H1311.28V327.08H1284.87ZM1274.3 320.87H1284.87V323.98H1274.3ZM1290.15 320.87H1306V323.98H1290.15ZM1284.87 317.76H1300.71V320.87H1284.87ZM1284.87 314.65H1295.43V317.76H1284.87ZM1300.71 314.65H1306V317.76H1300.71ZM1284.87 311.55H1295.43V314.65H1284.87ZM1306 311.55H1311.28V314.65H1306ZM1284.87 308.44H1295.43V311.55H1284.87ZM1279.59 305.33H1295.43V308.44H1279.59ZM1279.59 302.22H1290.15V305.33H1279.59ZM1295.43 302.22H1306V305.33H1295.43ZM1279.59 299.11H1284.87V302.22H1279.59ZM1290.15 299.11H1300.71V302.22H1290.15ZM1279.59 296.01H1295.43V299.11H1279.59ZM1274.3 292.9H1284.87V296.01H1274.3ZM1300.71 292.9H1306V296.01H1300.71ZM1279.59 289.79H1284.87V292.9H1279.59ZM1290.15 289.79H1295.43V292.9H1290.15ZM1274.3 286.68H1295.43V289.79H1274.3ZM1158.1 283.58H1163.38V286.68H1158.1ZM1279.59 283.58H1290.15V286.68H1279.59ZM1295.43 283.58H1300.71V286.68H1295.43ZM1274.3 280.47H1284.87V283.58H1274.3ZM1306 280.47H1311.28V283.58H1306ZM1158.1 277.36H1163.38V280.47H1158.1ZM1274.3 277.36H1284.87V280.47H1274.3ZM1290.15 277.36H1295.43V280.47H1290.15ZM1269.02 274.25H1290.15V277.36H1269.02ZM1284.87 271.14H1290.15V274.25H1284.87ZM1274.3 268.04H1279.59V271.14H1274.3ZM1300.71 268.04H1306V271.14H1300.71ZM1158.1 264.93H1163.38V268.04H1158.1ZM1274.3 264.93H1284.87V268.04H1274.3ZM1269.02 261.82H1284.87V264.93H1269.02ZM1158.1 258.71H1163.38V261.82H1158.1ZM1274.3 258.71H1279.59V261.82H1274.3ZM1269.02 255.6H1274.3V258.71H1269.02ZM1290.15 255.6H1295.43V258.71H1290.15ZM1158.1 252.5H1163.38V255.6H1158.1ZM1269.02 252.5H1279.59V255.6H1269.02ZM1258.46 249.39H1279.59V252.5H1258.46ZM1284.87 249.39H1290.15V252.5H1284.87ZM1158.1 246.28H1163.38V249.39H1158.1ZM1263.74 246.28H1279.59V249.39H1263.74ZM1258.46 243.17H1274.3V246.28H1258.46ZM1158.1 240.07H1168.66V243.17H1158.1ZM1258.46 240.07H1269.02V243.17H1258.46ZM1163.38 236.96H1168.66V240.07H1163.38ZM1258.46 236.96H1274.3V240.07H1258.46ZM1163.38 233.85H1168.66V236.96H1163.38ZM1247.89 233.85H1269.02V236.96H1247.89ZM1274.3 233.85H1279.59V236.96H1274.3ZM1163.38 230.74H1168.66V233.85H1163.38ZM1253.18 230.74H1263.74V233.85H1253.18ZM1269.02 230.74H1279.59V233.85H1269.02ZM1242.61 227.63H1258.46V230.74H1242.61ZM1263.74 227.63H1269.02V230.74H1263.74ZM1274.3 227.63H1279.59V230.74H1274.3ZM1163.38 224.53H1168.66V227.63H1163.38ZM1247.89 224.53H1269.02V227.63H1247.89ZM1232.05 221.42H1237.33V224.53H1232.05ZM1242.61 221.42H1258.46V224.53H1242.61ZM1263.74 221.42H1269.02V224.53H1263.74ZM1168.66 218.31H1173.95V221.42H1168.66ZM1237.33 218.31H1247.89V221.42H1237.33ZM1253.18 218.31H1263.74V221.42H1253.18ZM1163.38 215.2H1173.95V218.31H1163.38ZM1216.2 215.2H1247.89V218.31H1216.2ZM1253.18 215.2H1263.74V218.31H1253.18ZM1168.66 212.1H1179.23V215.2H1168.66ZM1184.51 212.1H1189.79V215.2H1184.51ZM1216.2 212.1H1253.18V215.2H1216.2ZM1258.46 212.1H1263.74V215.2H1258.46ZM1168.66 208.99H1173.95V212.1H1168.66ZM1179.23 208.99H1195.07V212.1H1179.23ZM1200.36 208.99H1205.64V212.1H1200.36ZM1210.92 208.99H1237.33V212.1H1210.92ZM1258.46 208.99H1263.74V212.1H1258.46ZM1168.66 205.88H1195.07V208.99H1168.66ZM1200.36 205.88H1226.77V208.99H1200.36ZM1237.33 205.88H1242.61V208.99H1237.33ZM1173.95 202.77H1179.23V205.88H1173.95ZM1189.79 202.77H1200.36V205.88H1189.79ZM1205.64 202.77H1221.48V205.88H1205.64ZM1226.77 202.77H1232.05V205.88H1226.77ZM1237.33 202.77H1242.61V205.88H1237.33ZM1205.64 199.66H1210.92V202.77H1205.64Z"/><path fill="#1481d6" d="M1290.15 529.09H1295.43V532.2H1290.15ZM1306 529.09H1311.28V532.2H1306ZM1279.59 525.98H1290.15V529.09H1279.59ZM1269.02 522.88H1290.15V525.98H1269.02ZM1269.02 519.77H1279.59V522.88H1269.02ZM1263.74 516.66H1279.59V519.77H1263.74ZM1263.74 513.55H1279.59V516.66H1263.74ZM1263.74 510.45H1274.3V513.55H1263.74ZM1263.74 507.34H1279.59V510.45H1263.74ZM1258.46 504.23H1274.3V507.34H1258.46ZM1258.46 501.12H1279.59V504.23H1258.46ZM1269.02 498.01H1274.3V501.12H1269.02ZM1263.74 494.91H1279.59V498.01H1263.74ZM1263.74 491.8H1274.3V494.91H1263.74ZM1279.59 491.8H1284.87V494.91H1279.59ZM1263.74 488.69H1279.59V491.8H1263.74ZM1269.02 485.58H1284.87V488.69H1269.02ZM1263.74 482.48H1279.59V485.58H1263.74ZM1263.74 479.37H1284.87V482.48H1263.74ZM1263.74 476.26H1279.59V479.37H1263.74ZM1269.02 473.15H1274.3V476.26H1269.02ZM1263.74 470.04H1279.59V473.15H1263.74ZM1269.02 466.94H1274.3V470.04H1269.02ZM1269.02 463.83H1274.3V466.94H1269.02ZM1279.59 463.83H1284.87V466.94H1279.59ZM1269.02 460.72H1274.3V463.83H1269.02ZM1269.02 457.61H1284.87V460.72H1269.02ZM1263.74 454.5H1284.87V457.61H1263.74ZM1269.02 451.4H1284.87V454.5H1269.02ZM1269.02 448.29H1279.59V451.4H1269.02ZM1269.02 445.18H1279.59V448.29H1269.02ZM1284.87 445.18H1290.15V448.29H1284.87ZM1269.02 442.07H1279.59V445.18H1269.02ZM1284.87 442.07H1290.15V445.18H1284.87ZM1269.02 438.97H1284.87V442.07H1269.02ZM1274.3 435.86H1279.59V438.97H1274.3ZM1274.3 432.75H1284.87V435.86H1274.3ZM1269.02 429.64H1279.59V432.75H1269.02ZM1274.3 426.53H1284.87V429.64H1274.3ZM1269.02 423.43H1284.87V426.53H1269.02ZM1274.3 420.32H1279.59V423.43H1274.3ZM1269.02 417.21H1274.3V420.32H1269.02ZM1279.59 417.21H1284.87V420.32H1279.59ZM1269.02 414.1H1284.87V417.21H1269.02ZM1274.3 411H1284.87V414.1H1274.3ZM1274.3 407.89H1279.59V411H1274.3ZM1274.3 404.78H1284.87V407.89H1274.3ZM1269.02 401.67H1284.87V404.78H1269.02ZM1274.3 398.56H1284.87V401.67H1274.3ZM1269.02 395.46H1284.87V398.56H1269.02ZM1269.02 392.35H1284.87V395.46H1269.02ZM1274.3 389.24H1279.59V392.35H1274.3ZM1284.87 389.24H1290.15V392.35H1284.87ZM1269.02 386.13H1279.59V389.24H1269.02ZM1284.87 386.13H1290.15V389.24H1284.87ZM1269.02 383.02H1284.87V386.13H1269.02ZM1269.02 379.92H1284.87V383.03H1269.02ZM1274.3 376.81H1290.15V379.92H1274.3ZM1269.02 373.7H1279.59V376.81H1269.02ZM1284.87 373.7H1290.15V376.81H1284.87ZM1274.3 370.59H1290.15V373.7H1274.3ZM1269.02 367.49H1279.59V370.59H1269.02ZM1290.15 367.49H1295.43V370.59H1290.15ZM1274.3 364.38H1284.87V367.49H1274.3ZM1269.02 361.27H1284.87V364.38H1269.02ZM1269.02 358.16H1284.87V361.27H1269.02ZM1274.3 355.05H1284.87V358.16H1274.3ZM1263.74 351.95H1269.02V355.05H1263.74ZM1274.3 351.95H1279.59V355.05H1274.3ZM1290.15 351.95H1295.43V355.05H1290.15ZM1274.3 348.84H1284.87V351.95H1274.3ZM1274.3 345.73H1284.87V348.84H1274.3ZM1269.02 342.62H1284.87V345.73H1269.02ZM1274.3 339.52H1290.15V342.62H1274.3ZM1269.02 336.41H1274.3V339.52H1269.02ZM1279.59 336.41H1284.87V339.52H1279.59ZM1269.02 333.3H1279.59V336.41H1269.02ZM1269.02 330.19H1279.59V333.3H1269.02ZM1269.02 327.08H1284.87V330.19H1269.02ZM1269.02 323.98H1284.87V327.08H1269.02ZM1269.02 320.87H1274.3V323.98H1269.02ZM1269.02 317.76H1284.87V320.87H1269.02ZM1269.02 314.65H1284.87V317.76H1269.02ZM1269.02 311.55H1284.87V314.65H1269.02ZM1269.02 308.44H1284.87V311.55H1269.02ZM1269.02 305.33H1279.59V308.44H1269.02ZM1263.74 302.22H1279.59V305.33H1263.74ZM1158.1 299.11H1163.38V302.22H1158.1ZM1269.02 299.11H1279.59V302.22H1269.02ZM1158.1 296.01H1163.38V299.11H1158.1ZM1269.02 296.01H1279.59V299.11H1269.02ZM1269.02 292.9H1274.3V296.01H1269.02ZM1158.1 289.79H1163.38V292.9H1158.1ZM1263.74 289.79H1279.59V292.9H1263.74ZM1158.1 286.68H1163.38V289.79H1158.1ZM1263.74 286.68H1274.3V289.79H1263.74ZM1269.02 283.58H1279.59V286.68H1269.02ZM1158.1 280.47H1163.38V283.58H1158.1ZM1263.74 280.47H1274.3V283.58H1263.74ZM1263.74 277.36H1274.3V280.47H1263.74ZM1158.1 274.25H1163.38V277.36H1158.1ZM1263.74 274.25H1269.02V277.36H1263.74ZM1158.1 271.14H1163.38V274.25H1158.1ZM1263.74 271.14H1284.87V274.25H1263.74ZM1158.1 268.04H1163.38V271.14H1158.1ZM1258.46 268.04H1274.3V271.14H1258.46ZM1163.38 264.93H1168.66V268.04H1163.38ZM1258.46 264.93H1274.3V268.04H1258.46ZM1158.1 261.82H1163.38V264.93H1158.1ZM1263.74 261.82H1269.02V264.93H1263.74ZM1163.38 258.71H1168.66V261.82H1163.38ZM1258.46 258.71H1274.3V261.82H1258.46ZM1158.1 255.6H1168.66V258.71H1158.1ZM1247.89 255.6H1253.18V258.71H1247.89ZM1258.46 255.6H1269.02V258.71H1258.46ZM1163.38 252.5H1168.66V255.6H1163.38ZM1247.89 252.5H1269.02V255.6H1247.89ZM1158.1 249.39H1168.66V252.5H1158.1ZM1253.18 249.39H1258.46V252.5H1253.18ZM1279.59 249.39H1284.87V252.5H1279.59ZM1163.38 246.28H1168.66V249.39H1163.38ZM1253.18 246.28H1263.74V249.39H1253.18ZM1163.38 243.17H1168.66V246.28H1163.38ZM1253.18 243.17H1258.46V246.28H1253.18ZM1237.33 240.07H1258.46V243.17H1237.33ZM1242.61 236.96H1258.46V240.07H1242.61ZM1232.05 233.85H1247.89V236.96H1232.05ZM1168.66 230.74H1173.95V233.85H1168.66ZM1232.05 230.74H1253.18V233.85H1232.05ZM1168.66 227.63H1173.95V230.74H1168.66ZM1221.48 227.63H1242.61V230.74H1221.48ZM1168.66 224.53H1173.95V227.63H1168.66ZM1221.48 224.53H1247.89V227.63H1221.48ZM1168.66 221.42H1184.51V224.53H1168.66ZM1210.92 221.42H1232.05V224.53H1210.92ZM1237.33 221.42H1242.61V224.53H1237.33ZM1173.95 218.31H1189.79V221.42H1173.95ZM1210.92 218.31H1237.33V221.42H1210.92ZM1173.95 215.2H1216.2V218.31H1173.95ZM1179.23 212.1H1184.51V215.2H1179.23ZM1189.79 212.1H1216.2V215.2H1189.79ZM1173.95 208.99H1179.23V212.1H1173.95ZM1195.07 208.99H1200.36V212.1H1195.07ZM1205.64 208.99H1210.92V212.1H1205.64ZM1195.07 205.88H1200.36V208.99H1195.07Z"/><path fill="#0e8fd1" d="M1274.3 529.09H1290.15V532.2H1274.3ZM1263.74 525.98H1279.59V529.09H1263.74ZM1253.18 522.88H1269.02V525.98H1253.18ZM1253.18 519.77H1269.02V522.88H1253.18ZM1253.18 516.66H1263.74V519.77H1253.18ZM1247.89 513.55H1263.74V516.66H1247.89ZM1247.89 510.45H1263.74V513.55H1247.89ZM1242.61 507.34H1263.74V510.45H1242.61ZM1247.89 504.23H1258.46V507.34H1247.89ZM1242.61 501.12H1258.46V504.23H1242.61ZM1247.89 498.01H1269.02V501.12H1247.89ZM1247.89 494.91H1263.74V498.01H1247.89ZM1247.89 491.8H1263.74V494.91H1247.89ZM1247.89 488.69H1263.74V491.8H1247.89ZM1247.89 485.58H1269.02V488.69H1247.89ZM1247.89 482.48H1263.74V485.58H1247.89ZM1247.89 479.37H1263.74V482.48H1247.89ZM1247.89 476.26H1263.74V479.37H1247.89ZM1253.18 473.15H1269.02V476.26H1253.18ZM1247.89 470.04H1263.74V473.15H1247.89ZM1258.46 466.94H1269.02V470.04H1258.46ZM1253.18 463.83H1269.02V466.94H1253.18ZM1258.46 460.72H1269.02V463.83H1258.46ZM1258.46 457.61H1269.02V460.72H1258.46ZM1258.46 454.5H1263.74V457.61H1258.46ZM1258.46 451.4H1269.02V454.5H1258.46ZM1258.46 448.29H1269.02V451.4H1258.46ZM1258.46 445.18H1269.02V448.29H1258.46ZM1258.46 442.07H1269.02V445.18H1258.46ZM1258.46 438.97H1269.02V442.07H1258.46ZM1258.46 435.86H1274.3V438.97H1258.46ZM1263.74 432.75H1274.3V435.86H1263.74ZM1258.46 429.64H1269.02V432.75H1258.46ZM1258.46 426.53H1274.3V429.64H1258.46ZM1258.46 423.43H1269.02V426.53H1258.46ZM1263.74 420.32H1274.3V423.43H1263.74ZM1258.46 417.21H1269.02V420.32H1258.46ZM1274.3 417.21H1279.59V420.32H1274.3ZM1258.46 414.1H1269.02V417.21H1258.46ZM1258.46 411H1274.3V414.1H1258.46ZM1258.46 407.89H1274.3V411H1258.46ZM1263.74 404.78H1274.3V407.89H1263.74ZM1258.46 401.67H1269.02V404.78H1258.46ZM1263.74 398.56H1274.3V401.67H1263.74ZM1258.46 395.46H1269.02V398.56H1258.46ZM1258.46 392.35H1269.02V395.46H1258.46ZM1258.46 389.24H1274.3V392.35H1258.46ZM1258.46 386.13H1269.02V389.24H1258.46ZM1258.46 383.02H1269.02V386.13H1258.46ZM1258.46 379.92H1269.02V383.03H1258.46ZM1258.46 376.81H1274.3V379.92H1258.46ZM1258.46 373.7H1269.02V376.81H1258.46ZM1258.46 370.59H1274.3V373.7H1258.46ZM1258.46 367.49H1269.02V370.59H1258.46ZM1258.46 364.38H1274.3V367.49H1258.46ZM1258.46 361.27H1269.02V364.38H1258.46ZM1258.46 358.16H1269.02V361.27H1258.46ZM1258.46 355.05H1274.3V358.16H1258.46ZM1258.46 351.95H1263.74V355.05H1258.46ZM1269.02 351.95H1274.3V355.05H1269.02ZM1258.46 348.84H1274.3V351.95H1258.46ZM1258.46 345.73H1274.3V348.84H1258.46ZM1258.46 342.62H1269.02V345.73H1258.46ZM1258.46 339.52H1274.3V342.62H1258.46ZM1258.46 336.41H1269.02V339.52H1258.46ZM1258.46 333.3H1269.02V336.41H1258.46ZM1258.46 330.19H1269.02V333.3H1258.46ZM1158.1 327.08H1163.38V330.19H1158.1ZM1258.46 327.08H1269.02V330.19H1258.46ZM1158.1 323.98H1163.38V327.08H1158.1ZM1258.46 323.98H1269.02V327.08H1258.46ZM1158.1 320.87H1163.38V323.98H1158.1ZM1258.46 320.87H1269.02V323.98H1258.46ZM1158.1 317.76H1163.38V320.87H1158.1ZM1258.46 317.76H1269.02V320.87H1258.46ZM1158.1 314.65H1163.38V317.76H1158.1ZM1258.46 314.65H1269.02V317.76H1258.46ZM1158.1 311.55H1163.38V314.65H1158.1ZM1253.18 311.55H1269.02V314.65H1253.18ZM1158.1 308.44H1163.38V311.55H1158.1ZM1258.46 308.44H1269.02V311.55H1258.46ZM1158.1 305.33H1163.38V308.44H1158.1ZM1258.46 305.33H1269.02V308.44H1258.46ZM1158.1 302.22H1163.38V305.33H1158.1ZM1258.46 302.22H1263.74V305.33H1258.46ZM1163.38 299.11H1168.66V302.22H1163.38ZM1258.46 299.11H1269.02V302.22H1258.46ZM1258.46 296.01H1269.02V299.11H1258.46ZM1158.1 292.9H1168.66V296.01H1158.1ZM1253.18 292.9H1269.02V296.01H1253.18ZM1163.38 289.79H1168.66V292.9H1163.38ZM1253.18 289.79H1263.74V292.9H1253.18ZM1163.38 286.68H1168.66V289.79H1163.38ZM1253.18 286.68H1263.74V289.79H1253.18ZM1163.38 283.58H1168.66V286.68H1163.38ZM1247.89 283.58H1269.02V286.68H1247.89ZM1163.38 280.47H1168.66V283.58H1163.38ZM1247.89 280.47H1263.74V283.58H1247.89ZM1163.38 277.36H1168.66V280.47H1163.38ZM1247.89 277.36H1263.74V280.47H1247.89ZM1163.38 274.25H1168.66V277.36H1163.38ZM1247.89 274.25H1263.74V277.36H1247.89ZM1163.38 271.14H1168.66V274.25H1163.38ZM1242.61 271.14H1263.74V274.25H1242.61ZM1163.38 268.04H1168.66V271.14H1163.38ZM1242.61 268.04H1258.46V271.14H1242.61ZM1242.61 264.93H1258.46V268.04H1242.61ZM1163.38 261.82H1168.66V264.93H1163.38ZM1237.33 261.82H1263.74V264.93H1237.33ZM1237.33 258.71H1258.46V261.82H1237.33ZM1237.33 255.6H1247.89V258.71H1237.33ZM1253.18 255.6H1258.46V258.71H1253.18ZM1232.05 252.5H1247.89V255.6H1232.05ZM1232.05 249.39H1253.18V252.5H1232.05ZM1168.66 246.28H1173.95V249.39H1168.66ZM1226.77 246.28H1253.18V249.39H1226.77ZM1168.66 243.17H1173.95V246.28H1168.66ZM1221.48 243.17H1253.18V246.28H1221.48ZM1168.66 240.07H1173.95V243.17H1168.66ZM1221.48 240.07H1237.33V243.17H1221.48ZM1168.66 236.96H1173.95V240.07H1168.66ZM1216.2 236.96H1242.61V240.07H1216.2ZM1168.66 233.85H1179.23V236.96H1168.66ZM1184.51 233.85H1189.79V236.96H1184.51ZM1205.64 233.85H1232.05V236.96H1205.64ZM1173.95 230.74H1189.79V233.85H1173.95ZM1200.36 230.74H1232.05V233.85H1200.36ZM1173.95 227.63H1221.48V230.74H1173.95ZM1173.95 224.53H1221.48V227.63H1173.95ZM1184.51 221.42H1210.92V224.53H1184.51ZM1189.79 218.31H1210.92V221.42H1189.79Z"/><path fill="#099dcc" d="M1258.46 529.09H1274.3V532.2H1258.46ZM1247.89 525.98H1263.74V529.09H1247.89ZM1242.61 522.88H1253.18V525.98H1242.61ZM1237.33 519.77H1253.18V522.88H1237.33ZM1237.33 516.66H1253.18V519.77H1237.33ZM1232.05 513.55H1247.89V516.66H1232.05ZM1232.05 510.45H1247.89V513.55H1232.05ZM1226.77 507.34H1242.61V510.45H1226.77ZM1226.77 504.23H1247.89V507.34H1226.77ZM1232.05 501.12H1242.61V504.23H1232.05ZM1232.05 498.01H1247.89V501.12H1232.05ZM1232.05 494.91H1247.89V498.01H1232.05ZM1232.05 491.8H1247.89V494.91H1232.05ZM1232.05 488.69H1247.89V491.8H1232.05ZM1232.05 485.58H1247.89V488.69H1232.05ZM1237.33 482.48H1247.89V485.58H1237.33ZM1232.05 479.37H1247.89V482.48H1232.05ZM1237.33 476.26H1247.89V479.37H1237.33ZM1237.33 473.15H1253.18V476.26H1237.33ZM1237.33 470.04H1247.89V473.15H1237.33ZM1242.61 466.94H1258.46V470.04H1242.61ZM1242.61 463.83H1253.18V466.94H1242.61ZM1242.61 460.72H1258.46V463.83H1242.61ZM1247.89 457.61H1258.46V460.72H1247.89ZM1242.61 454.5H1258.46V457.61H1242.61ZM1247.89 451.4H1258.46V454.5H1247.89ZM1247.89 448.29H1258.46V451.4H1247.89ZM1247.89 445.18H1258.46V448.29H1247.89ZM1247.89 442.07H1258.46V445.18H1247.89ZM1247.89 438.97H1258.46V442.07H1247.89ZM1247.89 435.86H1258.46V438.97H1247.89ZM1247.89 432.75H1263.74V435.86H1247.89ZM1247.89 429.64H1258.46V432.75H1247.89ZM1247.89 426.53H1258.46V429.64H1247.89ZM1247.89 423.43H1258.46V426.53H1247.89ZM1247.89 420.32H1263.74V423.43H1247.89ZM1247.89 417.21H1258.46V420.32H1247.89ZM1247.89 414.1H1258.46V417.21H1247.89ZM1247.89 411H1258.46V414.1H1247.89ZM1247.89 407.89H1258.46V411H1247.89ZM1247.89 404.78H1263.74V407.89H1247.89ZM1247.89 401.67H1258.46V404.78H1247.89ZM1247.89 398.56H1263.74V401.67H1247.89ZM1247.89 395.46H1258.46V398.56H1247.89ZM1247.89 392.35H1258.46V395.46H1247.89ZM1247.89 389.24H1258.46V392.35H1247.89ZM1247.89 386.13H1258.46V389.24H1247.89ZM1247.89 383.02H1258.46V386.13H1247.89ZM1247.89 379.92H1258.46V383.03H1247.89ZM1247.89 376.81H1258.46V379.92H1247.89ZM1247.89 373.7H1258.46V376.81H1247.89ZM1247.89 370.59H1258.46V373.7H1247.89ZM1247.89 367.49H1258.46V370.59H1247.89ZM1247.89 364.38H1258.46V367.49H1247.89ZM1247.89 361.27H1258.46V364.38H1247.89ZM1247.89 358.16H1258.46V361.27H1247.89ZM1247.89 355.05H1258.46V358.16H1247.89ZM1247.89 351.95H1258.46V355.05H1247.89ZM1158.1 348.84H1163.38V351.95H1158.1ZM1247.89 348.84H1258.46V351.95H1247.89ZM1158.1 345.73H1163.38V348.84H1158.1ZM1247.89 345.73H1258.46V348.84H1247.89ZM1158.1 342.62H1163.38V345.73H1158.1ZM1242.61 342.62H1258.46V345.73H1242.61ZM1158.1 339.52H1163.38V342.62H1158.1ZM1247.89 339.52H1258.46V342.62H1247.89ZM1158.1 336.41H1163.38V339.52H1158.1ZM1247.89 336.41H1258.46V339.52H1247.89ZM1158.1 333.3H1163.38V336.41H1158.1ZM1247.89 333.3H1258.46V336.41H1247.89ZM1158.1 330.19H1163.38V333.3H1158.1ZM1242.61 330.19H1258.46V333.3H1242.61ZM1242.61 327.08H1258.46V330.19H1242.61ZM1242.61 323.98H1258.46V327.08H1242.61ZM1163.38 320.87H1168.66V323.98H1163.38ZM1242.61 320.87H1258.46V323.98H1242.61ZM1163.38 317.76H1168.66V320.87H1163.38ZM1242.61 317.76H1258.46V320.87H1242.61ZM1163.38 314.65H1168.66V317.76H1163.38ZM1242.61 314.65H1258.46V317.76H1242.61ZM1163.38 311.55H1168.66V314.65H1163.38ZM1242.61 311.55H1253.18V314.65H1242.61ZM1163.38 308.44H1168.66V311.55H1163.38ZM1247.89 308.44H1258.46V311.55H1247.89ZM1163.38 305.33H1168.66V308.44H1163.38ZM1242.61 305.33H1258.46V308.44H1242.61ZM1163.38 302.22H1168.66V305.33H1163.38ZM1242.61 302.22H1258.46V305.33H1242.61ZM1242.61 299.11H1258.46V302.22H1242.61ZM1163.38 296.01H1168.66V299.11H1163.38ZM1242.61 296.01H1258.46V299.11H1242.61ZM1237.33 292.9H1253.18V296.01H1237.33ZM1237.33 289.79H1253.18V292.9H1237.33ZM1237.33 286.68H1253.18V289.79H1237.33ZM1237.33 283.58H1247.89V286.68H1237.33ZM1232.05 280.47H1247.89V283.58H1232.05ZM1232.05 277.36H1247.89V280.47H1232.05ZM1232.05 274.25H1247.89V277.36H1232.05ZM1232.05 271.14H1242.61V274.25H1232.05ZM1226.77 268.04H1242.61V271.14H1226.77ZM1168.66 264.93H1173.95V268.04H1168.66ZM1226.77 264.93H1242.61V268.04H1226.77ZM1168.66 261.82H1173.95V264.93H1168.66ZM1221.48 261.82H1237.33V264.93H1221.48ZM1168.66 258.71H1173.95V261.82H1168.66ZM1221.48 258.71H1237.33V261.82H1221.48ZM1168.66 255.6H1173.95V258.71H1168.66ZM1216.2 255.6H1237.33V258.71H1216.2ZM1168.66 252.5H1173.95V255.6H1168.66ZM1216.2 252.5H1232.05V255.6H1216.2ZM1168.66 249.39H1179.23V252.5H1168.66ZM1210.92 249.39H1232.05V252.5H1210.92ZM1173.95 246.28H1184.51V249.39H1173.95ZM1200.36 246.28H1226.77V249.39H1200.36ZM1173.95 243.17H1221.48V246.28H1173.95ZM1173.95 240.07H1221.48V243.17H1173.95ZM1173.95 236.96H1216.2V240.07H1173.95ZM1179.23 233.85H1184.51V236.96H1179.23ZM1189.79 233.85H1205.64V236.96H1189.79ZM1189.79 230.74H1200.36V233.85H1189.79Z"/><path fill="#0da7c3" d="M1242.61 529.09H1258.46V532.2H1242.61ZM1232.05 525.98H1247.89V529.09H1232.05ZM1221.48 522.88H1242.61V525.98H1221.48ZM1221.48 519.77H1237.33V522.88H1221.48ZM1216.2 516.66H1237.33V519.77H1216.2ZM1216.2 513.55H1232.05V516.66H1216.2ZM1216.2 510.45H1232.05V513.55H1216.2ZM1216.2 507.34H1226.77V510.45H1216.2ZM1210.92 504.23H1226.77V507.34H1210.92ZM1210.92 501.12H1232.05V504.23H1210.92ZM1210.92 498.01H1232.05V501.12H1210.92ZM1216.2 494.91H1232.05V498.01H1216.2ZM1216.2 491.8H1232.05V494.91H1216.2ZM1216.2 488.69H1232.05V491.8H1216.2ZM1216.2 485.58H1232.05V488.69H1216.2ZM1216.2 482.48H1237.33V485.58H1216.2ZM1221.48 479.37H1232.05V482.48H1221.48ZM1221.48 476.26H1237.33V479.37H1221.48ZM1221.48 473.15H1237.33V476.26H1221.48ZM1221.48 470.04H1237.33V473.15H1221.48ZM1221.48 466.94H1242.61V470.04H1221.48ZM1226.77 463.83H1242.61V466.94H1226.77ZM1226.77 460.72H1242.61V463.83H1226.77ZM1226.77 457.61H1247.89V460.72H1226.77ZM1226.77 454.5H1242.61V457.61H1226.77ZM1232.05 451.4H1247.89V454.5H1232.05ZM1232.05 448.29H1247.89V451.4H1232.05ZM1232.05 445.18H1247.89V448.29H1232.05ZM1232.05 442.07H1247.89V445.18H1232.05ZM1237.33 438.97H1247.89V442.07H1237.33ZM1232.05 435.86H1247.89V438.97H1232.05ZM1232.05 432.75H1247.89V435.86H1232.05ZM1237.33 429.64H1247.89V432.75H1237.33ZM1237.33 426.53H1247.89V429.64H1237.33ZM1237.33 423.43H1247.89V426.53H1237.33ZM1237.33 420.32H1247.89V423.43H1237.33ZM1232.05 417.21H1247.89V420.32H1232.05ZM1237.33 414.1H1247.89V417.21H1237.33ZM1232.05 411H1247.89V414.1H1232.05ZM1232.05 407.89H1247.89V411H1232.05ZM1232.05 404.78H1247.89V407.89H1232.05ZM1232.05 401.67H1247.89V404.78H1232.05ZM1237.33 398.56H1247.89V401.67H1237.33ZM1232.05 395.46H1247.89V398.56H1232.05ZM1237.33 392.35H1247.89V395.46H1237.33ZM1237.33 389.24H1247.89V392.35H1237.33ZM1232.05 386.13H1247.89V389.24H1232.05ZM1237.33 383.02H1247.89V386.13H1237.33ZM1232.05 379.92H1247.89V383.03H1232.05ZM1232.05 376.81H1247.89V379.92H1232.05ZM1158.1 373.7H1163.38V376.81H1158.1ZM1237.33 373.7H1247.89V376.81H1237.33ZM1158.1 370.59H1163.38V373.7H1158.1ZM1237.33 370.59H1247.89V373.7H1237.33ZM1158.1 367.49H1163.38V370.59H1158.1ZM1232.05 367.49H1247.89V370.59H1232.05ZM1158.1 364.38H1163.38V367.49H1158.1ZM1232.05 364.38H1247.89V367.49H1232.05ZM1158.1 361.27H1163.38V364.38H1158.1ZM1232.05 361.27H1247.89V364.38H1232.05ZM1158.1 358.16H1163.38V361.27H1158.1ZM1232.05 358.16H1247.89V361.27H1232.05ZM1158.1 355.05H1163.38V358.16H1158.1ZM1232.05 355.05H1247.89V358.16H1232.05ZM1158.1 351.95H1163.38V355.05H1158.1ZM1232.05 351.95H1247.89V355.05H1232.05ZM1232.05 348.84H1247.89V351.95H1232.05ZM1232.05 345.73H1247.89V348.84H1232.05ZM1232.05 342.62H1242.61V345.73H1232.05ZM1163.38 339.52H1168.66V342.62H1163.38ZM1232.05 339.52H1247.89V342.62H1232.05ZM1163.38 336.41H1168.66V339.52H1163.38ZM1226.77 336.41H1247.89V339.52H1226.77ZM1163.38 333.3H1168.66V336.41H1163.38ZM1232.05 333.3H1247.89V336.41H1232.05ZM1163.38 330.19H1168.66V333.3H1163.38ZM1226.77 330.19H1242.61V333.3H1226.77ZM1163.38 327.08H1168.66V330.19H1163.38ZM1226.77 327.08H1242.61V330.19H1226.77ZM1163.38 323.98H1168.66V327.08H1163.38ZM1226.77 323.98H1242.61V327.08H1226.77ZM1226.77 320.87H1242.61V323.98H1226.77ZM1232.05 317.76H1242.61V320.87H1232.05ZM1226.77 314.65H1242.61V317.76H1226.77ZM1232.05 311.55H1242.61V314.65H1232.05ZM1226.77 308.44H1247.89V311.55H1226.77ZM1226.77 305.33H1242.61V308.44H1226.77ZM1226.77 302.22H1242.61V305.33H1226.77ZM1226.77 299.11H1242.61V302.22H1226.77ZM1168.66 296.01H1173.95V299.11H1168.66ZM1226.77 296.01H1242.61V299.11H1226.77ZM1168.66 292.9H1173.95V296.01H1168.66ZM1226.77 292.9H1237.33V296.01H1226.77ZM1168.66 289.79H1173.95V292.9H1168.66ZM1221.48 289.79H1237.33V292.9H1221.48ZM1168.66 286.68H1173.95V289.79H1168.66ZM1221.48 286.68H1237.33V289.79H1221.48ZM1168.66 283.58H1173.95V286.68H1168.66ZM1216.2 283.58H1237.33V286.68H1216.2ZM1168.66 280.47H1173.95V283.58H1168.66ZM1216.2 280.47H1232.05V283.58H1216.2ZM1168.66 277.36H1173.95V280.47H1168.66ZM1216.2 277.36H1232.05V280.47H1216.2ZM1168.66 274.25H1179.23V277.36H1168.66ZM1210.92 274.25H1232.05V277.36H1210.92ZM1168.66 271.14H1179.23V274.25H1168.66ZM1210.92 271.14H1232.05V274.25H1210.92ZM1168.66 268.04H1179.23V271.14H1168.66ZM1205.64 268.04H1226.77V271.14H1205.64ZM1173.95 264.93H1184.51V268.04H1173.95ZM1200.36 264.93H1226.77V268.04H1200.36ZM1173.95 261.82H1184.51V264.93H1173.95ZM1195.07 261.82H1221.48V264.93H1195.07ZM1173.95 258.71H1221.48V261.82H1173.95ZM1173.95 255.6H1216.2V258.71H1173.95ZM1173.95 252.5H1216.2V255.6H1173.95ZM1179.23 249.39H1210.92V252.5H1179.23ZM1184.51 246.28H1200.36V249.39H1184.51Z"/><path fill="#1eafb3" d="M1226.77 529.09H1242.61V532.2H1226.77ZM1210.92 525.98H1232.05V529.09H1210.92ZM1205.64 522.88H1221.48V525.98H1205.64ZM1205.64 519.77H1221.48V522.88H1205.64ZM1200.36 516.66H1216.2V519.77H1200.36ZM1200.36 513.55H1216.2V516.66H1200.36ZM1200.36 510.45H1216.2V513.55H1200.36ZM1200.36 507.34H1216.2V510.45H1200.36ZM1200.36 504.23H1210.92V507.34H1200.36ZM1195.07 501.12H1210.92V504.23H1195.07ZM1195.07 498.01H1210.92V501.12H1195.07ZM1200.36 494.91H1216.2V498.01H1200.36ZM1200.36 491.8H1216.2V494.91H1200.36ZM1200.36 488.69H1216.2V491.8H1200.36ZM1200.36 485.58H1216.2V488.69H1200.36ZM1200.36 482.48H1216.2V485.58H1200.36ZM1205.64 479.37H1221.48V482.48H1205.64ZM1205.64 476.26H1221.48V479.37H1205.64ZM1205.64 473.15H1221.48V476.26H1205.64ZM1205.64 470.04H1221.48V473.15H1205.64ZM1210.92 466.94H1221.48V470.04H1210.92ZM1210.92 463.83H1226.77V466.94H1210.92ZM1210.92 460.72H1226.77V463.83H1210.92ZM1210.92 457.61H1226.77V460.72H1210.92ZM1210.92 454.5H1226.77V457.61H1210.92ZM1210.92 451.4H1232.05V454.5H1210.92ZM1216.2 448.29H1232.05V451.4H1216.2ZM1216.2 445.18H1232.05V448.29H1216.2ZM1216.2 442.07H1232.05V445.18H1216.2ZM1216.2 438.97H1237.33V442.07H1216.2ZM1216.2 435.86H1232.05V438.97H1216.2ZM1216.2 432.75H1232.05V435.86H1216.2ZM1216.2 429.64H1237.33V432.75H1216.2ZM1216.2 426.53H1237.33V429.64H1216.2ZM1216.2 423.43H1237.33V426.53H1216.2ZM1221.48 420.32H1237.33V423.43H1221.48ZM1221.48 417.21H1232.05V420.32H1221.48ZM1216.2 414.1H1237.33V417.21H1216.2ZM1216.2 411H1232.05V414.1H1216.2ZM1216.2 407.89H1232.05V411H1216.2ZM1216.2 404.78H1232.05V407.89H1216.2ZM1158.1 401.67H1163.38V404.78H1158.1ZM1216.2 401.67H1232.05V404.78H1216.2ZM1158.1 398.56H1163.38V401.67H1158.1ZM1216.2 398.56H1237.33V401.67H1216.2ZM1158.1 395.46H1163.38V398.56H1158.1ZM1216.2 395.46H1232.05V398.56H1216.2ZM1158.1 392.35H1163.38V395.46H1158.1ZM1216.2 392.35H1237.33V395.46H1216.2ZM1158.1 389.24H1163.38V392.35H1158.1ZM1216.2 389.24H1237.33V392.35H1216.2ZM1158.1 386.13H1163.38V389.24H1158.1ZM1216.2 386.13H1232.05V389.24H1216.2ZM1158.1 383.02H1163.38V386.13H1158.1ZM1216.2 383.02H1237.33V386.13H1216.2ZM1158.1 379.92H1163.38V383.03H1158.1ZM1216.2 379.92H1232.05V383.03H1216.2ZM1158.1 376.81H1163.38V379.92H1158.1ZM1216.2 376.81H1232.05V379.92H1216.2ZM1216.2 373.7H1237.33V376.81H1216.2ZM1216.2 370.59H1237.33V373.7H1216.2ZM1216.2 367.49H1232.05V370.59H1216.2ZM1216.2 364.38H1232.05V367.49H1216.2ZM1163.38 361.27H1168.66V364.38H1163.38ZM1216.2 361.27H1232.05V364.38H1216.2ZM1163.38 358.16H1168.66V361.27H1163.38ZM1216.2 358.16H1232.05V361.27H1216.2ZM1163.38 355.05H1168.66V358.16H1163.38ZM1216.2 355.05H1232.05V358.16H1216.2ZM1163.38 351.95H1168.66V355.05H1163.38ZM1216.2 351.95H1232.05V355.05H1216.2ZM1163.38 348.84H1168.66V351.95H1163.38ZM1216.2 348.84H1232.05V351.95H1216.2ZM1163.38 345.73H1168.66V348.84H1163.38ZM1216.2 345.73H1232.05V348.84H1216.2ZM1163.38 342.62H1168.66V345.73H1163.38ZM1216.2 342.62H1232.05V345.73H1216.2ZM1210.92 339.52H1232.05V342.62H1210.92ZM1210.92 336.41H1226.77V339.52H1210.92ZM1210.92 333.3H1232.05V336.41H1210.92ZM1168.66 330.19H1173.95V333.3H1168.66ZM1210.92 330.19H1226.77V333.3H1210.92ZM1168.66 327.08H1173.95V330.19H1168.66ZM1210.92 327.08H1226.77V330.19H1210.92ZM1168.66 323.98H1173.95V327.08H1168.66ZM1210.92 323.98H1226.77V327.08H1210.92ZM1168.66 320.87H1173.95V323.98H1168.66ZM1210.92 320.87H1226.77V323.98H1210.92ZM1168.66 317.76H1173.95V320.87H1168.66ZM1210.92 317.76H1232.05V320.87H1210.92ZM1168.66 314.65H1173.95V317.76H1168.66ZM1210.92 314.65H1226.77V317.76H1210.92ZM1168.66 311.55H1173.95V314.65H1168.66ZM1210.92 311.55H1232.05V314.65H1210.92ZM1168.66 308.44H1179.23V311.55H1168.66ZM1210.92 308.44H1226.77V311.55H1210.92ZM1168.66 305.33H1179.23V308.44H1168.66ZM1210.92 305.33H1226.77V308.44H1210.92ZM1168.66 302.22H1179.23V305.33H1168.66ZM1210.92 302.22H1226.77V305.33H1210.92ZM1168.66 299.11H1179.23V302.22H1168.66ZM1210.92 299.11H1226.77V302.22H1210.92ZM1173.95 296.01H1179.23V299.11H1173.95ZM1210.92 296.01H1226.77V299.11H1210.92ZM1173.95 292.9H1179.23V296.01H1173.95ZM1205.64 292.9H1226.77V296.01H1205.64ZM1173.95 289.79H1184.51V292.9H1173.95ZM1205.64 289.79H1221.48V292.9H1205.64ZM1173.95 286.68H1184.51V289.79H1173.95ZM1200.36 286.68H1221.48V289.79H1200.36ZM1173.95 283.58H1189.79V286.68H1173.95ZM1200.36 283.58H1216.2V286.68H1200.36ZM1173.95 280.47H1195.07V283.58H1173.95ZM1200.36 280.47H1216.2V283.58H1200.36ZM1173.95 277.36H1216.2V280.47H1173.95ZM1179.23 274.25H1210.92V277.36H1179.23ZM1179.23 271.14H1210.92V274.25H1179.23ZM1179.23 268.04H1205.64V271.14H1179.23ZM1184.51 264.93H1200.36V268.04H1184.51ZM1184.51 261.82H1195.07V264.93H1184.51Z"/><path fill="#2eb7a4" d="M1205.64 529.09H1226.77V532.2H1205.64ZM1195.07 525.98H1210.92V529.09H1195.07ZM1189.79 522.88H1205.64V525.98H1189.79ZM1189.79 519.77H1205.64V522.88H1189.79ZM1189.79 516.66H1200.36V519.77H1189.79ZM1189.79 513.55H1200.36V516.66H1189.79ZM1184.51 510.45H1200.36V513.55H1184.51ZM1184.51 507.34H1200.36V510.45H1184.51ZM1184.51 504.23H1200.36V507.34H1184.51ZM1184.51 501.12H1195.07V504.23H1184.51ZM1184.51 498.01H1195.07V501.12H1184.51ZM1184.51 494.91H1200.36V498.01H1184.51ZM1184.51 491.8H1200.36V494.91H1184.51ZM1184.51 488.69H1200.36V491.8H1184.51ZM1189.79 485.58H1200.36V488.69H1189.79ZM1189.79 482.48H1200.36V485.58H1189.79ZM1189.79 479.37H1205.64V482.48H1189.79ZM1189.79 476.26H1205.64V479.37H1189.79ZM1189.79 473.15H1205.64V476.26H1189.79ZM1189.79 470.04H1205.64V473.15H1189.79ZM1195.07 466.94H1210.92V470.04H1195.07ZM1195.07 463.83H1210.92V466.94H1195.07ZM1195.07 460.72H1210.92V463.83H1195.07ZM1195.07 457.61H1210.92V460.72H1195.07ZM1195.07 454.5H1210.92V457.61H1195.07ZM1200.36 451.4H1210.92V454.5H1200.36ZM1200.36 448.29H1216.2V451.4H1200.36ZM1200.36 445.18H1216.2V448.29H1200.36ZM1200.36 442.07H1216.2V445.18H1200.36ZM1200.36 438.97H1216.2V442.07H1200.36ZM1205.64 435.86H1216.2V438.97H1205.64ZM1200.36 432.75H1216.2V435.86H1200.36ZM1158.1 429.64H1163.38V432.75H1158.1ZM1200.36 429.64H1216.2V432.75H1200.36ZM1158.1 426.53H1163.38V429.64H1158.1ZM1200.36 426.53H1216.2V429.64H1200.36ZM1158.1 423.43H1163.38V426.53H1158.1ZM1200.36 423.43H1216.2V426.53H1200.36ZM1158.1 420.32H1163.38V423.43H1158.1ZM1200.36 420.32H1221.48V423.43H1200.36ZM1158.1 417.21H1163.38V420.32H1158.1ZM1200.36 417.21H1221.48V420.32H1200.36ZM1158.1 414.1H1163.38V417.21H1158.1ZM1200.36 414.1H1216.2V417.21H1200.36ZM1158.1 411H1163.38V414.1H1158.1ZM1200.36 411H1216.2V414.1H1200.36ZM1158.1 407.89H1163.38V411H1158.1ZM1200.36 407.89H1216.2V411H1200.36ZM1158.1 404.78H1163.38V407.89H1158.1ZM1200.36 404.78H1216.2V407.89H1200.36ZM1200.36 401.67H1216.2V404.78H1200.36ZM1200.36 398.56H1216.2V401.67H1200.36ZM1200.36 395.46H1216.2V398.56H1200.36ZM1200.36 392.35H1216.2V395.46H1200.36ZM1163.38 389.24H1168.66V392.35H1163.38ZM1200.36 389.24H1216.2V392.35H1200.36ZM1163.38 386.13H1168.66V389.24H1163.38ZM1200.36 386.13H1216.2V389.24H1200.36ZM1163.38 383.02H1168.66V386.13H1163.38ZM1200.36 383.02H1216.2V386.13H1200.36ZM1163.38 379.92H1168.66V383.03H1163.38ZM1200.36 379.92H1216.2V383.03H1200.36ZM1163.38 376.81H1168.66V379.92H1163.38ZM1200.36 376.81H1216.2V379.92H1200.36ZM1163.38 373.7H1168.66V376.81H1163.38ZM1200.36 373.7H1216.2V376.81H1200.36ZM1163.38 370.59H1168.66V373.7H1163.38ZM1200.36 370.59H1216.2V373.7H1200.36ZM1163.38 367.49H1168.66V370.59H1163.38ZM1200.36 367.49H1216.2V370.59H1200.36ZM1163.38 364.38H1173.95V367.49H1163.38ZM1200.36 364.38H1216.2V367.49H1200.36ZM1168.66 361.27H1173.95V364.38H1168.66ZM1200.36 361.27H1216.2V364.38H1200.36ZM1168.66 358.16H1173.95V361.27H1168.66ZM1200.36 358.16H1216.2V361.27H1200.36ZM1168.66 355.05H1173.95V358.16H1168.66ZM1200.36 355.05H1216.2V358.16H1200.36ZM1168.66 351.95H1179.23V355.05H1168.66ZM1200.36 351.95H1216.2V355.05H1200.36ZM1168.66 348.84H1179.23V351.95H1168.66ZM1200.36 348.84H1216.2V351.95H1200.36ZM1168.66 345.73H1179.23V348.84H1168.66ZM1200.36 345.73H1216.2V348.84H1200.36ZM1168.66 342.62H1184.51V345.73H1168.66ZM1200.36 342.62H1216.2V345.73H1200.36ZM1168.66 339.52H1184.51V342.62H1168.66ZM1195.07 339.52H1210.92V342.62H1195.07ZM1168.66 336.41H1184.51V339.52H1168.66ZM1200.36 336.41H1210.92V339.52H1200.36ZM1168.66 333.3H1184.51V336.41H1168.66ZM1195.07 333.3H1210.92V336.41H1195.07ZM1173.95 330.19H1189.79V333.3H1173.95ZM1195.07 330.19H1210.92V333.3H1195.07ZM1173.95 327.08H1189.79V330.19H1173.95ZM1195.07 327.08H1210.92V330.19H1195.07ZM1173.95 323.98H1189.79V327.08H1173.95ZM1195.07 323.98H1210.92V327.08H1195.07ZM1173.95 320.87H1189.79V323.98H1173.95ZM1195.07 320.87H1210.92V323.98H1195.07ZM1173.95 317.76H1189.79V320.87H1173.95ZM1195.07 317.76H1210.92V320.87H1195.07ZM1173.95 314.65H1210.92V317.76H1173.95ZM1173.95 311.55H1210.92V314.65H1173.95ZM1179.23 308.44H1210.92V311.55H1179.23ZM1179.23 305.33H1210.92V308.44H1179.23ZM1179.23 302.22H1210.92V305.33H1179.23ZM1179.23 299.11H1210.92V302.22H1179.23ZM1179.23 296.01H1210.92V299.11H1179.23ZM1179.23 292.9H1205.64V296.01H1179.23ZM1184.51 289.79H1205.64V292.9H1184.51ZM1184.51 286.68H1200.36V289.79H1184.51ZM1189.79 283.58H1200.36V286.68H1189.79ZM1195.07 280.47H1200.36V283.58H1195.07Z"/><path fill="#52ba92" d="M1189.79 529.09H1205.64V532.2H1189.79ZM1184.51 525.98H1195.07V529.09H1184.51ZM1179.23 522.88H1189.79V525.98H1179.23ZM1179.23 519.77H1189.79V522.88H1179.23ZM1179.23 516.66H1189.79V519.77H1179.23ZM1173.95 513.55H1189.79V516.66H1173.95ZM1173.95 510.45H1184.51V513.55H1173.95ZM1173.95 507.34H1184.51V510.45H1173.95ZM1173.95 504.23H1184.51V507.34H1173.95ZM1173.95 501.12H1184.51V504.23H1173.95ZM1173.95 498.01H1184.51V501.12H1173.95ZM1173.95 494.91H1184.51V498.01H1173.95ZM1173.95 491.8H1184.51V494.91H1173.95ZM1173.95 488.69H1184.51V491.8H1173.95ZM1173.95 485.58H1189.79V488.69H1173.95ZM1173.95 482.48H1189.79V485.58H1173.95ZM1173.95 479.37H1189.79V482.48H1173.95ZM1173.95 476.26H1189.79V479.37H1173.95ZM1173.95 473.15H1189.79V476.26H1173.95ZM1173.95 470.04H1189.79V473.15H1173.95ZM1173.95 466.94H1195.07V470.04H1173.95ZM1173.95 463.83H1195.07V466.94H1173.95ZM1158.1 460.72H1163.38V463.83H1158.1ZM1173.95 460.72H1195.07V463.83H1173.95ZM1158.1 457.61H1163.38V460.72H1158.1ZM1173.95 457.61H1195.07V460.72H1173.95ZM1158.1 454.5H1163.38V457.61H1158.1ZM1173.95 454.5H1195.07V457.61H1173.95ZM1158.1 451.4H1163.38V454.5H1158.1ZM1173.95 451.4H1200.36V454.5H1173.95ZM1158.1 448.29H1163.38V451.4H1158.1ZM1173.95 448.29H1200.36V451.4H1173.95ZM1158.1 445.18H1163.38V448.29H1158.1ZM1173.95 445.18H1200.36V448.29H1173.95ZM1158.1 442.07H1163.38V445.18H1158.1ZM1173.95 442.07H1200.36V445.18H1173.95ZM1158.1 438.97H1163.38V442.07H1158.1ZM1173.95 438.97H1200.36V442.07H1173.95ZM1158.1 435.86H1163.38V438.97H1158.1ZM1173.95 435.86H1205.64V438.97H1173.95ZM1158.1 432.75H1163.38V435.86H1158.1ZM1173.95 432.75H1200.36V435.86H1173.95ZM1173.95 429.64H1200.36V432.75H1173.95ZM1168.66 426.53H1200.36V429.64H1168.66ZM1163.38 423.43H1200.36V426.53H1163.38ZM1163.38 420.32H1200.36V423.43H1163.38ZM1163.38 417.21H1200.36V420.32H1163.38ZM1163.38 414.1H1200.36V417.21H1163.38ZM1163.38 411H1200.36V414.1H1163.38ZM1163.38 407.89H1200.36V411H1163.38ZM1163.38 404.78H1200.36V407.89H1163.38ZM1163.38 401.67H1200.36V404.78H1163.38ZM1163.38 398.56H1200.36V401.67H1163.38ZM1163.38 395.46H1200.36V398.56H1163.38ZM1163.38 392.35H1200.36V395.46H1163.38ZM1168.66 389.24H1200.36V392.35H1168.66ZM1168.66 386.13H1200.36V389.24H1168.66ZM1168.66 383.02H1200.36V386.13H1168.66ZM1168.66 379.92H1200.36V383.03H1168.66ZM1168.66 376.81H1200.36V379.92H1168.66ZM1168.66 373.7H1200.36V376.81H1168.66ZM1168.66 370.59H1200.36V373.7H1168.66ZM1168.66 367.49H1200.36V370.59H1168.66ZM1173.95 364.38H1200.36V367.49H1173.95ZM1173.95 361.27H1200.36V364.38H1173.95ZM1173.95 358.16H1200.36V361.27H1173.95ZM1173.95 355.05H1200.36V358.16H1173.95ZM1179.23 351.95H1200.36V355.05H1179.23ZM1179.23 348.84H1200.36V351.95H1179.23ZM1179.23 345.73H1200.36V348.84H1179.23ZM1184.51 342.62H1200.36V345.73H1184.51ZM1184.51 339.52H1195.07V342.62H1184.51ZM1184.51 336.41H1200.36V339.52H1184.51ZM1184.51 333.3H1195.07V336.41H1184.51ZM1189.79 330.19H1195.07V333.3H1189.79ZM1189.79 327.08H1195.07V330.19H1189.79ZM1189.79 323.98H1195.07V327.08H1189.79ZM1189.79 320.87H1195.07V323.98H1189.79ZM1189.79 317.76H1195.07V320.87H1189.79Z"/><path fill="#74bd81" d="M1179.23 529.09H1189.79V532.2H1179.23ZM1173.95 525.98H1184.51V529.09H1173.95ZM1173.95 522.88H1179.23V525.98H1173.95ZM1168.66 519.77H1179.23V522.88H1168.66ZM1168.66 516.66H1179.23V519.77H1168.66ZM1168.66 513.55H1173.95V516.66H1168.66ZM1168.66 510.45H1173.95V513.55H1168.66ZM1168.66 507.34H1173.95V510.45H1168.66ZM1168.66 504.23H1173.95V507.34H1168.66ZM1168.66 501.12H1173.95V504.23H1168.66ZM1158.1 498.01H1163.38V501.12H1158.1ZM1168.66 498.01H1173.95V501.12H1168.66ZM1158.1 494.91H1163.38V498.01H1158.1ZM1168.66 494.91H1173.95V498.01H1168.66ZM1158.1 491.8H1163.38V494.91H1158.1ZM1168.66 491.8H1173.95V494.91H1168.66ZM1158.1 488.69H1163.38V491.8H1158.1ZM1168.66 488.69H1173.95V491.8H1168.66ZM1158.1 485.58H1163.38V488.69H1158.1ZM1168.66 485.58H1173.95V488.69H1168.66ZM1158.1 482.48H1163.38V485.58H1158.1ZM1168.66 482.48H1173.95V485.58H1168.66ZM1158.1 479.37H1163.38V482.48H1158.1ZM1168.66 479.37H1173.95V482.48H1168.66ZM1158.1 476.26H1163.38V479.37H1158.1ZM1168.66 476.26H1173.95V479.37H1168.66ZM1158.1 473.15H1163.38V476.26H1158.1ZM1168.66 473.15H1173.95V476.26H1168.66ZM1158.1 470.04H1173.95V473.15H1158.1ZM1158.1 466.94H1173.95V470.04H1158.1ZM1158.1 463.83H1173.95V466.94H1158.1ZM1163.38 460.72H1173.95V463.83H1163.38ZM1163.38 457.61H1173.95V460.72H1163.38ZM1163.38 454.5H1173.95V457.61H1163.38ZM1163.38 451.4H1173.95V454.5H1163.38ZM1163.38 448.29H1173.95V451.4H1163.38ZM1163.38 445.18H1173.95V448.29H1163.38ZM1163.38 442.07H1173.95V445.18H1163.38ZM1163.38 438.97H1173.95V442.07H1163.38ZM1163.38 435.86H1173.95V438.97H1163.38ZM1163.38 432.75H1173.95V435.86H1163.38ZM1163.38 429.64H1173.95V432.75H1163.38ZM1163.38 426.53H1168.66V429.64H1163.38Z"/><path fill="#95be71" d="M1168.66 529.09H1179.23V532.2H1168.66ZM1168.66 525.98H1173.95V529.09H1168.66ZM1168.66 522.88H1173.95V525.98H1168.66ZM1163.38 513.55H1168.66V516.66H1163.38ZM1163.38 510.45H1168.66V513.55H1163.38ZM1158.1 507.34H1168.66V510.45H1158.1ZM1158.1 504.23H1168.66V507.34H1158.1ZM1158.1 501.12H1168.66V504.23H1158.1ZM1163.38 498.01H1168.66V501.12H1163.38ZM1163.38 494.91H1168.66V498.01H1163.38ZM1163.38 491.8H1168.66V494.91H1163.38ZM1163.38 488.69H1168.66V491.8H1163.38ZM1163.38 485.58H1168.66V488.69H1163.38ZM1163.38 482.48H1168.66V485.58H1163.38ZM1163.38 479.37H1168.66V482.48H1163.38ZM1163.38 476.26H1168.66V479.37H1163.38ZM1163.38 473.15H1168.66V476.26H1163.38Z"/><path fill="#b3bd65" d="M1163.38 522.88H1168.66V525.98H1163.38ZM1163.38 519.77H1168.66V522.88H1163.38ZM1163.38 516.66H1168.66V519.77H1163.38ZM1158.1 513.55H1163.38V516.66H1158.1ZM1158.1 510.45H1163.38V513.55H1158.1Z"/><path fill="#d1bb59" d="M1163.38 529.09H1168.66V532.2H1163.38ZM1163.38 525.98H1168.66V529.09H1163.38ZM1158.1 519.77H1163.38V522.88H1158.1ZM1158.1 516.66H1163.38V519.77H1158.1Z"/><path fill="#e2c04b" d="M1158.1 522.88H1163.38V525.98H1158.1Z"/><path fill="#f4c63b" d="M1158.1 525.98H1163.38V529.09H1158.1Z"/><path fill="#fdd22b" d="M1158.1 529.09H1163.38V532.2H1158.1Z"/></g>
<path d="M1184.51 532.2V524.8M1210.92 532.2V524.8M1237.33 532.2V524.8M1263.74 532.2V518M1290.15 532.2V524.8M1316.56 532.2V524.8M1342.97 532.2V524.8M1369.38 532.2V518M1395.79 532.2V524.8M1422.2 532.2V524.8M1448.61 532.2V524.8M1475.02 532.2V518M1501.43 532.2V524.8M1527.84 532.2V524.8M1554.25 532.2V524.8M1580.66 532.2V518M1607.07 532.2V524.8M1633.48 532.2V524.8M1659.89 532.2V524.8M1686.3 532.2V518M1712.71 532.2V524.8M1739.12 532.2V524.8M1765.53 532.2V524.8M1791.94 532.2V518M1818.35 532.2V524.8M1158.1 516.66H1170.4M1158.1 501.12H1170.4M1158.1 485.58H1170.4M1158.1 470.04H1182.8M1158.1 454.5H1170.4M1158.1 438.97H1170.4M1158.1 423.43H1170.4M1158.1 407.89H1182.8M1158.1 392.35H1170.4M1158.1 376.81H1170.4M1158.1 361.27H1170.4M1158.1 345.73H1182.8M1158.1 330.19H1170.4M1158.1 314.65H1170.4M1158.1 299.11H1170.4M1158.1 283.58H1182.8M1158.1 268.04H1170.4M1158.1 252.5H1170.4M1158.1 236.96H1170.4M1158.1 221.42H1182.8M1158.1 205.88H1170.4M1158.1 190.34H1170.4M1158.1 174.8H1170.4M1158.1 159.26H1182.8M1158.1 143.72H1170.4" stroke="#000" stroke-width="1.1" fill="none"/><rect x="1158.1" y="134.4" width="676.1" height="397.8" fill="none" stroke="#262626" stroke-width="1.15"/><text x="1158.1" y="549.7" text-anchor="middle" font-family='"Liberation Sans",sans-serif' font-size="16.4">0</text><text x="1154.5" y="537.1" text-anchor="end" font-family='"Liberation Sans",sans-serif' font-size="16.4">0</text><text x="1263.74" y="549.7" text-anchor="middle" font-family='"Liberation Sans",sans-serif' font-size="16.4">20</text><text x="1154.5" y="474.94" text-anchor="end" font-family='"Liberation Sans",sans-serif' font-size="16.4">20</text><text x="1369.38" y="549.7" text-anchor="middle" font-family='"Liberation Sans",sans-serif' font-size="16.4">40</text><text x="1154.5" y="412.79" text-anchor="end" font-family='"Liberation Sans",sans-serif' font-size="16.4">40</text><text x="1475.02" y="549.7" text-anchor="middle" font-family='"Liberation Sans",sans-serif' font-size="16.4">60</text><text x="1154.5" y="350.63" text-anchor="end" font-family='"Liberation Sans",sans-serif' font-size="16.4">60</text><text x="1580.66" y="549.7" text-anchor="middle" font-family='"Liberation Sans",sans-serif' font-size="16.4">80</text><text x="1154.5" y="288.48" text-anchor="end" font-family='"Liberation Sans",sans-serif' font-size="16.4">80</text><text x="1686.3" y="549.7" text-anchor="middle" font-family='"Liberation Sans",sans-serif' font-size="16.4">100</text><text x="1154.5" y="226.32" text-anchor="end" font-family='"Liberation Sans",sans-serif' font-size="16.4">100</text><text x="1791.94" y="549.7" text-anchor="middle" font-family='"Liberation Sans",sans-serif' font-size="16.4">120</text><text x="1154.5" y="164.16" text-anchor="end" font-family='"Liberation Sans",sans-serif' font-size="16.4">120</text>
<rect x="1842.8" y="512.01" width="34.6" height="20.49" fill="#263ea8"/><rect x="1842.8" y="492.12" width="34.6" height="20.49" fill="#1652cd"/><rect x="1842.8" y="472.23" width="34.6" height="20.49" fill="#1064dc"/><rect x="1842.8" y="452.34" width="34.6" height="20.49" fill="#1272d9"/><rect x="1842.8" y="432.45" width="34.6" height="20.49" fill="#1481d6"/><rect x="1842.8" y="412.56" width="34.6" height="20.49" fill="#0e8fd1"/><rect x="1842.8" y="392.67" width="34.6" height="20.49" fill="#099dcc"/><rect x="1842.8" y="372.78" width="34.6" height="20.49" fill="#0da7c3"/><rect x="1842.8" y="352.89" width="34.6" height="20.49" fill="#1eafb3"/><rect x="1842.8" y="333" width="34.6" height="20.49" fill="#2eb7a4"/><rect x="1842.8" y="313.11" width="34.6" height="20.49" fill="#52ba92"/><rect x="1842.8" y="293.22" width="34.6" height="20.49" fill="#74bd81"/><rect x="1842.8" y="273.33" width="34.6" height="20.49" fill="#95be71"/><rect x="1842.8" y="253.44" width="34.6" height="20.49" fill="#b3bd65"/><rect x="1842.8" y="233.55" width="34.6" height="20.49" fill="#d1bb59"/><rect x="1842.8" y="213.66" width="34.6" height="20.49" fill="#e2c04b"/><rect x="1842.8" y="193.77" width="34.6" height="20.49" fill="#f4c63b"/><rect x="1842.8" y="173.88" width="34.6" height="20.49" fill="#fdd22b"/><rect x="1842.8" y="153.99" width="34.6" height="20.49" fill="#fbe61d"/><rect x="1842.8" y="134.1" width="34.6" height="20.49" fill="#f9f90f"/><path d="M1877.4 532.12H1867M1877.4 525.97H1867M1877.4 521.21H1867M1877.4 517.31H1867M1877.4 514.02H1867M1877.4 511.17H1867M1877.4 508.65H1867M1877.4 506.4H1857M1877.4 491.59H1867M1877.4 482.93H1867M1877.4 476.78H1867M1877.4 472.02H1867M1877.4 468.12H1867M1877.4 464.83H1867M1877.4 461.98H1867M1877.4 459.46H1867M1877.4 457.21H1857M1877.4 442.4H1867M1877.4 433.74H1867M1877.4 427.59H1867M1877.4 422.83H1867M1877.4 418.93H1867M1877.4 415.64H1867M1877.4 412.79H1867M1877.4 410.27H1867M1877.4 408.02H1857M1877.4 393.21H1867M1877.4 384.55H1867M1877.4 378.4H1867M1877.4 373.64H1867M1877.4 369.74H1867M1877.4 366.45H1867M1877.4 363.6H1867M1877.4 361.08H1867M1877.4 358.83H1857M1877.4 344.02H1867M1877.4 335.36H1867M1877.4 329.21H1867M1877.4 324.45H1867M1877.4 320.55H1867M1877.4 317.26H1867M1877.4 314.41H1867M1877.4 311.89H1867M1877.4 309.64H1857M1877.4 294.83H1867M1877.4 286.17H1867M1877.4 280.02H1867M1877.4 275.26H1867M1877.4 271.36H1867M1877.4 268.07H1867M1877.4 265.22H1867M1877.4 262.7H1867M1877.4 260.45H1857M1877.4 245.64H1867M1877.4 236.98H1867M1877.4 230.83H1867M1877.4 226.07H1867M1877.4 222.17H1867M1877.4 218.88H1867M1877.4 216.03H1867M1877.4 213.51H1867M1877.4 211.26H1857M1877.4 196.45H1867M1877.4 187.79H1867M1877.4 181.64H1867M1877.4 176.88H1867M1877.4 172.98H1867M1877.4 169.69H1867M1877.4 166.84H1867M1877.4 164.32H1867M1877.4 162.07H1857M1877.4 147.26H1867M1877.4 138.6H1867" stroke="#000" stroke-width="1.1" fill="none"/><path d="M1877.4 134.4V532.2" stroke="#000" stroke-width="1.2"/><text x="1881.2" y="513.1" font-family='"Liberation Sans",sans-serif' font-size="16.4">10</text><text x="1901" y="507.2" font-family='"Liberation Sans",sans-serif' font-size="10.6">0</text><text x="1881.2" y="463.91" font-family='"Liberation Sans",sans-serif' font-size="16.4">10</text><text x="1901" y="458.01" font-family='"Liberation Sans",sans-serif' font-size="10.6">1</text><text x="1881.2" y="414.72" font-family='"Liberation Sans",sans-serif' font-size="16.4">10</text><text x="1901" y="408.82" font-family='"Liberation Sans",sans-serif' font-size="10.6">2</text><text x="1881.2" y="365.53" font-family='"Liberation Sans",sans-serif' font-size="16.4">10</text><text x="1901" y="359.63" font-family='"Liberation Sans",sans-serif' font-size="10.6">3</text><text x="1881.2" y="316.34" font-family='"Liberation Sans",sans-serif' font-size="16.4">10</text><text x="1901" y="310.44" font-family='"Liberation Sans",sans-serif' font-size="10.6">4</text><text x="1881.2" y="267.15" font-family='"Liberation Sans",sans-serif' font-size="16.4">10</text><text x="1901" y="261.25" font-family='"Liberation Sans",sans-serif' font-size="10.6">5</text><text x="1881.2" y="217.96" font-family='"Liberation Sans",sans-serif' font-size="16.4">10</text><text x="1901" y="212.06" font-family='"Liberation Sans",sans-serif' font-size="10.6">6</text><text x="1881.2" y="168.77" font-family='"Liberation Sans",sans-serif' font-size="16.4">10</text><text x="1901" y="162.87" font-family='"Liberation Sans",sans-serif' font-size="10.6">7</text>
<rect x="1562.5" y="118.3" width="169.2" height="131.3" fill="#fff" stroke="#333" stroke-width="1.1"/><path d="M1562.5 140.18H1731.7" stroke="#333" stroke-width="1.1"/><text x="1647.1" y="133.04" text-anchor="middle" font-family='"Liberation Sans",sans-serif' font-size="16.2">xyMultiplicityDSSD1</text><text x="1571.9" y="155.72" font-family='"Liberation Sans",sans-serif' font-size="16.2">Entries</text><text x="1722.9" y="155.72" text-anchor="end" font-family='"Liberation Sans",sans-serif' font-size="16.2">70352682</text><text x="1571.9" y="177.61" font-family='"Liberation Sans",sans-serif' font-size="16.2">Mean x</text><text x="1722.9" y="177.61" text-anchor="end" font-family='"Liberation Sans",sans-serif' font-size="16.2">0.3842</text><text x="1571.9" y="199.49" font-family='"Liberation Sans",sans-serif' font-size="16.2">Mean y</text><text x="1722.9" y="199.49" text-anchor="end" font-family='"Liberation Sans",sans-serif' font-size="16.2">2.677</text><text x="1571.9" y="221.38" font-family='"Liberation Sans",sans-serif' font-size="16.2">Std Dev x</text><text x="1722.9" y="221.38" text-anchor="end" font-family='"Liberation Sans",sans-serif' font-size="16.2">1.170</text><text x="1571.9" y="243.26" font-family='"Liberation Sans",sans-serif' font-size="16.2">Std Dev y</text><text x="1722.9" y="243.26" text-anchor="end" font-family='"Liberation Sans",sans-serif' font-size="16.2">8.083</text>
<rect x="1078.1" y="566.7" width="9.9" height="10" fill="#b6c8e6"/>
<rect x="312.4" y="631.5" width="676.1" height="397.8" fill="#fff"/>
<clipPath id="hc3"><rect x="312.4" y="631.5" width="676.1" height="397.8"/></clipPath><g clip-path="url(#hc3)"><path fill="#1652cd" d="M882.86 1026.19H888.14V1029.3H882.86ZM893.42 1026.19H925.12V1029.3H893.42ZM460.3 1023.08H465.58V1026.19H460.3ZM486.71 1023.08H497.27V1026.19H486.71ZM507.84 1023.08H513.12V1026.19H507.84ZM523.68 1023.08H528.96V1026.19H523.68ZM581.78 1023.08H587.07V1026.19H581.78ZM602.91 1023.08H613.48V1026.19H602.91ZM634.6 1023.08H639.89V1026.19H634.6ZM671.58 1023.08H676.86V1026.19H671.58ZM708.55 1023.08H713.83V1026.19H708.55ZM719.12 1023.08H724.4V1026.19H719.12ZM729.68 1023.08H745.53V1026.19H729.68ZM750.81 1023.08H761.37V1026.19H750.81ZM771.94 1023.08H798.35V1026.19H771.94ZM808.91 1023.08H824.76V1026.19H808.91ZM830.04 1023.08H840.6V1026.19H830.04ZM856.45 1023.08H872.3V1026.19H856.45ZM909.27 1023.08H914.55V1026.19H909.27ZM925.12 1023.08H930.4V1026.19H925.12ZM439.17 1019.98H455.01V1023.08H439.17ZM460.3 1019.98H470.86V1023.08H460.3ZM491.99 1019.98H497.27V1023.08H491.99ZM502.55 1019.98H513.12V1023.08H502.55ZM534.25 1019.98H544.81V1023.08H534.25ZM555.37 1019.98H565.94V1023.08H555.37ZM571.22 1019.98H576.5V1023.08H571.22ZM587.07 1019.98H592.35V1023.08H587.07ZM602.91 1019.98H618.76V1023.08H602.91ZM624.04 1019.98H676.86V1023.08H624.04ZM692.71 1019.98H719.12V1023.08H692.71ZM729.68 1019.98H745.53V1023.08H729.68ZM756.09 1019.98H771.94V1023.08H756.09ZM782.5 1019.98H787.78V1023.08H782.5ZM793.06 1019.98H798.35V1023.08H793.06ZM814.19 1019.98H824.76V1023.08H814.19ZM830.04 1019.98H835.32V1023.08H830.04ZM845.89 1019.98H851.17V1023.08H845.89ZM861.73 1019.98H867.01V1023.08H861.73ZM433.89 1016.87H439.17V1019.98H433.89ZM444.45 1016.87H470.86V1019.98H444.45ZM481.42 1016.87H502.55V1019.98H481.42ZM513.12 1016.87H523.68V1019.98H513.12ZM528.96 1016.87H544.81V1019.98H528.96ZM560.66 1016.87H571.22V1019.98H560.66ZM576.5 1016.87H592.35V1019.98H576.5ZM602.91 1016.87H618.76V1019.98H602.91ZM624.04 1016.87H639.89V1019.98H624.04ZM650.45 1016.87H655.73V1019.98H650.45ZM661.01 1016.87H666.3V1019.98H661.01ZM682.14 1016.87H687.42V1019.98H682.14ZM703.27 1016.87H708.55V1019.98H703.27ZM719.12 1016.87H729.68V1019.98H719.12ZM745.53 1016.87H756.09V1019.98H745.53ZM782.5 1016.87H787.78V1019.98H782.5ZM793.06 1016.87H808.91V1019.98H793.06ZM814.19 1016.87H819.48V1019.98H814.19ZM824.76 1016.87H830.04V1019.98H824.76ZM835.32 1016.87H840.6V1019.98H835.32ZM407.48 1013.76H412.76V1016.87H407.48ZM423.32 1013.76H428.6V1016.87H423.32ZM433.89 1013.76H449.73V1016.87H433.89ZM455.01 1013.76H470.86V1016.87H455.01ZM481.42 1013.76H486.71V1016.87H481.42ZM497.27 1013.76H502.55V1016.87H497.27ZM507.84 1013.76H518.4V1016.87H507.84ZM544.81 1013.76H550.09V1016.87H544.81ZM587.07 1013.76H592.35V1016.87H587.07ZM608.19 1013.76H613.48V1016.87H608.19ZM645.17 1013.76H650.45V1016.87H645.17ZM661.01 1013.76H666.3V1016.87H661.01ZM745.53 1013.76H750.81V1016.87H745.53ZM819.48 1013.76H824.76V1016.87H819.48ZM830.04 1013.76H835.32V1016.87H830.04ZM412.76 1010.65H418.04V1013.76H412.76ZM423.32 1010.65H428.6V1013.76H423.32ZM433.89 1010.65H439.17V1013.76H433.89ZM449.73 1010.65H455.01V1013.76H449.73ZM460.3 1010.65H465.58V1013.76H460.3ZM476.14 1010.65H481.42V1013.76H476.14ZM486.71 1010.65H491.99V1013.76H486.71ZM518.4 1010.65H523.68V1013.76H518.4ZM555.37 1010.65H560.66V1013.76H555.37ZM624.04 1010.65H629.32V1013.76H624.04ZM655.73 1010.65H661.01V1013.76H655.73ZM697.99 1010.65H703.27V1013.76H697.99ZM750.81 1010.65H756.09V1013.76H750.81ZM761.37 1010.65H771.94V1013.76H761.37ZM851.17 1010.65H856.45V1013.76H851.17ZM381.07 1007.55H386.35V1010.65H381.07ZM402.19 1007.55H418.04V1010.65H402.19ZM423.32 1007.55H428.6V1010.65H423.32ZM444.45 1007.55H449.73V1010.65H444.45ZM460.3 1007.55H465.58V1010.65H460.3ZM497.27 1007.55H502.55V1010.65H497.27ZM391.63 1004.44H396.91V1007.55H391.63ZM402.19 1004.44H412.76V1007.55H402.19ZM423.32 1004.44H433.89V1007.55H423.32ZM439.17 1004.44H444.45V1007.55H439.17ZM449.73 1004.44H455.01V1007.55H449.73ZM481.42 1004.44H486.71V1007.55H481.42ZM666.3 1004.44H671.58V1007.55H666.3ZM724.4 1004.44H729.68V1007.55H724.4ZM396.91 1001.33H418.04V1004.44H396.91ZM428.6 1001.33H433.89V1004.44H428.6ZM534.25 1001.33H539.53V1004.44H534.25ZM576.5 1001.33H581.78V1004.44H576.5ZM597.63 1001.33H602.91V1004.44H597.63ZM782.5 1001.33H787.78V1004.44H782.5ZM819.48 1001.33H824.76V1004.44H819.48ZM386.35 998.22H391.63V1001.33H386.35ZM418.04 998.22H428.6V1001.33H418.04ZM439.17 998.22H449.73V1001.33H439.17ZM592.35 998.22H597.63V1001.33H592.35ZM624.04 998.22H629.32V1001.33H624.04ZM650.45 998.22H655.73V1001.33H650.45ZM697.99 998.22H703.27V1001.33H697.99ZM386.35 995.11H402.19V998.22H386.35ZM444.45 995.11H455.01V998.22H444.45ZM534.25 995.11H539.53V998.22H534.25ZM687.42 995.11H692.71V998.22H687.42ZM782.5 995.11H787.78V998.22H782.5ZM312.4 992.01H317.68V995.11H312.4ZM396.91 992.01H402.19V995.11H396.91ZM407.48 992.01H412.76V995.11H407.48ZM423.32 992.01H428.6V995.11H423.32ZM439.17 992.01H444.45V995.11H439.17ZM587.07 992.01H592.35V995.11H587.07ZM655.73 992.01H661.01V995.11H655.73ZM312.4 988.9H317.68V992.01H312.4ZM381.07 988.9H402.19V992.01H381.07ZM407.48 988.9H418.04V992.01H407.48ZM439.17 988.9H444.45V992.01H439.17ZM486.71 988.9H491.99V992.01H486.71ZM513.12 988.9H518.4V992.01H513.12ZM560.66 988.9H565.94V992.01H560.66ZM571.22 988.9H576.5V992.01H571.22ZM602.91 988.9H608.19V992.01H602.91ZM655.73 988.9H661.01V992.01H655.73ZM745.53 988.9H750.81V992.01H745.53ZM312.4 985.79H317.68V988.9H312.4ZM322.96 985.79H333.53V988.9H322.96ZM381.07 985.79H391.63V988.9H381.07ZM402.19 985.79H412.76V988.9H402.19ZM418.04 985.79H423.32V988.9H418.04ZM602.91 985.79H613.48V988.9H602.91ZM629.32 985.79H634.6V988.9H629.32ZM745.53 985.79H750.81V988.9H745.53ZM808.91 985.79H814.19V988.9H808.91ZM312.4 982.68H317.68V985.79H312.4ZM322.96 982.68H328.25V985.79H322.96ZM381.07 982.68H391.63V985.79H381.07ZM396.91 982.68H402.19V985.79H396.91ZM407.48 982.68H418.04V985.79H407.48ZM433.89 982.68H439.17V985.79H433.89ZM491.99 982.68H497.27V985.79H491.99ZM671.58 982.68H676.86V985.79H671.58ZM312.4 979.57H322.96V982.68H312.4ZM344.09 979.57H349.37V982.68H344.09ZM381.07 979.57H386.35V982.68H381.07ZM396.91 979.57H402.19V982.68H396.91ZM476.14 979.57H481.42V982.68H476.14ZM528.96 979.57H539.53V982.68H528.96ZM724.4 979.57H729.68V982.68H724.4ZM312.4 976.47H322.96V979.57H312.4ZM328.25 976.47H338.81V979.57H328.25ZM407.48 976.47H412.76V979.57H407.48ZM433.89 976.47H439.17V979.57H433.89ZM576.5 976.47H581.78V979.57H576.5ZM692.71 976.47H697.99V979.57H692.71ZM322.96 973.36H333.53V976.47H322.96ZM338.81 973.36H349.37V976.47H338.81ZM375.78 973.36H386.35V976.47H375.78ZM391.63 973.36H396.91V976.47H391.63ZM402.19 973.36H407.48V976.47H402.19ZM491.99 973.36H497.27V976.47H491.99ZM312.4 970.25H317.68V973.36H312.4ZM328.25 970.25H344.09V973.36H328.25ZM349.37 970.25H354.66V973.36H349.37ZM391.63 970.25H396.91V973.36H391.63ZM444.45 970.25H449.73V973.36H444.45ZM465.58 970.25H470.86V973.36H465.58ZM608.19 970.25H613.48V973.36H608.19ZM639.89 970.25H645.17V973.36H639.89ZM333.53 967.14H344.09V970.25H333.53ZM381.07 967.14H386.35V970.25H381.07ZM391.63 967.14H396.91V970.25H391.63ZM671.58 967.14H676.86V970.25H671.58ZM840.6 967.14H845.89V970.25H840.6ZM322.96 964.04H328.25V967.14H322.96ZM333.53 964.04H338.81V967.14H333.53ZM375.78 964.04H386.35V967.14H375.78ZM476.14 964.04H481.42V967.14H476.14ZM624.04 964.04H629.32V967.14H624.04ZM312.4 960.93H322.96V964.04H312.4ZM333.53 960.93H344.09V964.04H333.53ZM349.37 960.93H354.66V964.04H349.37ZM375.78 960.93H381.07V964.04H375.78ZM502.55 960.93H507.84V964.04H502.55ZM328.25 957.82H333.53V960.93H328.25ZM338.81 957.82H344.09V960.93H338.81ZM375.78 957.82H386.35V960.93H375.78ZM418.04 957.82H423.32V960.93H418.04ZM486.71 957.82H497.27V960.93H486.71ZM338.81 954.71H344.09V957.82H338.81ZM354.66 954.71H359.94V957.82H354.66ZM375.78 954.71H381.07V957.82H375.78ZM449.73 954.71H455.01V957.82H449.73ZM491.99 954.71H497.27V957.82H491.99ZM349.37 951.6H354.66V954.71H349.37ZM375.78 951.6H386.35V954.71H375.78ZM396.91 951.6H402.19V954.71H396.91ZM455.01 951.6H460.3V954.71H455.01ZM491.99 951.6H497.27V954.71H491.99ZM344.09 948.5H354.66V951.6H344.09ZM375.78 948.5H381.07V951.6H375.78ZM867.01 948.5H872.3V951.6H867.01ZM349.37 945.39H359.94V948.5H349.37ZM423.32 945.39H428.6V948.5H423.32ZM449.73 945.39H455.01V948.5H449.73ZM470.86 945.39H476.14V948.5H470.86ZM328.25 942.28H333.53V945.39H328.25ZM349.37 942.28H354.66V945.39H349.37ZM375.78 942.28H386.35V945.39H375.78ZM402.19 942.28H407.48V945.39H402.19ZM328.25 939.17H333.53V942.28H328.25ZM375.78 939.17H386.35V942.28H375.78ZM386.35 936.07H391.63V939.17H386.35ZM455.01 936.07H460.3V939.17H455.01ZM513.12 936.07H518.4V939.17H513.12ZM581.78 936.07H587.07V939.17H581.78ZM344.09 932.96H359.94V936.07H344.09ZM375.78 932.96H386.35V936.07H375.78ZM322.96 929.85H328.25V932.96H322.96ZM349.37 929.85H354.66V932.96H349.37ZM381.07 929.85H386.35V932.96H381.07ZM513.12 929.85H518.4V932.96H513.12ZM375.78 926.74H381.07V929.85H375.78ZM338.81 923.63H349.37V926.74H338.81ZM365.22 923.63H381.07V926.74H365.22ZM523.68 923.63H528.96V926.74H523.68ZM349.37 920.53H354.66V923.63H349.37ZM359.94 920.53H365.22V923.63H359.94ZM370.5 920.53H386.35V923.63H370.5ZM396.91 920.53H402.19V923.63H396.91ZM359.94 917.42H365.22V920.53H359.94ZM375.78 917.42H381.07V920.53H375.78ZM460.3 917.42H465.58V920.53H460.3ZM365.22 914.31H370.5V917.42H365.22ZM375.78 914.31H386.35V917.42H375.78ZM808.91 914.31H814.19V917.42H808.91ZM370.5 911.2H381.07V914.31H370.5ZM349.37 908.1H365.22V911.2H349.37ZM713.83 908.1H719.12V911.2H713.83ZM359.94 904.99H381.07V908.1H359.94ZM460.3 904.99H465.58V908.1H460.3ZM359.94 901.88H365.22V904.99H359.94ZM370.5 901.88H375.78V904.99H370.5ZM354.66 898.77H381.07V901.88H354.66ZM608.19 898.77H613.48V901.88H608.19ZM359.94 895.66H375.78V898.77H359.94ZM381.07 895.66H386.35V898.77H381.07ZM365.22 892.56H381.07V895.66H365.22ZM365.22 889.45H370.5V892.56H365.22ZM375.78 889.45H386.35V892.56H375.78ZM359.94 886.34H370.5V889.45H359.94ZM375.78 886.34H386.35V889.45H375.78ZM365.22 883.23H370.5V886.34H365.22ZM375.78 883.23H386.35V886.34H375.78ZM375.78 880.12H381.07V883.23H375.78ZM359.94 877.02H370.5V880.12H359.94ZM375.78 877.02H386.35V880.12H375.78ZM465.58 877.02H470.86V880.12H465.58ZM365.22 873.91H386.35V877.02H365.22ZM359.94 870.8H365.22V873.91H359.94ZM370.5 870.8H375.78V873.91H370.5ZM381.07 870.8H386.35V873.91H381.07ZM365.22 867.69H370.5V870.8H365.22ZM381.07 867.69H386.35V870.8H381.07ZM365.22 864.59H375.78V867.69H365.22ZM381.07 864.59H386.35V867.69H381.07ZM370.5 861.48H381.07V864.59H370.5ZM365.22 858.37H370.5V861.48H365.22ZM375.78 858.37H386.35V861.48H375.78ZM359.94 855.26H365.22V858.37H359.94ZM370.5 855.26H375.78V858.37H370.5ZM381.07 855.26H386.35V858.37H381.07ZM359.94 849.05H365.22V852.15H359.94ZM365.22 845.94H375.78V849.05H365.22ZM365.22 842.83H375.78V845.94H365.22ZM381.07 842.83H386.35V845.94H381.07ZM381.07 839.72H386.35V842.83H381.07ZM370.5 836.62H386.35V839.72H370.5ZM375.78 833.51H381.07V836.62H375.78ZM370.5 830.4H375.78V833.51H370.5ZM365.22 827.29H375.78V830.4H365.22ZM375.78 824.18H386.35V827.29H375.78ZM370.5 821.08H375.78V824.18H370.5ZM370.5 817.97H375.78V821.08H370.5ZM608.19 817.97H613.48V821.08H608.19ZM370.5 814.86H386.35V817.97H370.5ZM370.5 811.75H375.78V814.86H370.5ZM782.5 811.75H787.78V814.86H782.5ZM381.07 805.54H386.35V808.65H381.07Z"/><path fill="#1064dc" d="M861.73 1026.19H882.86V1029.3H861.73ZM888.14 1026.19H893.42V1029.3H888.14ZM428.6 1023.08H433.89V1026.19H428.6ZM444.45 1023.08H449.73V1026.19H444.45ZM476.14 1023.08H486.71V1026.19H476.14ZM497.27 1023.08H507.84V1026.19H497.27ZM513.12 1023.08H523.68V1026.19H513.12ZM528.96 1023.08H555.37V1026.19H528.96ZM565.94 1023.08H571.22V1026.19H565.94ZM587.07 1023.08H602.91V1026.19H587.07ZM613.48 1023.08H624.04V1026.19H613.48ZM629.32 1023.08H634.6V1026.19H629.32ZM639.89 1023.08H671.58V1026.19H639.89ZM676.86 1023.08H708.55V1026.19H676.86ZM713.83 1023.08H719.12V1026.19H713.83ZM724.4 1023.08H729.68V1026.19H724.4ZM761.37 1023.08H771.94V1026.19H761.37ZM824.76 1023.08H830.04V1026.19H824.76ZM407.48 1019.98H418.04V1023.08H407.48ZM428.6 1019.98H439.17V1023.08H428.6ZM455.01 1019.98H460.3V1023.08H455.01ZM470.86 1019.98H476.14V1023.08H470.86ZM481.42 1019.98H491.99V1023.08H481.42ZM513.12 1019.98H528.96V1023.08H513.12ZM544.81 1019.98H555.37V1023.08H544.81ZM565.94 1019.98H571.22V1023.08H565.94ZM576.5 1019.98H581.78V1023.08H576.5ZM592.35 1019.98H602.91V1023.08H592.35ZM618.76 1019.98H624.04V1023.08H618.76ZM682.14 1019.98H687.42V1023.08H682.14ZM724.4 1019.98H729.68V1023.08H724.4ZM745.53 1019.98H750.81V1023.08H745.53ZM771.94 1019.98H777.22V1023.08H771.94ZM824.76 1019.98H830.04V1023.08H824.76ZM402.19 1016.87H433.89V1019.98H402.19ZM439.17 1016.87H444.45V1019.98H439.17ZM502.55 1016.87H513.12V1019.98H502.55ZM571.22 1016.87H576.5V1019.98H571.22ZM676.86 1016.87H682.14V1019.98H676.86ZM396.91 1013.76H407.48V1016.87H396.91ZM412.76 1013.76H423.32V1016.87H412.76ZM381.07 1010.65H391.63V1013.76H381.07ZM396.91 1010.65H407.48V1013.76H396.91ZM386.35 1007.55H402.19V1010.65H386.35ZM386.35 1004.44H391.63V1007.55H386.35ZM412.76 1004.44H418.04V1007.55H412.76ZM391.63 1001.33H396.91V1004.44H391.63ZM381.07 995.11H386.35V998.22H381.07ZM375.78 992.01H391.63V995.11H375.78ZM317.68 988.9H328.25V992.01H317.68ZM317.68 982.68H322.96V985.79H317.68ZM333.53 982.68H338.81V985.79H333.53ZM375.78 982.68H381.07V985.79H375.78ZM322.96 979.57H328.25V982.68H322.96ZM333.53 979.57H338.81V982.68H333.53ZM365.22 979.57H370.5V982.68H365.22ZM375.78 979.57H381.07V982.68H375.78ZM322.96 976.47H328.25V979.57H322.96ZM349.37 976.47H354.66V979.57H349.37ZM375.78 976.47H381.07V979.57H375.78ZM317.68 973.36H322.96V976.47H317.68ZM333.53 973.36H338.81V976.47H333.53ZM370.5 973.36H375.78V976.47H370.5ZM322.96 970.25H328.25V973.36H322.96ZM344.09 970.25H349.37V973.36H344.09ZM370.5 970.25H381.07V973.36H370.5ZM349.37 967.14H354.66V970.25H349.37ZM375.78 967.14H381.07V970.25H375.78ZM349.37 964.04H359.94V967.14H349.37ZM359.94 960.93H365.22V964.04H359.94ZM370.5 960.93H375.78V964.04H370.5ZM349.37 957.82H354.66V960.93H349.37ZM370.5 954.71H375.78V957.82H370.5ZM354.66 951.6H375.78V954.71H354.66ZM354.66 948.5H359.94V951.6H354.66ZM365.22 948.5H375.78V951.6H365.22ZM359.94 945.39H365.22V948.5H359.94ZM375.78 945.39H381.07V948.5H375.78ZM359.94 942.28H375.78V945.39H359.94ZM354.66 939.17H375.78V942.28H354.66ZM359.94 936.07H375.78V939.17H359.94ZM365.22 932.96H375.78V936.07H365.22ZM359.94 929.85H365.22V932.96H359.94ZM370.5 929.85H375.78V932.96H370.5ZM354.66 926.74H365.22V929.85H354.66ZM370.5 926.74H375.78V929.85H370.5ZM365.22 920.53H370.5V923.63H365.22ZM365.22 917.42H375.78V920.53H365.22ZM359.94 914.31H365.22V917.42H359.94ZM370.5 914.31H375.78V917.42H370.5ZM365.22 911.2H370.5V914.31H365.22ZM365.22 908.1H375.78V911.2H365.22ZM365.22 901.88H370.5V904.99H365.22ZM370.5 889.45H375.78V892.56H370.5ZM370.5 886.34H375.78V889.45H370.5ZM370.5 883.23H375.78V886.34H370.5ZM365.22 880.12H375.78V883.23H365.22ZM375.78 867.69H381.07V870.8H375.78ZM375.78 864.59H381.07V867.69H375.78ZM370.5 858.37H375.78V861.48H370.5ZM370.5 852.15H375.78V855.26H370.5ZM370.5 849.05H381.07V852.15H370.5ZM375.78 845.94H381.07V849.05H375.78ZM375.78 839.72H381.07V842.83H375.78Z"/><path fill="#1272d9" d="M840.6 1026.19H845.89V1029.3H840.6ZM851.17 1026.19H861.73V1029.3H851.17ZM396.91 1023.08H428.6V1026.19H396.91ZM433.89 1023.08H444.45V1026.19H433.89ZM449.73 1023.08H460.3V1026.19H449.73ZM465.58 1023.08H476.14V1026.19H465.58ZM555.37 1023.08H565.94V1026.19H555.37ZM571.22 1023.08H581.78V1026.19H571.22ZM745.53 1023.08H750.81V1026.19H745.53ZM418.04 1019.98H428.6V1023.08H418.04ZM581.78 1019.98H587.07V1023.08H581.78ZM381.07 1016.87H386.35V1019.98H381.07ZM391.63 1016.87H402.19V1019.98H391.63ZM381.07 1013.76H396.91V1016.87H381.07ZM375.78 1010.65H381.07V1013.76H375.78ZM391.63 1010.65H396.91V1013.76H391.63ZM375.78 1007.55H381.07V1010.65H375.78ZM365.22 1004.44H375.78V1007.55H365.22ZM381.07 1004.44H386.35V1007.55H381.07ZM375.78 1001.33H391.63V1004.44H375.78ZM370.5 998.22H386.35V1001.33H370.5ZM391.63 998.22H396.91V1001.33H391.63ZM312.4 995.11H322.96V998.22H312.4ZM370.5 995.11H381.07V998.22H370.5ZM317.68 992.01H328.25V995.11H317.68ZM333.53 992.01H338.81V995.11H333.53ZM344.09 992.01H349.37V995.11H344.09ZM370.5 992.01H375.78V995.11H370.5ZM328.25 988.9H338.81V992.01H328.25ZM370.5 988.9H381.07V992.01H370.5ZM317.68 985.79H322.96V988.9H317.68ZM333.53 985.79H349.37V988.9H333.53ZM375.78 985.79H381.07V988.9H375.78ZM328.25 982.68H333.53V985.79H328.25ZM338.81 982.68H349.37V985.79H338.81ZM328.25 979.57H333.53V982.68H328.25ZM338.81 979.57H344.09V982.68H338.81ZM349.37 979.57H365.22V982.68H349.37ZM370.5 979.57H375.78V982.68H370.5ZM338.81 976.47H349.37V979.57H338.81ZM354.66 976.47H359.94V979.57H354.66ZM365.22 976.47H375.78V979.57H365.22ZM349.37 973.36H365.22V976.47H349.37ZM354.66 970.25H370.5V973.36H354.66ZM354.66 967.14H375.78V970.25H354.66ZM359.94 964.04H375.78V967.14H359.94ZM354.66 960.93H359.94V964.04H354.66ZM365.22 960.93H370.5V964.04H365.22ZM354.66 957.82H375.78V960.93H354.66ZM359.94 954.71H370.5V957.82H359.94ZM359.94 948.5H365.22V951.6H359.94ZM365.22 945.39H375.78V948.5H365.22ZM354.66 936.07H359.94V939.17H354.66ZM359.94 932.96H365.22V936.07H359.94ZM365.22 929.85H370.5V932.96H365.22ZM365.22 926.74H370.5V929.85H365.22ZM354.66 920.53H359.94V923.63H354.66ZM375.78 855.26H381.07V858.37H375.78Z"/><path fill="#1481d6" d="M803.63 1026.19H808.91V1029.3H803.63ZM819.48 1026.19H840.6V1029.3H819.48ZM845.89 1026.19H851.17V1029.3H845.89ZM386.35 1023.08H396.91V1026.19H386.35ZM375.78 1019.98H381.07V1023.08H375.78ZM386.35 1019.98H407.48V1023.08H386.35ZM370.5 1016.87H381.07V1019.98H370.5ZM386.35 1016.87H391.63V1019.98H386.35ZM370.5 1013.76H381.07V1016.87H370.5ZM359.94 1010.65H375.78V1013.76H359.94ZM354.66 1007.55H375.78V1010.65H354.66ZM349.37 1004.44H365.22V1007.55H349.37ZM375.78 1004.44H381.07V1007.55H375.78ZM312.4 1001.33H322.96V1004.44H312.4ZM359.94 1001.33H375.78V1004.44H359.94ZM312.4 998.22H338.81V1001.33H312.4ZM349.37 998.22H370.5V1001.33H349.37ZM322.96 995.11H349.37V998.22H322.96ZM354.66 995.11H370.5V998.22H354.66ZM328.25 992.01H333.53V995.11H328.25ZM338.81 992.01H344.09V995.11H338.81ZM349.37 992.01H370.5V995.11H349.37ZM338.81 988.9H370.5V992.01H338.81ZM349.37 985.79H375.78V988.9H349.37ZM349.37 982.68H375.78V985.79H349.37ZM359.94 976.47H365.22V979.57H359.94ZM365.22 973.36H370.5V976.47H365.22Z"/><path fill="#0e8fd1" d="M740.24 1026.19H745.53V1029.3H740.24ZM766.65 1026.19H771.94V1029.3H766.65ZM793.06 1026.19H803.63V1029.3H793.06ZM808.91 1026.19H819.48V1029.3H808.91ZM370.5 1023.08H386.35V1026.19H370.5ZM359.94 1019.98H375.78V1023.08H359.94ZM381.07 1019.98H386.35V1023.08H381.07ZM359.94 1016.87H370.5V1019.98H359.94ZM349.37 1013.76H370.5V1016.87H349.37ZM349.37 1010.65H359.94V1013.76H349.37ZM312.4 1007.55H317.68V1010.65H312.4ZM344.09 1007.55H354.66V1010.65H344.09ZM312.4 1004.44H349.37V1007.55H312.4ZM322.96 1001.33H359.94V1004.44H322.96ZM338.81 998.22H349.37V1001.33H338.81ZM349.37 995.11H354.66V998.22H349.37Z"/><path fill="#099dcc" d="M470.86 1026.19H476.14V1029.3H470.86ZM481.42 1026.19H740.24V1029.3H481.42ZM745.53 1026.19H766.65V1029.3H745.53ZM771.94 1026.19H793.06V1029.3H771.94ZM349.37 1023.08H370.5V1026.19H349.37ZM349.37 1019.98H359.94V1023.08H349.37ZM344.09 1016.87H359.94V1019.98H344.09ZM344.09 1013.76H349.37V1016.87H344.09ZM312.4 1010.65H317.68V1013.76H312.4ZM338.81 1010.65H349.37V1013.76H338.81ZM317.68 1007.55H344.09V1010.65H317.68Z"/><path fill="#0da7c3" d="M391.63 1026.19H470.86V1029.3H391.63ZM476.14 1026.19H481.42V1029.3H476.14ZM333.53 1023.08H349.37V1026.19H333.53ZM333.53 1019.98H349.37V1023.08H333.53ZM338.81 1016.87H344.09V1019.98H338.81ZM333.53 1013.76H344.09V1016.87H333.53ZM317.68 1010.65H338.81V1013.76H317.68Z"/><path fill="#1eafb3" d="M365.22 1026.19H391.63V1029.3H365.22ZM328.25 1016.87H338.81V1019.98H328.25ZM312.4 1013.76H333.53V1016.87H312.4Z"/><path fill="#2eb7a4" d="M338.81 1026.19H365.22V1029.3H338.81ZM328.25 1023.08H333.53V1026.19H328.25ZM328.25 1019.98H333.53V1023.08H328.25ZM312.4 1016.87H328.25V1019.98H312.4Z"/><path fill="#52ba92" d="M328.25 1026.19H338.81V1029.3H328.25ZM312.4 1019.98H317.68V1023.08H312.4ZM322.96 1019.98H328.25V1023.08H322.96Z"/><path fill="#74bd81" d="M322.96 1026.19H328.25V1029.3H322.96ZM322.96 1023.08H328.25V1026.19H322.96ZM317.68 1019.98H322.96V1023.08H317.68Z"/><path fill="#b3bd65" d="M317.68 1026.19H322.96V1029.3H317.68Z"/><path fill="#d1bb59" d="M312.4 1023.08H322.96V1026.19H312.4Z"/><path fill="#f4c63b" d="M312.4 1026.19H317.68V1029.3H312.4Z"/></g>
<path d="M338.81 1029.3V1021.9M365.22 1029.3V1021.9M391.63 1029.3V1021.9M418.04 1029.3V1015.1M444.45 1029.3V1021.9M470.86 1029.3V1021.9M497.27 1029.3V1021.9M523.68 1029.3V1015.1M550.09 1029.3V1021.9M576.5 1029.3V1021.9M602.91 1029.3V1021.9M629.32 1029.3V1015.1M655.73 1029.3V1021.9M682.14 1029.3V1021.9M708.55 1029.3V1021.9M734.96 1029.3V1015.1M761.37 1029.3V1021.9M787.78 1029.3V1021.9M814.19 1029.3V1021.9M840.6 1029.3V1015.1M867.01 1029.3V1021.9M893.42 1029.3V1021.9M919.83 1029.3V1021.9M946.24 1029.3V1015.1M972.65 1029.3V1021.9M312.4 1013.76H324.7M312.4 998.22H324.7M312.4 982.68H324.7M312.4 967.14H337.1M312.4 951.6H324.7M312.4 936.07H324.7M312.4 920.53H324.7M312.4 904.99H337.1M312.4 889.45H324.7M312.4 873.91H324.7M312.4 858.37H324.7M312.4 842.83H337.1M312.4 827.29H324.7M312.4 811.75H324.7M312.4 796.21H324.7M312.4 780.67H337.1M312.4 765.14H324.7M312.4 749.6H324.7M312.4 734.06H324.7M312.4 718.52H337.1M312.4 702.98H324.7M312.4 687.44H324.7M312.4 671.9H324.7M312.4 656.36H337.1M312.4 640.82H324.7" stroke="#000" stroke-width="1.1" fill="none"/><rect x="312.4" y="631.5" width="676.1" height="397.8" fill="none" stroke="#262626" stroke-width="1.15"/><text x="312.4" y="1046.8" text-anchor="middle" font-family='"Liberation Sans",sans-serif' font-size="16.4">0</text><text x="308.8" y="1034.2" text-anchor="end" font-family='"Liberation Sans",sans-serif' font-size="16.4">0</text><text x="418.04" y="1046.8" text-anchor="middle" font-family='"Liberation Sans",sans-serif' font-size="16.4">20</text><text x="308.8" y="972.04" text-anchor="end" font-family='"Liberation Sans",sans-serif' font-size="16.4">20</text><text x="523.68" y="1046.8" text-anchor="middle" font-family='"Liberation Sans",sans-serif' font-size="16.4">40</text><text x="308.8" y="909.89" text-anchor="end" font-family='"Liberation Sans",sans-serif' font-size="16.4">40</text><text x="629.32" y="1046.8" text-anchor="middle" font-family='"Liberation Sans",sans-serif' font-size="16.4">60</text><text x="308.8" y="847.73" text-anchor="end" font-family='"Liberation Sans",sans-serif' font-size="16.4">60</text><text x="734.96" y="1046.8" text-anchor="middle" font-family='"Liberation Sans",sans-serif' font-size="16.4">80</text><text x="308.8" y="785.57" text-anchor="end" font-family='"Liberation Sans",sans-serif' font-size="16.4">80</text><text x="840.6" y="1046.8" text-anchor="middle" font-family='"Liberation Sans",sans-serif' font-size="16.4">100</text><text x="308.8" y="723.42" text-anchor="end" font-family='"Liberation Sans",sans-serif' font-size="16.4">100</text><text x="946.24" y="1046.8" text-anchor="middle" font-family='"Liberation Sans",sans-serif' font-size="16.4">120</text><text x="308.8" y="661.26" text-anchor="end" font-family='"Liberation Sans",sans-serif' font-size="16.4">120</text>
<rect x="997.1" y="1009.11" width="34.6" height="20.49" fill="#263ea8"/><rect x="997.1" y="989.22" width="34.6" height="20.49" fill="#1652cd"/><rect x="997.1" y="969.33" width="34.6" height="20.49" fill="#1064dc"/><rect x="997.1" y="949.44" width="34.6" height="20.49" fill="#1272d9"/><rect x="997.1" y="929.55" width="34.6" height="20.49" fill="#1481d6"/><rect x="997.1" y="909.66" width="34.6" height="20.49" fill="#0e8fd1"/><rect x="997.1" y="889.77" width="34.6" height="20.49" fill="#099dcc"/><rect x="997.1" y="869.88" width="34.6" height="20.49" fill="#0da7c3"/><rect x="997.1" y="849.99" width="34.6" height="20.49" fill="#1eafb3"/><rect x="997.1" y="830.1" width="34.6" height="20.49" fill="#2eb7a4"/><rect x="997.1" y="810.21" width="34.6" height="20.49" fill="#52ba92"/><rect x="997.1" y="790.32" width="34.6" height="20.49" fill="#74bd81"/><rect x="997.1" y="770.43" width="34.6" height="20.49" fill="#95be71"/><rect x="997.1" y="750.54" width="34.6" height="20.49" fill="#b3bd65"/><rect x="997.1" y="730.65" width="34.6" height="20.49" fill="#d1bb59"/><rect x="997.1" y="710.76" width="34.6" height="20.49" fill="#e2c04b"/><rect x="997.1" y="690.87" width="34.6" height="20.49" fill="#f4c63b"/><rect x="997.1" y="670.98" width="34.6" height="20.49" fill="#fdd22b"/><rect x="997.1" y="651.09" width="34.6" height="20.49" fill="#fbe61d"/><rect x="997.1" y="631.2" width="34.6" height="20.49" fill="#f9f90f"/><path d="M1031.7 1029.29H1021.3M1031.7 1023.32H1021.3M1031.7 1018.69H1021.3M1031.7 1014.9H1021.3M1031.7 1011.7H1021.3M1031.7 1008.93H1021.3M1031.7 1006.49H1021.3M1031.7 1004.3H1011.3M1031.7 989.91H1021.3M1031.7 981.5H1021.3M1031.7 975.53H1021.3M1031.7 970.9H1021.3M1031.7 967.11H1021.3M1031.7 963.91H1021.3M1031.7 961.14H1021.3M1031.7 958.7H1021.3M1031.7 956.51H1011.3M1031.7 942.12H1021.3M1031.7 933.71H1021.3M1031.7 927.74H1021.3M1031.7 923.11H1021.3M1031.7 919.32H1021.3M1031.7 916.12H1021.3M1031.7 913.35H1021.3M1031.7 910.91H1021.3M1031.7 908.72H1011.3M1031.7 894.33H1021.3M1031.7 885.92H1021.3M1031.7 879.95H1021.3M1031.7 875.32H1021.3M1031.7 871.53H1021.3M1031.7 868.33H1021.3M1031.7 865.56H1021.3M1031.7 863.12H1021.3M1031.7 860.93H1011.3M1031.7 846.54H1021.3M1031.7 838.13H1021.3M1031.7 832.16H1021.3M1031.7 827.53H1021.3M1031.7 823.74H1021.3M1031.7 820.54H1021.3M1031.7 817.77H1021.3M1031.7 815.33H1021.3M1031.7 813.14H1011.3M1031.7 798.75H1021.3M1031.7 790.34H1021.3M1031.7 784.37H1021.3M1031.7 779.74H1021.3M1031.7 775.95H1021.3M1031.7 772.75H1021.3M1031.7 769.98H1021.3M1031.7 767.54H1021.3M1031.7 765.35H1011.3M1031.7 750.96H1021.3M1031.7 742.55H1021.3M1031.7 736.58H1021.3M1031.7 731.95H1021.3M1031.7 728.16H1021.3M1031.7 724.96H1021.3M1031.7 722.19H1021.3M1031.7 719.75H1021.3M1031.7 717.56H1011.3M1031.7 703.17H1021.3M1031.7 694.76H1021.3M1031.7 688.79H1021.3M1031.7 684.16H1021.3M1031.7 680.37H1021.3M1031.7 677.17H1021.3M1031.7 674.4H1021.3M1031.7 671.96H1021.3M1031.7 669.77H1011.3M1031.7 655.38H1021.3M1031.7 646.97H1021.3M1031.7 641H1021.3M1031.7 636.37H1021.3M1031.7 632.58H1021.3" stroke="#000" stroke-width="1.1" fill="none"/><path d="M1031.7 631.5V1029.3" stroke="#000" stroke-width="1.2"/><text x="1035.5" y="1011" font-family='"Liberation Sans",sans-serif' font-size="16.4">10</text><text x="1055.3" y="1005.1" font-family='"Liberation Sans",sans-serif' font-size="10.6">0</text><text x="1035.5" y="963.21" font-family='"Liberation Sans",sans-serif' font-size="16.4">10</text><text x="1055.3" y="957.31" font-family='"Liberation Sans",sans-serif' font-size="10.6">1</text><text x="1035.5" y="915.42" font-family='"Liberation Sans",sans-serif' font-size="16.4">10</text><text x="1055.3" y="909.52" font-family='"Liberation Sans",sans-serif' font-size="10.6">2</text><text x="1035.5" y="867.63" font-family='"Liberation Sans",sans-serif' font-size="16.4">10</text><text x="1055.3" y="861.73" font-family='"Liberation Sans",sans-serif' font-size="10.6">3</text><text x="1035.5" y="819.84" font-family='"Liberation Sans",sans-serif' font-size="16.4">10</text><text x="1055.3" y="813.94" font-family='"Liberation Sans",sans-serif' font-size="10.6">4</text><text x="1035.5" y="772.05" font-family='"Liberation Sans",sans-serif' font-size="16.4">10</text><text x="1055.3" y="766.15" font-family='"Liberation Sans",sans-serif' font-size="10.6">5</text><text x="1035.5" y="724.26" font-family='"Liberation Sans",sans-serif' font-size="16.4">10</text><text x="1055.3" y="718.36" font-family='"Liberation Sans",sans-serif' font-size="10.6">6</text><text x="1035.5" y="676.47" font-family='"Liberation Sans",sans-serif' font-size="16.4">10</text><text x="1055.3" y="670.57" font-family='"Liberation Sans",sans-serif' font-size="10.6">7</text>
<rect x="732.5" y="590.8" width="169.2" height="131.6" fill="#fff" stroke="#333" stroke-width="1.1"/><path d="M732.5 612.73H901.7" stroke="#333" stroke-width="1.1"/><text x="817.1" y="605.57" text-anchor="middle" font-family='"Liberation Sans",sans-serif' font-size="16.2">xyMultiplicityDSSD2</text><text x="741.9" y="628.3" font-family='"Liberation Sans",sans-serif' font-size="16.2">Entries</text><text x="892.9" y="628.3" text-anchor="end" font-family='"Liberation Sans",sans-serif' font-size="16.2">70352682</text><text x="741.9" y="650.23" font-family='"Liberation Sans",sans-serif' font-size="16.2">Mean x</text><text x="892.9" y="650.23" text-anchor="end" font-family='"Liberation Sans",sans-serif' font-size="16.2">0.09885</text><text x="741.9" y="672.17" font-family='"Liberation Sans",sans-serif' font-size="16.2">Mean y</text><text x="892.9" y="672.17" text-anchor="end" font-family='"Liberation Sans",sans-serif' font-size="16.2">0.08683</text><text x="741.9" y="694.1" font-family='"Liberation Sans",sans-serif' font-size="16.2">Std Dev x</text><text x="892.9" y="694.1" text-anchor="end" font-family='"Liberation Sans",sans-serif' font-size="16.2">0.6562</text><text x="741.9" y="716.03" font-family='"Liberation Sans",sans-serif' font-size="16.2">Std Dev y</text><text x="892.9" y="716.03" text-anchor="end" font-family='"Liberation Sans",sans-serif' font-size="16.2">0.3061</text>
<rect x="232.1" y="1063.7" width="9.9" height="10" fill="#b6c8e6"/>
<rect x="1158.1" y="631.5" width="676.1" height="397.8" fill="#fff"/>
<clipPath id="hc4"><rect x="1158.1" y="631.5" width="676.1" height="397.8"/></clipPath><g clip-path="url(#hc4)"><path fill="#1652cd" d="M1221.48 1026.19H1226.77V1029.3H1221.48ZM1237.33 1026.19H1242.61V1029.3H1237.33ZM1279.59 1026.19H1284.87V1029.3H1279.59ZM1205.64 1023.08H1216.2V1026.19H1205.64ZM1226.77 1023.08H1237.33V1026.19H1226.77ZM1253.18 1023.08H1258.46V1026.19H1253.18ZM1221.48 1019.98H1232.05V1023.08H1221.48ZM1253.18 1019.98H1258.46V1023.08H1253.18ZM1247.89 1016.87H1253.18V1019.98H1247.89ZM1216.2 1013.76H1221.48V1016.87H1216.2ZM1232.05 1013.76H1242.61V1016.87H1232.05ZM1210.92 1010.65H1216.2V1013.76H1210.92ZM1232.05 1010.65H1237.33V1013.76H1232.05ZM1200.36 1007.55H1205.64V1010.65H1200.36ZM1290.15 1007.55H1295.43V1010.65H1290.15ZM1200.36 1004.44H1205.64V1007.55H1200.36ZM1226.77 1004.44H1232.05V1007.55H1226.77ZM1242.61 1004.44H1247.89V1007.55H1242.61ZM1173.95 1001.33H1179.23V1004.44H1173.95ZM1200.36 1001.33H1210.92V1004.44H1200.36ZM1269.02 1001.33H1274.3V1004.44H1269.02ZM1168.66 998.22H1173.95V1001.33H1168.66ZM1205.64 998.22H1210.92V1001.33H1205.64ZM1242.61 998.22H1247.89V1001.33H1242.61ZM1263.74 998.22H1269.02V1001.33H1263.74ZM1195.07 995.11H1200.36V998.22H1195.07ZM1369.38 995.11H1374.66V998.22H1369.38ZM1163.38 992.01H1173.95V995.11H1163.38ZM1179.23 992.01H1184.51V995.11H1179.23ZM1189.79 992.01H1195.07V995.11H1189.79ZM1205.64 992.01H1210.92V995.11H1205.64ZM1163.38 988.9H1168.66V992.01H1163.38ZM1179.23 988.9H1184.51V992.01H1179.23ZM1221.48 988.9H1226.77V992.01H1221.48ZM1173.95 985.79H1179.23V988.9H1173.95ZM1195.07 985.79H1200.36V988.9H1195.07ZM1163.38 982.68H1168.66V985.79H1163.38ZM1173.95 982.68H1179.23V985.79H1173.95ZM1189.79 982.68H1195.07V985.79H1189.79ZM1200.36 982.68H1205.64V985.79H1200.36ZM1168.66 979.57H1173.95V982.68H1168.66ZM1210.92 976.47H1216.2V979.57H1210.92ZM1232.05 976.47H1237.33V979.57H1232.05ZM1168.66 973.36H1173.95V976.47H1168.66ZM1168.66 970.25H1173.95V973.36H1168.66ZM1163.38 964.04H1168.66V967.14H1163.38ZM1237.33 957.82H1242.61V960.93H1237.33ZM1216.2 954.71H1221.48V957.82H1216.2ZM1173.95 926.74H1179.23V929.85H1173.95ZM1195.07 895.66H1200.36V898.77H1195.07ZM1158.1 877.02H1163.38V880.12H1158.1ZM1158.1 873.91H1163.38V877.02H1158.1ZM1163.38 870.8H1168.66V873.91H1163.38Z"/><path fill="#1064dc" d="M1200.36 1026.19H1216.2V1029.3H1200.36ZM1221.48 1016.87H1232.05V1019.98H1221.48ZM1205.64 1013.76H1216.2V1016.87H1205.64ZM1200.36 1010.65H1210.92V1013.76H1200.36ZM1216.2 1010.65H1226.77V1013.76H1216.2ZM1195.07 1007.55H1200.36V1010.65H1195.07ZM1205.64 1007.55H1210.92V1010.65H1205.64ZM1216.2 1007.55H1221.48V1010.65H1216.2ZM1184.51 1004.44H1189.79V1007.55H1184.51ZM1195.07 1004.44H1200.36V1007.55H1195.07ZM1168.66 1001.33H1173.95V1004.44H1168.66ZM1179.23 1001.33H1200.36V1004.44H1179.23ZM1163.38 998.22H1168.66V1001.33H1163.38ZM1179.23 998.22H1189.79V1001.33H1179.23ZM1210.92 998.22H1216.2V1001.33H1210.92ZM1163.38 995.11H1173.95V998.22H1163.38ZM1158.1 886.34H1163.38V889.45H1158.1ZM1158.1 883.23H1163.38V886.34H1158.1Z"/><path fill="#1272d9" d="M1200.36 1023.08H1205.64V1026.19H1200.36ZM1195.07 1019.98H1200.36V1023.08H1195.07ZM1205.64 1019.98H1221.48V1023.08H1205.64ZM1210.92 1016.87H1221.48V1019.98H1210.92ZM1195.07 1013.76H1205.64V1016.87H1195.07ZM1189.79 1010.65H1200.36V1013.76H1189.79ZM1189.79 1007.55H1195.07V1010.65H1189.79ZM1168.66 1004.44H1184.51V1007.55H1168.66ZM1189.79 1004.44H1195.07V1007.55H1189.79ZM1163.38 1001.33H1168.66V1004.44H1163.38ZM1158.1 911.2H1163.38V914.31H1158.1ZM1158.1 904.99H1163.38V908.1H1158.1ZM1158.1 898.77H1163.38V901.88H1158.1ZM1158.1 892.56H1163.38V895.66H1158.1ZM1158.1 889.45H1163.38V892.56H1158.1Z"/><path fill="#1481d6" d="M1195.07 1026.19H1200.36V1029.3H1195.07ZM1189.79 1023.08H1200.36V1026.19H1189.79ZM1184.51 1019.98H1195.07V1023.08H1184.51ZM1200.36 1019.98H1205.64V1023.08H1200.36ZM1184.51 1016.87H1210.92V1019.98H1184.51ZM1179.23 1013.76H1195.07V1016.87H1179.23ZM1173.95 1010.65H1189.79V1013.76H1173.95ZM1173.95 1007.55H1189.79V1010.65H1173.95ZM1163.38 1004.44H1168.66V1007.55H1163.38ZM1158.1 923.63H1163.38V926.74H1158.1ZM1158.1 914.31H1163.38V917.42H1158.1ZM1158.1 908.1H1163.38V911.2H1158.1ZM1158.1 901.88H1163.38V904.99H1158.1ZM1158.1 895.66H1163.38V898.77H1158.1Z"/><path fill="#0e8fd1" d="M1184.51 1026.19H1195.07V1029.3H1184.51ZM1184.51 1023.08H1189.79V1026.19H1184.51ZM1179.23 1019.98H1184.51V1023.08H1179.23ZM1179.23 1016.87H1184.51V1019.98H1179.23ZM1173.95 1013.76H1179.23V1016.87H1173.95ZM1168.66 1010.65H1173.95V1013.76H1168.66ZM1163.38 1007.55H1173.95V1010.65H1163.38ZM1158.1 936.07H1163.38V939.17H1158.1ZM1158.1 929.85H1163.38V932.96H1158.1ZM1158.1 926.74H1163.38V929.85H1158.1ZM1158.1 920.53H1163.38V923.63H1158.1ZM1158.1 917.42H1163.38V920.53H1158.1Z"/><path fill="#099dcc" d="M1179.23 1026.19H1184.51V1029.3H1179.23ZM1179.23 1023.08H1184.51V1026.19H1179.23ZM1173.95 1019.98H1179.23V1023.08H1173.95ZM1173.95 1016.87H1179.23V1019.98H1173.95ZM1168.66 1013.76H1173.95V1016.87H1168.66ZM1163.38 1010.65H1168.66V1013.76H1163.38ZM1158.1 948.5H1163.38V951.6H1158.1ZM1158.1 945.39H1163.38V948.5H1158.1ZM1158.1 942.28H1163.38V945.39H1158.1ZM1158.1 939.17H1163.38V942.28H1158.1ZM1158.1 932.96H1163.38V936.07H1158.1Z"/><path fill="#0da7c3" d="M1173.95 1026.19H1179.23V1029.3H1173.95ZM1173.95 1023.08H1179.23V1026.19H1173.95ZM1168.66 1016.87H1173.95V1019.98H1168.66ZM1163.38 1013.76H1168.66V1016.87H1163.38ZM1158.1 964.04H1163.38V967.14H1158.1ZM1158.1 960.93H1163.38V964.04H1158.1ZM1158.1 957.82H1163.38V960.93H1158.1ZM1158.1 954.71H1163.38V957.82H1158.1ZM1158.1 951.6H1163.38V954.71H1158.1Z"/><path fill="#1eafb3" d="M1168.66 1019.98H1173.95V1023.08H1168.66ZM1163.38 1016.87H1168.66V1019.98H1163.38ZM1158.1 979.57H1163.38V982.68H1158.1ZM1158.1 976.47H1163.38V979.57H1158.1ZM1158.1 973.36H1163.38V976.47H1158.1ZM1158.1 970.25H1163.38V973.36H1158.1ZM1158.1 967.14H1163.38V970.25H1158.1Z"/><path fill="#2eb7a4" d="M1168.66 1026.19H1173.95V1029.3H1168.66ZM1168.66 1023.08H1173.95V1026.19H1168.66ZM1158.1 992.01H1163.38V995.11H1158.1ZM1158.1 988.9H1163.38V992.01H1158.1ZM1158.1 985.79H1163.38V988.9H1158.1ZM1158.1 982.68H1163.38V985.79H1158.1Z"/><path fill="#52ba92" d="M1163.38 1019.98H1168.66V1023.08H1163.38ZM1158.1 998.22H1163.38V1001.33H1158.1ZM1158.1 995.11H1163.38V998.22H1158.1Z"/><path fill="#74bd81" d="M1158.1 1001.33H1163.38V1004.44H1158.1Z"/><path fill="#95be71" d="M1163.38 1026.19H1168.66V1029.3H1163.38ZM1163.38 1023.08H1168.66V1026.19H1163.38ZM1158.1 1004.44H1163.38V1007.55H1158.1Z"/><path fill="#b3bd65" d="M1158.1 1007.55H1163.38V1010.65H1158.1Z"/><path fill="#d1bb59" d="M1158.1 1010.65H1163.38V1013.76H1158.1Z"/><path fill="#f4c63b" d="M1158.1 1013.76H1163.38V1016.87H1158.1Z"/><path fill="#fdd22b" d="M1158.1 1016.87H1163.38V1019.98H1158.1Z"/><path fill="#f9f90f" d="M1158.1 1026.19H1163.38V1029.3H1158.1ZM1158.1 1023.08H1163.38V1026.19H1158.1ZM1158.1 1019.98H1163.38V1023.08H1158.1Z"/></g>
<path d="M1184.51 1029.3V1021.9M1210.92 1029.3V1021.9M1237.33 1029.3V1021.9M1263.74 1029.3V1015.1M1290.15 1029.3V1021.9M1316.56 1029.3V1021.9M1342.97 1029.3V1021.9M1369.38 1029.3V1015.1M1395.79 1029.3V1021.9M1422.2 1029.3V1021.9M1448.61 1029.3V1021.9M1475.02 1029.3V1015.1M1501.43 1029.3V1021.9M1527.84 1029.3V1021.9M1554.25 1029.3V1021.9M1580.66 1029.3V1015.1M1607.07 1029.3V1021.9M1633.48 1029.3V1021.9M1659.89 1029.3V1021.9M1686.3 1029.3V1015.1M1712.71 1029.3V1021.9M1739.12 1029.3V1021.9M1765.53 1029.3V1021.9M1791.94 1029.3V1015.1M1818.35 1029.3V1021.9M1158.1 1013.76H1170.4M1158.1 998.22H1170.4M1158.1 982.68H1170.4M1158.1 967.14H1182.8M1158.1 951.6H1170.4M1158.1 936.07H1170.4M1158.1 920.53H1170.4M1158.1 904.99H1182.8M1158.1 889.45H1170.4M1158.1 873.91H1170.4M1158.1 858.37H1170.4M1158.1 842.83H1182.8M1158.1 827.29H1170.4M1158.1 811.75H1170.4M1158.1 796.21H1170.4M1158.1 780.67H1182.8M1158.1 765.14H1170.4M1158.1 749.6H1170.4M1158.1 734.06H1170.4M1158.1 718.52H1182.8M1158.1 702.98H1170.4M1158.1 687.44H1170.4M1158.1 671.9H1170.4M1158.1 656.36H1182.8M1158.1 640.82H1170.4" stroke="#000" stroke-width="1.1" fill="none"/><rect x="1158.1" y="631.5" width="676.1" height="397.8" fill="none" stroke="#262626" stroke-width="1.15"/><text x="1158.1" y="1046.8" text-anchor="middle" font-family='"Liberation Sans",sans-serif' font-size="16.4">0</text><text x="1154.5" y="1034.2" text-anchor="end" font-family='"Liberation Sans",sans-serif' font-size="16.4">0</text><text x="1263.74" y="1046.8" text-anchor="middle" font-family='"Liberation Sans",sans-serif' font-size="16.4">20</text><text x="1154.5" y="972.04" text-anchor="end" font-family='"Liberation Sans",sans-serif' font-size="16.4">20</text><text x="1369.38" y="1046.8" text-anchor="middle" font-family='"Liberation Sans",sans-serif' font-size="16.4">40</text><text x="1154.5" y="909.89" text-anchor="end" font-family='"Liberation Sans",sans-serif' font-size="16.4">40</text><text x="1475.02" y="1046.8" text-anchor="middle" font-family='"Liberation Sans",sans-serif' font-size="16.4">60</text><text x="1154.5" y="847.73" text-anchor="end" font-family='"Liberation Sans",sans-serif' font-size="16.4">60</text><text x="1580.66" y="1046.8" text-anchor="middle" font-family='"Liberation Sans",sans-serif' font-size="16.4">80</text><text x="1154.5" y="785.57" text-anchor="end" font-family='"Liberation Sans",sans-serif' font-size="16.4">80</text><text x="1686.3" y="1046.8" text-anchor="middle" font-family='"Liberation Sans",sans-serif' font-size="16.4">100</text><text x="1154.5" y="723.42" text-anchor="end" font-family='"Liberation Sans",sans-serif' font-size="16.4">100</text><text x="1791.94" y="1046.8" text-anchor="middle" font-family='"Liberation Sans",sans-serif' font-size="16.4">120</text><text x="1154.5" y="661.26" text-anchor="end" font-family='"Liberation Sans",sans-serif' font-size="16.4">120</text>
<rect x="1842.8" y="1009.11" width="34.6" height="20.49" fill="#263ea8"/><rect x="1842.8" y="989.22" width="34.6" height="20.49" fill="#1652cd"/><rect x="1842.8" y="969.33" width="34.6" height="20.49" fill="#1064dc"/><rect x="1842.8" y="949.44" width="34.6" height="20.49" fill="#1272d9"/><rect x="1842.8" y="929.55" width="34.6" height="20.49" fill="#1481d6"/><rect x="1842.8" y="909.66" width="34.6" height="20.49" fill="#0e8fd1"/><rect x="1842.8" y="889.77" width="34.6" height="20.49" fill="#099dcc"/><rect x="1842.8" y="869.88" width="34.6" height="20.49" fill="#0da7c3"/><rect x="1842.8" y="849.99" width="34.6" height="20.49" fill="#1eafb3"/><rect x="1842.8" y="830.1" width="34.6" height="20.49" fill="#2eb7a4"/><rect x="1842.8" y="810.21" width="34.6" height="20.49" fill="#52ba92"/><rect x="1842.8" y="790.32" width="34.6" height="20.49" fill="#74bd81"/><rect x="1842.8" y="770.43" width="34.6" height="20.49" fill="#95be71"/><rect x="1842.8" y="750.54" width="34.6" height="20.49" fill="#b3bd65"/><rect x="1842.8" y="730.65" width="34.6" height="20.49" fill="#d1bb59"/><rect x="1842.8" y="710.76" width="34.6" height="20.49" fill="#e2c04b"/><rect x="1842.8" y="690.87" width="34.6" height="20.49" fill="#f4c63b"/><rect x="1842.8" y="670.98" width="34.6" height="20.49" fill="#fdd22b"/><rect x="1842.8" y="651.09" width="34.6" height="20.49" fill="#fbe61d"/><rect x="1842.8" y="631.2" width="34.6" height="20.49" fill="#f9f90f"/><path d="M1877.4 1029.62H1867M1877.4 1023.33H1867M1877.4 1018.45H1867M1877.4 1014.47H1867M1877.4 1011.1H1867M1877.4 1008.18H1867M1877.4 1005.6H1867M1877.4 1003.3H1857M1877.4 988.15H1867M1877.4 979.28H1867M1877.4 972.99H1867M1877.4 968.11H1867M1877.4 964.13H1867M1877.4 960.76H1867M1877.4 957.84H1867M1877.4 955.26H1867M1877.4 952.96H1857M1877.4 937.81H1867M1877.4 928.94H1867M1877.4 922.65H1867M1877.4 917.77H1867M1877.4 913.79H1867M1877.4 910.42H1867M1877.4 907.5H1867M1877.4 904.92H1867M1877.4 902.62H1857M1877.4 887.47H1867M1877.4 878.6H1867M1877.4 872.31H1867M1877.4 867.43H1867M1877.4 863.45H1867M1877.4 860.08H1867M1877.4 857.16H1867M1877.4 854.58H1867M1877.4 852.28H1857M1877.4 837.13H1867M1877.4 828.26H1867M1877.4 821.97H1867M1877.4 817.09H1867M1877.4 813.11H1867M1877.4 809.74H1867M1877.4 806.82H1867M1877.4 804.24H1867M1877.4 801.94H1857M1877.4 786.79H1867M1877.4 777.92H1867M1877.4 771.63H1867M1877.4 766.75H1867M1877.4 762.77H1867M1877.4 759.4H1867M1877.4 756.48H1867M1877.4 753.9H1867M1877.4 751.6H1857M1877.4 736.45H1867M1877.4 727.58H1867M1877.4 721.29H1867M1877.4 716.41H1867M1877.4 712.43H1867M1877.4 709.06H1867M1877.4 706.14H1867M1877.4 703.56H1867M1877.4 701.26H1857M1877.4 686.11H1867M1877.4 677.24H1867M1877.4 670.95H1867M1877.4 666.07H1867M1877.4 662.09H1867M1877.4 658.72H1867M1877.4 655.8H1867M1877.4 653.22H1867M1877.4 650.92H1857M1877.4 635.77H1867" stroke="#000" stroke-width="1.1" fill="none"/><path d="M1877.4 631.5V1029.3" stroke="#000" stroke-width="1.2"/><text x="1881.2" y="1010" font-family='"Liberation Sans",sans-serif' font-size="16.4">10</text><text x="1901" y="1004.1" font-family='"Liberation Sans",sans-serif' font-size="10.6">0</text><text x="1881.2" y="959.66" font-family='"Liberation Sans",sans-serif' font-size="16.4">10</text><text x="1901" y="953.76" font-family='"Liberation Sans",sans-serif' font-size="10.6">1</text><text x="1881.2" y="909.32" font-family='"Liberation Sans",sans-serif' font-size="16.4">10</text><text x="1901" y="903.42" font-family='"Liberation Sans",sans-serif' font-size="10.6">2</text><text x="1881.2" y="858.98" font-family='"Liberation Sans",sans-serif' font-size="16.4">10</text><text x="1901" y="853.08" font-family='"Liberation Sans",sans-serif' font-size="10.6">3</text><text x="1881.2" y="808.64" font-family='"Liberation Sans",sans-serif' font-size="16.4">10</text><text x="1901" y="802.74" font-family='"Liberation Sans",sans-serif' font-size="10.6">4</text><text x="1881.2" y="758.3" font-family='"Liberation Sans",sans-serif' font-size="16.4">10</text><text x="1901" y="752.4" font-family='"Liberation Sans",sans-serif' font-size="10.6">5</text><text x="1881.2" y="707.96" font-family='"Liberation Sans",sans-serif' font-size="16.4">10</text><text x="1901" y="702.06" font-family='"Liberation Sans",sans-serif' font-size="10.6">6</text><text x="1881.2" y="657.62" font-family='"Liberation Sans",sans-serif' font-size="16.4">10</text><text x="1901" y="651.72" font-family='"Liberation Sans",sans-serif' font-size="10.6">7</text>
<rect x="1527.5" y="582.5" width="169.2" height="130.5" fill="#fff" stroke="#333" stroke-width="1.1"/><path d="M1527.5 604.25H1696.7" stroke="#333" stroke-width="1.1"/><text x="1612.1" y="597.17" text-anchor="middle" font-family='"Liberation Sans",sans-serif' font-size="16.2">xyMultiplicityDSSD3</text><text x="1536.9" y="619.73" font-family='"Liberation Sans",sans-serif' font-size="16.2">Entries</text><text x="1687.9" y="619.73" text-anchor="end" font-family='"Liberation Sans",sans-serif' font-size="16.2">70352682</text><text x="1536.9" y="641.48" font-family='"Liberation Sans",sans-serif' font-size="16.2">Mean x</text><text x="1687.9" y="641.48" text-anchor="end" font-family='"Liberation Sans",sans-serif' font-size="16.2">0.005097</text><text x="1536.9" y="663.23" font-family='"Liberation Sans",sans-serif' font-size="16.2">Mean y</text><text x="1687.9" y="663.23" text-anchor="end" font-family='"Liberation Sans",sans-serif' font-size="16.2">1.070</text><text x="1536.9" y="684.98" font-family='"Liberation Sans",sans-serif' font-size="16.2">Std Dev x</text><text x="1687.9" y="684.98" text-anchor="end" font-family='"Liberation Sans",sans-serif' font-size="16.2">0.07507</text><text x="1536.9" y="706.73" font-family='"Liberation Sans",sans-serif' font-size="16.2">Std Dev y</text><text x="1687.9" y="706.73" text-anchor="end" font-family='"Liberation Sans",sans-serif' font-size="16.2">0.9379</text>
<rect x="1078.1" y="1063.7" width="9.9" height="10" fill="#b6c8e6"/>
</svg></body></html>
